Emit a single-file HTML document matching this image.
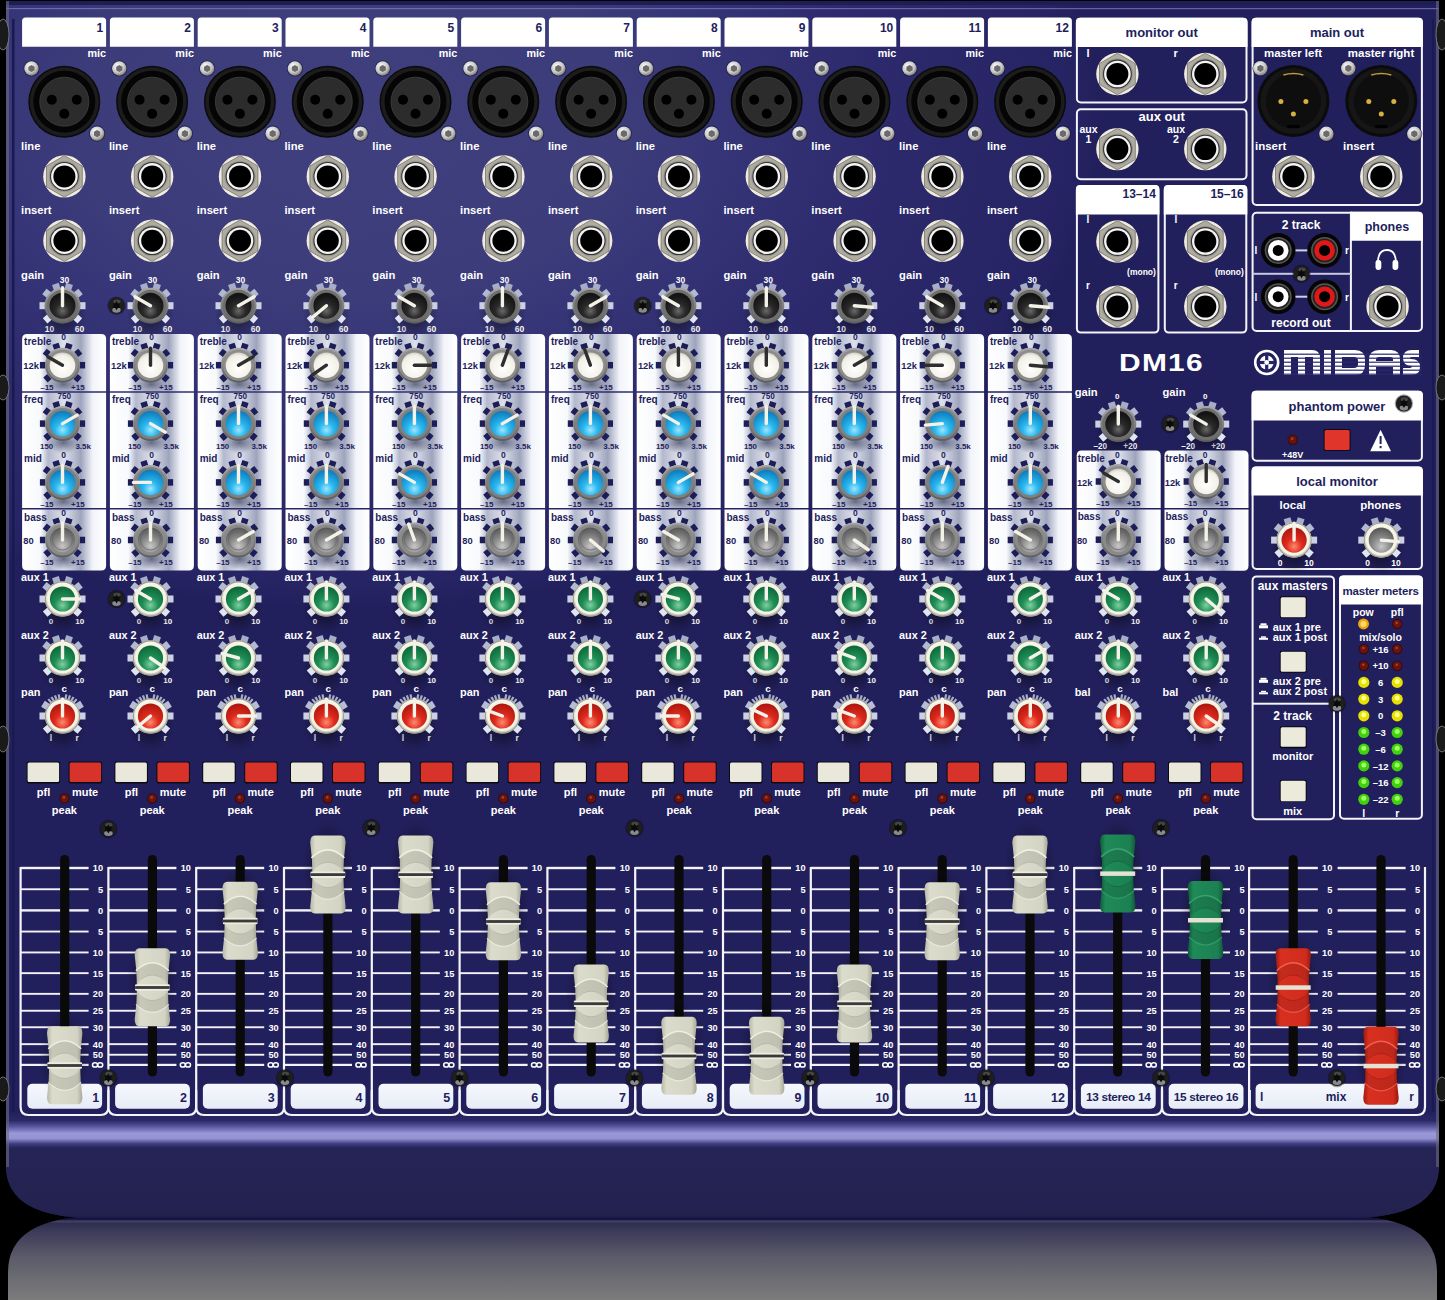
<!DOCTYPE html>
<html><head><meta charset="utf-8"><title>Midas DM16</title>
<style>html,body{margin:0;padding:0;background:#000;width:1445px;height:1300px;overflow:hidden} svg{display:block} text{font-family:"Liberation Sans",sans-serif;font-weight:bold}</style>
</head><body>
<svg width="1445" height="1300" viewBox="0 0 1445 1300" style="font-family:'Liberation Sans',sans-serif;font-weight:bold"><defs>
<radialGradient id="gPanel" gradientUnits="userSpaceOnUse" cx="350" cy="120" r="750" gradientTransform="translate(350,120) scale(1,0.65) translate(-350,-120)">
  <stop offset="0" stop-color="#40407e"/><stop offset="0.37" stop-color="#3c3c7a"/><stop offset="0.47" stop-color="#373678"/><stop offset="0.71" stop-color="#2c2a6c"/><stop offset="0.95" stop-color="#262464"/><stop offset="1" stop-color="#22205c"/>
</radialGradient>
<linearGradient id="gLip" x1="0" y1="0" x2="0" y2="1">
  <stop offset="0" stop-color="#22205c"/><stop offset="0.08" stop-color="#2a2966"/><stop offset="0.14" stop-color="#5a58a0"/><stop offset="0.2" stop-color="#9a98d8"/><stop offset="0.25" stop-color="#9492d0"/><stop offset="0.3" stop-color="#3e3d82"/><stop offset="0.34" stop-color="#252456"/><stop offset="0.97" stop-color="#23224f"/><stop offset="1" stop-color="#1c1b48"/>
</linearGradient>
<linearGradient id="gRefl" x1="0" y1="0" x2="0" y2="1">
  <stop offset="0" stop-color="#14123e"/><stop offset="0.04" stop-color="#14123e"/><stop offset="0.06" stop-color="#444266"/><stop offset="0.09" stop-color="#302e50"/><stop offset="0.16" stop-color="#3a3858"/><stop offset="0.5" stop-color="#5c5c6a"/><stop offset="1" stop-color="#7c7c7c"/>
</linearGradient>
<radialGradient id="gBlackKnob" cx="0.5" cy="0.7" r="0.6">
  <stop offset="0" stop-color="#6a6a6a"/><stop offset="0.45" stop-color="#2a2a2a"/><stop offset="1" stop-color="#141414"/>
</radialGradient>
<linearGradient id="gGreyRing" x1="0" y1="0" x2="0" y2="1">
  <stop offset="0" stop-color="#a8a8a8"/><stop offset="1" stop-color="#5c5c5c"/>
</linearGradient>
<radialGradient id="gWhiteKnob" cx="0.5" cy="0.6" r="0.6">
  <stop offset="0" stop-color="#ffffff"/><stop offset="0.8" stop-color="#f2f0e6"/><stop offset="1" stop-color="#cfcfc5"/>
</radialGradient>
<radialGradient id="gBlueKnob" cx="0.5" cy="0.75" r="0.7">
  <stop offset="0" stop-color="#9fe6ff"/><stop offset="0.4" stop-color="#2ab8ef"/><stop offset="1" stop-color="#0f7fc0"/>
</radialGradient>
<radialGradient id="gGreyKnob" cx="0.5" cy="0.75" r="0.7">
  <stop offset="0" stop-color="#c8c8c8"/><stop offset="0.5" stop-color="#8a8a8a"/><stop offset="1" stop-color="#5a5a5a"/>
</radialGradient>
<radialGradient id="gGreenKnob" cx="0.5" cy="0.75" r="0.7">
  <stop offset="0" stop-color="#7fd0a0"/><stop offset="0.45" stop-color="#1f8d56"/><stop offset="1" stop-color="#0f6a3a"/>
</radialGradient>
<radialGradient id="gRedKnob" cx="0.5" cy="0.75" r="0.7">
  <stop offset="0" stop-color="#ff8a70"/><stop offset="0.45" stop-color="#dd2a1c"/><stop offset="1" stop-color="#b01810"/>
</radialGradient>
<linearGradient id="gCreamRing" x1="0" y1="0" x2="0" y2="1">
  <stop offset="0" stop-color="#fbfaf0"/><stop offset="1" stop-color="#c9c8b8"/>
</linearGradient>
<radialGradient id="gShadow" cx="0.5" cy="0.5" r="0.5">
  <stop offset="0" stop-color="#000" stop-opacity="0.55"/><stop offset="1" stop-color="#000" stop-opacity="0"/>
</radialGradient>
<radialGradient id="gShadowW" cx="0.5" cy="0.5" r="0.5">
  <stop offset="0" stop-color="#30365a" stop-opacity="0.7"/><stop offset="0.5" stop-color="#30365a" stop-opacity="0.35"/><stop offset="1" stop-color="#30365a" stop-opacity="0"/>
</radialGradient>
<linearGradient id="gEqBand" x1="0" y1="0" x2="1" y2="0">
  <stop offset="0" stop-color="#ffffff"/><stop offset="0.22" stop-color="#f8f9fc"/><stop offset="0.31" stop-color="#b4b8cc"/><stop offset="0.5" stop-color="#dde1ec"/><stop offset="0.7" stop-color="#9ea4bc"/><stop offset="0.84" stop-color="#f2f4fa"/><stop offset="1" stop-color="#ffffff"/>
</linearGradient>
<linearGradient id="gJackNut" x1="0" y1="0" x2="1" y2="1">
  <stop offset="0" stop-color="#f4efe0"/><stop offset="0.5" stop-color="#a8a49a"/><stop offset="1" stop-color="#e0d6bc"/>
</linearGradient>
<radialGradient id="gScrewS" cx="0.4" cy="0.35" r="0.7">
  <stop offset="0" stop-color="#ffffff"/><stop offset="0.6" stop-color="#c8c8c8"/><stop offset="1" stop-color="#7a7468"/>
</radialGradient>
<radialGradient id="gScrewB" cx="0.5" cy="0.3" r="0.7">
  <stop offset="0" stop-color="#4a4a4a"/><stop offset="1" stop-color="#0c0c0c"/>
</radialGradient>
<linearGradient id="gCapCream" x1="0" y1="0" x2="1" y2="0">
  <stop offset="0" stop-color="#b8b8a8"/><stop offset="0.15" stop-color="#dcdccc"/><stop offset="0.85" stop-color="#d4d4c4"/><stop offset="1" stop-color="#a8a898"/>
</linearGradient>
<linearGradient id="gCapGreen" x1="0" y1="0" x2="1" y2="0">
  <stop offset="0" stop-color="#0f5c38"/><stop offset="0.15" stop-color="#1f8a58"/><stop offset="0.85" stop-color="#1c8052"/><stop offset="1" stop-color="#0f5a36"/>
</linearGradient>
<linearGradient id="gCapRed" x1="0" y1="0" x2="1" y2="0">
  <stop offset="0" stop-color="#9a1a10"/><stop offset="0.15" stop-color="#d83020"/><stop offset="0.85" stop-color="#d02c1e"/><stop offset="1" stop-color="#981810"/>
</linearGradient>
<linearGradient id="gLabel" x1="0" y1="0" x2="0" y2="1">
  <stop offset="0" stop-color="#f6f8fd"/><stop offset="1" stop-color="#e6ecf6"/>
</linearGradient>
<linearGradient id="gTick" gradientUnits="userSpaceOnUse" x1="0" y1="-24" x2="0" y2="24">
  <stop offset="0" stop-color="#a2aac4"/><stop offset="0.5" stop-color="#ccd3e8"/><stop offset="1" stop-color="#dfe4f4"/>
</linearGradient>
<filter id="blur2" x="-50%" y="-50%" width="200%" height="200%"><feGaussianBlur stdDeviation="2"/></filter>
<g id="tkLight"><rect x="-3.5" y="-23" width="7" height="6.199999999999999" fill="#e0e5f4" transform="rotate(-131)" opacity="1"/><rect x="-3.5" y="-23" width="7" height="6.199999999999999" fill="#cbd1e3" transform="rotate(-90)" opacity="1"/><rect x="-3.5" y="-23" width="7" height="6.199999999999999" fill="#b2bad1" transform="rotate(-52)" opacity="1"/><rect x="-3.5" y="-23" width="7" height="6.199999999999999" fill="#a5adc7" transform="rotate(-18)" opacity="1"/><rect x="-3.5" y="-23" width="7" height="6.199999999999999" fill="#a5adc7" transform="rotate(18)" opacity="1"/><rect x="-3.5" y="-23" width="7" height="6.199999999999999" fill="#b2bad1" transform="rotate(52)" opacity="1"/><rect x="-3.5" y="-23" width="7" height="6.199999999999999" fill="#cbd1e3" transform="rotate(90)" opacity="1"/><rect x="-3.5" y="-23" width="7" height="6.199999999999999" fill="#e0e5f4" transform="rotate(131)" opacity="1"/></g><g id="tkDark"><rect x="-3.25" y="-22.6" width="6.5" height="5.300000000000001" fill="#1d1d58" transform="rotate(-131)" opacity="1"/><rect x="-3.25" y="-22.6" width="6.5" height="5.300000000000001" fill="#1d1d58" transform="rotate(-90)" opacity="1"/><rect x="-3.25" y="-22.6" width="6.5" height="5.300000000000001" fill="#1d1d58" transform="rotate(-52)" opacity="1"/><rect x="-3.25" y="-22.6" width="6.5" height="5.300000000000001" fill="#1d1d58" transform="rotate(-18)" opacity="1"/><rect x="-3.25" y="-22.6" width="6.5" height="5.300000000000001" fill="#1d1d58" transform="rotate(18)" opacity="1"/><rect x="-3.25" y="-22.6" width="6.5" height="5.300000000000001" fill="#1d1d58" transform="rotate(52)" opacity="1"/><rect x="-3.25" y="-22.6" width="6.5" height="5.300000000000001" fill="#1d1d58" transform="rotate(90)" opacity="1"/><rect x="-3.25" y="-22.6" width="6.5" height="5.300000000000001" fill="#1d1d58" transform="rotate(131)" opacity="1"/></g><g id="tkPan"><rect x="-3.5" y="-23" width="7" height="6.199999999999999" fill="#e0e5f4" transform="rotate(-131)" opacity="1"/><rect x="-3.5" y="-23" width="7" height="6.199999999999999" fill="#cbd1e3" transform="rotate(-90)" opacity="1"/><rect x="-3.5" y="-23" width="7" height="6.199999999999999" fill="#b6bdd4" transform="rotate(-58)" opacity="1"/><rect x="-3.5" y="-23" width="7" height="6.199999999999999" fill="#b6bdd4" transform="rotate(58)" opacity="1"/><rect x="-3.5" y="-23" width="7" height="6.199999999999999" fill="#cbd1e3" transform="rotate(90)" opacity="1"/><rect x="-3.5" y="-23" width="7" height="6.199999999999999" fill="#e0e5f4" transform="rotate(131)" opacity="1"/><rect x="-1.1" y="-22" width="2.2" height="5" fill="#adb4cc" transform="rotate(-40)" opacity="1"/><rect x="-1.1" y="-22" width="2.2" height="5" fill="#a9b0ca" transform="rotate(-30)" opacity="1"/><rect x="-1.1" y="-22" width="2.2" height="5" fill="#a6aec7" transform="rotate(-20)" opacity="1"/><rect x="-1.1" y="-22" width="2.2" height="5" fill="#a4acc6" transform="rotate(-10)" opacity="1"/><rect x="-1.1" y="-22" width="2.2" height="5" fill="#a4acc6" transform="rotate(10)" opacity="1"/><rect x="-1.1" y="-22" width="2.2" height="5" fill="#a6aec7" transform="rotate(20)" opacity="1"/><rect x="-1.1" y="-22" width="2.2" height="5" fill="#a9b0ca" transform="rotate(30)" opacity="1"/><rect x="-1.1" y="-22" width="2.2" height="5" fill="#adb4cc" transform="rotate(40)" opacity="1"/></g><g id="kGain"><use href="#tkLight"/><circle r="18" fill="url(#gGreyRing)"/><circle r="16" fill="#6e6e6e"/><circle r="13" fill="url(#gBlackKnob)"/></g><g id="kTreble"><use href="#tkDark"/><circle r="17.5" fill="url(#gGreyRing)"/><circle r="15.5" fill="#8c8c8c"/><circle r="12.8" fill="url(#gWhiteKnob)"/></g><g id="kBlue"><use href="#tkDark"/><circle r="17.5" fill="url(#gGreyRing)"/><circle r="15.5" fill="#808080"/><circle r="12.8" fill="url(#gBlueKnob)"/></g><g id="kBass"><use href="#tkDark"/><circle r="17.5" fill="url(#gGreyRing)"/><circle r="15.5" fill="#8a8a8a"/><circle r="12.5" fill="url(#gGreyKnob)"/><circle r="10" fill="none" stroke="#6a6a6a" stroke-width="0.8"/></g><g id="kGreen"><use href="#tkLight"/><circle r="17.6" fill="url(#gCreamRing)"/><circle r="17.1" fill="none" stroke="#9e9c8c" stroke-width="1.1"/><circle r="15.3" fill="#f5f4e8"/><circle r="12.6" fill="url(#gGreenKnob)"/></g><g id="kRed"><use href="#tkPan"/><circle r="17.6" fill="url(#gCreamRing)"/><circle r="17.1" fill="none" stroke="#9e9c8c" stroke-width="1.1"/><circle r="15.3" fill="#f5f4e8"/><circle r="12.6" fill="url(#gRedKnob)"/></g><g id="kRedL"><use href="#tkLight"/><circle r="17.6" fill="url(#gCreamRing)"/><circle r="17.1" fill="none" stroke="#9e9c8c" stroke-width="1.1"/><circle r="15.3" fill="#f5f4e8"/><circle r="12.6" fill="url(#gRedKnob)"/></g><g id="kGreyL"><use href="#tkLight"/><circle r="17.6" fill="url(#gCreamRing)"/><circle r="17.1" fill="none" stroke="#9e9c8c" stroke-width="1.1"/><circle r="15.3" fill="#f5f4e8"/><circle r="12.6" fill="url(#gGreyKnob)"/></g><g id="jack"><circle r="21.2" fill="#efebdf"/><polygon points="0,-20.8 17.9,-10.4 17.9,10.4 0,20.8 -17.9,10.4 -17.9,-10.4" fill="#aeaba1" stroke="#77746a" stroke-width="0.8"/><circle r="15.6" fill="#97958c"/><circle r="14.4" fill="#333"/><circle r="13.3" fill="#f4f4f4"/><circle r="11" fill="#000"/></g><g id="xlrF"><circle r="36" fill="#0b0b0b"/><circle r="34.5" fill="#1c1c1c"/><circle r="31" fill="#050505"/><circle r="24.5" fill="#2c2c2c"/><circle r="24.5" fill="none" stroke="#3a3a3a" stroke-width="1"/><circle cx="-12.5" cy="-2" r="5" fill="#000"/><circle cx="12.5" cy="-2" r="5" fill="#000"/><circle cx="0" cy="12" r="5" fill="#000"/></g><g id="xlrM"><circle r="36" fill="#0b0b0b"/><circle r="33" fill="#161616"/><circle r="27.5" fill="#0e0e0e"/><path d="M-10,-26 Q0,-29 10,-26" stroke="#c09a38" stroke-width="1.6" fill="none"/><circle cx="-12.5" cy="0.5" r="2.5" fill="#d8b040"/><circle cx="12.5" cy="0.5" r="2.5" fill="#d8b040"/><circle cx="0" cy="13" r="2.5" fill="#d8b040"/><rect x="-6" y="24" width="12" height="3" fill="#000"/></g><g id="screwS"><circle r="8" fill="#101030" opacity="0.6"/><circle r="7.2" fill="url(#gScrewS)"/><polygon points="0,-3.6 3.1,-1.8 3.1,1.8 0,3.6 -3.1,1.8 -3.1,-1.8" fill="#6a6a6a"/></g><g id="screwB"><circle r="9.2" fill="#000" opacity="0.35"/><circle r="8.1" fill="#1e1e1c"/><ellipse cx="0" cy="4.3" rx="4.2" ry="2.7" fill="#9c9ca4" opacity="0.85"/><ellipse cx="0.5" cy="-4.3" rx="3.6" ry="2" fill="#606060" opacity="0.6"/><path d="M0,-4.6 L1.3,-2.3 3.9,-2.3 2.6,0 3.9,2.3 1.3,2.3 0,4.6 -1.3,2.3 -3.9,2.3 -2.6,0 -3.9,-2.3 -1.3,-2.3 Z" fill="#0a0a0a"/></g><g id="led"><circle r="5.2" fill="#3a0808"/><circle r="4.2" fill="#6a1410"/><circle cx="-0.5" cy="-1" r="1.3" fill="#a04030"/></g></defs><path d="M95,1216 L1350,1216 Q1437,1218 1437,1272 L1437,1300 L8,1300 L8,1272 Q8,1218 95,1216 Z" fill="url(#gRefl)"/>
<path d="M6,1 L1439,1 L1439,1166 Q1439,1218 1348,1218 L95,1218 Q6,1218 6,1166 Z" fill="url(#gPanel)"/>
<path d="M6,1112 L1439,1112 L1439,1166 Q1439,1218 1348,1218 L95,1218 Q6,1218 6,1166 Z" fill="url(#gLip)"/>
<rect x="6" y="1" width="1433" height="4" fill="#1e1d55"/>
<rect x="6" y="8" width="1433" height="1.2" fill="#8080c0" opacity="0.7"/>
<rect x="12" y="19" width="2.5" height="1093" fill="#1a1a52"/>
<rect x="1432" y="19" width="2" height="1093" fill="#1a1a52"/>
<rect x="6" y="1" width="3" height="1166" fill="#6a6a80" opacity="0.6"/>
<rect x="1436" y="1" width="3" height="1166" fill="#6a6a80" opacity="0.6"/>
<ellipse cx="3" cy="34.5" rx="6" ry="15.5" fill="#1a1a1a" stroke="#888" stroke-width="0.8"/>
<ellipse cx="1442" cy="34.5" rx="6" ry="15.5" fill="#1a1a1a" stroke="#888" stroke-width="0.8"/>
<ellipse cx="3" cy="387.5" rx="6" ry="12.5" fill="#1a1a1a" stroke="#888" stroke-width="0.8"/>
<ellipse cx="1442" cy="387.5" rx="6" ry="12.5" fill="#1a1a1a" stroke="#888" stroke-width="0.8"/>
<ellipse cx="3" cy="739.0" rx="6" ry="13.0" fill="#1a1a1a" stroke="#888" stroke-width="0.8"/>
<ellipse cx="1442" cy="739.0" rx="6" ry="13.0" fill="#1a1a1a" stroke="#888" stroke-width="0.8"/>
<ellipse cx="3" cy="1089.0" rx="6" ry="12.0" fill="#1a1a1a" stroke="#888" stroke-width="0.8"/>
<ellipse cx="1442" cy="1089.0" rx="6" ry="12.0" fill="#1a1a1a" stroke="#888" stroke-width="0.8"/>
<path d="M22.1,46.8 L22.1,21 Q22.1,17.5 25.6,17.5 L102.6,17.5 Q106.1,17.5 106.1,21 L106.1,46.8 Z" fill="#fff"/>
<text x="103.1" y="31.5" font-size="12" fill="#1e1e5c" text-anchor="end" >1</text>
<text x="106.1" y="57.0" font-size="10.8" fill="#fff" text-anchor="end" >mic</text>
<use href="#xlrF" x="64.3" y="101.7"/>
<use href="#screwS" x="31.5" y="68.5"/>
<use href="#screwS" x="97.1" y="133.6"/>
<text x="21.1" y="150.2" font-size="11.2" fill="#fff" text-anchor="start" >line</text>
<use href="#jack" x="64.4" y="176.4"/>
<text x="21.1" y="214.4" font-size="11.2" fill="#fff" text-anchor="start" >insert</text>
<use href="#jack" x="64.4" y="240.7"/>
<text x="21.1" y="278.5" font-size="11.2" fill="#fff" text-anchor="start" >gain</text>
<text x="64.5" y="283.0" font-size="8.5" fill="#fff" text-anchor="middle" >30</text>
<text x="49.5" y="332.0" font-size="8.5" fill="#fff" text-anchor="middle" >10</text>
<text x="79.5" y="332.0" font-size="8.5" fill="#fff" text-anchor="middle" >60</text>
<ellipse cx="62.5" cy="314.7" rx="24" ry="26" fill="url(#gShadow)"/>
<g transform="translate(62.5,305.7)"><use href="#kGain"/><line x1="0" y1="0" x2="0" y2="-18" stroke="#f4f2e8" stroke-width="3.4" stroke-linecap="round" transform="rotate(0)"/></g>
<path d="M22.1,339 Q22.1,334 27.1,334 L101.1,334 Q106.1,334 106.1,339 L106.1,391.2 Q106.1,391.2 106.1,391.2 L22.1,391.2 Q22.1,391.2 22.1,391.2 Z" fill="url(#gEqBand)"/>
<path d="M22.1,392.8 Q22.1,392.8 22.1,392.8 L106.1,392.8 Q106.1,392.8 106.1,392.8 L106.1,508 Q106.1,508 106.1,508 L22.1,508 Q22.1,508 22.1,508 Z" fill="url(#gEqBand)"/>
<path d="M22.1,509.6 Q22.1,509.6 22.1,509.6 L106.1,509.6 Q106.1,509.6 106.1,509.6 L106.1,565.6 Q106.1,570.6 101.1,570.6 L27.1,570.6 Q22.1,570.6 22.1,565.6 Z" fill="url(#gEqBand)"/>
<text x="24.1" y="345.0" font-size="10" fill="#1e1e5c" text-anchor="start" >treble</text>
<text x="63.5" y="340.0" font-size="8.5" fill="#1e1e5c" text-anchor="middle" >0</text>
<text x="23.3" y="368.6" font-size="9.4" fill="#1e1e5c" text-anchor="start" >12k</text>
<text x="40.2" y="390.0" font-size="8" fill="#1e1e5c" text-anchor="start" >–15</text>
<text x="84.7" y="390.0" font-size="8" fill="#1e1e5c" text-anchor="end" >+15</text>
<ellipse cx="63.5" cy="384.2" rx="16" ry="11" fill="url(#gShadowW)"/>
<g transform="translate(62.5,365.2)"><use href="#kTreble"/><line x1="0" y1="0" x2="0" y2="-17" stroke="#2e2e2e" stroke-width="3.4" stroke-linecap="round" transform="rotate(-60)"/></g>
<text x="24.1" y="402.5" font-size="10" fill="#1e1e5c" text-anchor="start" >freq</text>
<text x="64.3" y="399.3" font-size="8.2" fill="#1e1e5c" text-anchor="middle" >750</text>
<text x="46.6" y="448.8" font-size="7.8" fill="#1e1e5c" text-anchor="middle" >150</text>
<text x="83.2" y="448.8" font-size="8" fill="#1e1e5c" text-anchor="middle" >3.5k</text>
<ellipse cx="63.5" cy="442.6" rx="16" ry="11" fill="url(#gShadowW)"/>
<g transform="translate(62.5,423.6)"><use href="#kBlue"/><line x1="0" y1="0" x2="0" y2="-17" stroke="#f4f2e8" stroke-width="3.4" stroke-linecap="round" transform="rotate(60)"/></g>
<text x="24.1" y="461.5" font-size="10" fill="#1e1e5c" text-anchor="start" >mid</text>
<text x="63.5" y="457.5" font-size="8.5" fill="#1e1e5c" text-anchor="middle" >0</text>
<text x="40.2" y="506.8" font-size="8" fill="#1e1e5c" text-anchor="start" >–15</text>
<text x="84.7" y="506.8" font-size="8" fill="#1e1e5c" text-anchor="end" >+15</text>
<ellipse cx="63.5" cy="501.4" rx="16" ry="11" fill="url(#gShadowW)"/>
<g transform="translate(62.5,482.4)"><use href="#kBlue"/><line x1="0" y1="0" x2="0" y2="-17" stroke="#f4f2e8" stroke-width="3.4" stroke-linecap="round" transform="rotate(0)"/></g>
<text x="24.1" y="520.5" font-size="10" fill="#1e1e5c" text-anchor="start" >bass</text>
<text x="63.5" y="516.0" font-size="8.5" fill="#1e1e5c" text-anchor="middle" >0</text>
<text x="23.3" y="544.2" font-size="9.4" fill="#1e1e5c" text-anchor="start" >80</text>
<text x="40.2" y="565.4" font-size="8" fill="#1e1e5c" text-anchor="start" >–15</text>
<text x="84.7" y="565.4" font-size="8" fill="#1e1e5c" text-anchor="end" >+15</text>
<ellipse cx="63.5" cy="559.0" rx="16" ry="11" fill="url(#gShadowW)"/>
<g transform="translate(62.5,540.0)"><use href="#kBass"/><line x1="0" y1="0" x2="0" y2="-17" stroke="#f4f2e8" stroke-width="3.4" stroke-linecap="round" transform="rotate(0)"/></g>
<text x="21.1" y="581.0" font-size="10.8" fill="#fff" text-anchor="start" >aux 1</text>
<text x="51.1" y="624.3" font-size="8" fill="#fff" text-anchor="middle" >0</text>
<text x="79.7" y="624.3" font-size="8" fill="#fff" text-anchor="middle" >10</text>
<ellipse cx="62.5" cy="608.0" rx="24" ry="26" fill="url(#gShadow)"/>
<g transform="translate(62.5,599.0)"><use href="#kGreen"/><line x1="0" y1="0" x2="0" y2="-17" stroke="#f4f2e8" stroke-width="3.4" stroke-linecap="round" transform="rotate(90)"/></g>
<text x="21.1" y="639.0" font-size="10.8" fill="#fff" text-anchor="start" >aux 2</text>
<text x="51.1" y="683.0" font-size="8" fill="#fff" text-anchor="middle" >0</text>
<text x="79.7" y="683.0" font-size="8" fill="#fff" text-anchor="middle" >10</text>
<ellipse cx="62.5" cy="667.0" rx="24" ry="26" fill="url(#gShadow)"/>
<g transform="translate(62.5,658.0)"><use href="#kGreen"/><line x1="0" y1="0" x2="0" y2="-17" stroke="#f4f2e8" stroke-width="3.4" stroke-linecap="round" transform="rotate(0)"/></g>
<text x="21.1" y="696.0" font-size="10.9" fill="#fff" text-anchor="start" >pan</text>
<text x="64.3" y="691.5" font-size="9.8" fill="#fff" text-anchor="middle" >c</text>
<text x="51.0" y="740.6" font-size="8.5" fill="#fff" text-anchor="middle" >l</text>
<text x="77.2" y="740.6" font-size="8.5" fill="#fff" text-anchor="middle" >r</text>
<ellipse cx="62.5" cy="725.0" rx="24" ry="26" fill="url(#gShadow)"/>
<g transform="translate(62.5,716.0)"><use href="#kRed"/><line x1="0" y1="0" x2="0" y2="-17" stroke="#f4f2e8" stroke-width="3.4" stroke-linecap="round" transform="rotate(0)"/></g>
<rect x="26.6" y="761.5" width="33.5" height="22" rx="2" fill="#0a0a14"/>
<rect x="27.6" y="762.5" width="31.5" height="19.5" rx="1.5" fill="#e9e8da"/>
<rect x="68.6" y="761.5" width="33.5" height="22" rx="2" fill="#0a0a14"/>
<rect x="69.6" y="762.5" width="31.5" height="19.5" rx="1.5" fill="#d8332a"/>
<text x="43.6" y="795.5" font-size="11" fill="#fff" text-anchor="middle" >pfl</text>
<text x="85.1" y="796.0" font-size="11" fill="#fff" text-anchor="middle" >mute</text>
<use href="#led" x="64.4" y="798.4"/>
<text x="64.4" y="813.5" font-size="11" fill="#fff" text-anchor="middle" >peak</text>
<path d="M109.9,46.8 L109.9,21 Q109.9,17.5 113.4,17.5 L190.4,17.5 Q193.9,17.5 193.9,21 L193.9,46.8 Z" fill="#fff"/>
<text x="190.9" y="31.5" font-size="12" fill="#1e1e5c" text-anchor="end" >2</text>
<text x="193.9" y="57.0" font-size="10.8" fill="#fff" text-anchor="end" >mic</text>
<use href="#xlrF" x="152.1" y="101.7"/>
<use href="#screwS" x="119.3" y="68.5"/>
<use href="#screwS" x="184.9" y="133.6"/>
<text x="108.9" y="150.2" font-size="11.2" fill="#fff" text-anchor="start" >line</text>
<use href="#jack" x="152.2" y="176.4"/>
<text x="108.9" y="214.4" font-size="11.2" fill="#fff" text-anchor="start" >insert</text>
<use href="#jack" x="152.2" y="240.7"/>
<text x="108.9" y="278.5" font-size="11.2" fill="#fff" text-anchor="start" >gain</text>
<text x="152.5" y="283.0" font-size="8.5" fill="#fff" text-anchor="middle" >30</text>
<text x="137.5" y="332.0" font-size="8.5" fill="#fff" text-anchor="middle" >10</text>
<text x="167.5" y="332.0" font-size="8.5" fill="#fff" text-anchor="middle" >60</text>
<ellipse cx="150.5" cy="314.7" rx="24" ry="26" fill="url(#gShadow)"/>
<g transform="translate(150.5,305.7)"><use href="#kGain"/><line x1="0" y1="0" x2="0" y2="-18" stroke="#f4f2e8" stroke-width="3.4" stroke-linecap="round" transform="rotate(-60)"/></g>
<path d="M109.9,339 Q109.9,334 114.9,334 L188.9,334 Q193.9,334 193.9,339 L193.9,391.2 Q193.9,391.2 193.9,391.2 L109.9,391.2 Q109.9,391.2 109.9,391.2 Z" fill="url(#gEqBand)"/>
<path d="M109.9,392.8 Q109.9,392.8 109.9,392.8 L193.9,392.8 Q193.9,392.8 193.9,392.8 L193.9,508 Q193.9,508 193.9,508 L109.9,508 Q109.9,508 109.9,508 Z" fill="url(#gEqBand)"/>
<path d="M109.9,509.6 Q109.9,509.6 109.9,509.6 L193.9,509.6 Q193.9,509.6 193.9,509.6 L193.9,565.6 Q193.9,570.6 188.9,570.6 L114.9,570.6 Q109.9,570.6 109.9,565.6 Z" fill="url(#gEqBand)"/>
<text x="111.9" y="345.0" font-size="10" fill="#1e1e5c" text-anchor="start" >treble</text>
<text x="151.5" y="340.0" font-size="8.5" fill="#1e1e5c" text-anchor="middle" >0</text>
<text x="111.1" y="368.6" font-size="9.4" fill="#1e1e5c" text-anchor="start" >12k</text>
<text x="128.2" y="390.0" font-size="8" fill="#1e1e5c" text-anchor="start" >–15</text>
<text x="172.7" y="390.0" font-size="8" fill="#1e1e5c" text-anchor="end" >+15</text>
<ellipse cx="151.5" cy="384.2" rx="16" ry="11" fill="url(#gShadowW)"/>
<g transform="translate(150.5,365.2)"><use href="#kTreble"/><line x1="0" y1="0" x2="0" y2="-17" stroke="#2e2e2e" stroke-width="3.4" stroke-linecap="round" transform="rotate(0)"/></g>
<text x="111.9" y="402.5" font-size="10" fill="#1e1e5c" text-anchor="start" >freq</text>
<text x="152.3" y="399.3" font-size="8.2" fill="#1e1e5c" text-anchor="middle" >750</text>
<text x="134.6" y="448.8" font-size="7.8" fill="#1e1e5c" text-anchor="middle" >150</text>
<text x="171.2" y="448.8" font-size="8" fill="#1e1e5c" text-anchor="middle" >3.5k</text>
<ellipse cx="151.5" cy="442.6" rx="16" ry="11" fill="url(#gShadowW)"/>
<g transform="translate(150.5,423.6)"><use href="#kBlue"/><line x1="0" y1="0" x2="0" y2="-17" stroke="#f4f2e8" stroke-width="3.4" stroke-linecap="round" transform="rotate(120)"/></g>
<text x="111.9" y="461.5" font-size="10" fill="#1e1e5c" text-anchor="start" >mid</text>
<text x="151.5" y="457.5" font-size="8.5" fill="#1e1e5c" text-anchor="middle" >0</text>
<text x="128.2" y="506.8" font-size="8" fill="#1e1e5c" text-anchor="start" >–15</text>
<text x="172.7" y="506.8" font-size="8" fill="#1e1e5c" text-anchor="end" >+15</text>
<ellipse cx="151.5" cy="501.4" rx="16" ry="11" fill="url(#gShadowW)"/>
<g transform="translate(150.5,482.4)"><use href="#kBlue"/><line x1="0" y1="0" x2="0" y2="-17" stroke="#f4f2e8" stroke-width="3.4" stroke-linecap="round" transform="rotate(-90)"/></g>
<text x="111.9" y="520.5" font-size="10" fill="#1e1e5c" text-anchor="start" >bass</text>
<text x="151.5" y="516.0" font-size="8.5" fill="#1e1e5c" text-anchor="middle" >0</text>
<text x="111.1" y="544.2" font-size="9.4" fill="#1e1e5c" text-anchor="start" >80</text>
<text x="128.2" y="565.4" font-size="8" fill="#1e1e5c" text-anchor="start" >–15</text>
<text x="172.7" y="565.4" font-size="8" fill="#1e1e5c" text-anchor="end" >+15</text>
<ellipse cx="151.5" cy="559.0" rx="16" ry="11" fill="url(#gShadowW)"/>
<g transform="translate(150.5,540.0)"><use href="#kBass"/><line x1="0" y1="0" x2="0" y2="-17" stroke="#f4f2e8" stroke-width="3.4" stroke-linecap="round" transform="rotate(0)"/></g>
<text x="108.9" y="581.0" font-size="10.8" fill="#fff" text-anchor="start" >aux 1</text>
<text x="139.1" y="624.3" font-size="8" fill="#fff" text-anchor="middle" >0</text>
<text x="167.7" y="624.3" font-size="8" fill="#fff" text-anchor="middle" >10</text>
<ellipse cx="150.5" cy="608.0" rx="24" ry="26" fill="url(#gShadow)"/>
<g transform="translate(150.5,599.0)"><use href="#kGreen"/><line x1="0" y1="0" x2="0" y2="-17" stroke="#f4f2e8" stroke-width="3.4" stroke-linecap="round" transform="rotate(-60)"/></g>
<text x="108.9" y="639.0" font-size="10.8" fill="#fff" text-anchor="start" >aux 2</text>
<text x="139.1" y="683.0" font-size="8" fill="#fff" text-anchor="middle" >0</text>
<text x="167.7" y="683.0" font-size="8" fill="#fff" text-anchor="middle" >10</text>
<ellipse cx="150.5" cy="667.0" rx="24" ry="26" fill="url(#gShadow)"/>
<g transform="translate(150.5,658.0)"><use href="#kGreen"/><line x1="0" y1="0" x2="0" y2="-17" stroke="#f4f2e8" stroke-width="3.4" stroke-linecap="round" transform="rotate(125)"/></g>
<text x="108.9" y="696.0" font-size="10.9" fill="#fff" text-anchor="start" >pan</text>
<text x="152.3" y="691.5" font-size="9.8" fill="#fff" text-anchor="middle" >c</text>
<text x="139.0" y="740.6" font-size="8.5" fill="#fff" text-anchor="middle" >l</text>
<text x="165.2" y="740.6" font-size="8.5" fill="#fff" text-anchor="middle" >r</text>
<ellipse cx="150.5" cy="725.0" rx="24" ry="26" fill="url(#gShadow)"/>
<g transform="translate(150.5,716.0)"><use href="#kRed"/><line x1="0" y1="0" x2="0" y2="-17" stroke="#f4f2e8" stroke-width="3.4" stroke-linecap="round" transform="rotate(-130)"/></g>
<rect x="114.4" y="761.5" width="33.5" height="22" rx="2" fill="#0a0a14"/>
<rect x="115.4" y="762.5" width="31.5" height="19.5" rx="1.5" fill="#e9e8da"/>
<rect x="156.4" y="761.5" width="33.5" height="22" rx="2" fill="#0a0a14"/>
<rect x="157.4" y="762.5" width="31.5" height="19.5" rx="1.5" fill="#d8332a"/>
<text x="131.4" y="795.5" font-size="11" fill="#fff" text-anchor="middle" >pfl</text>
<text x="172.9" y="796.0" font-size="11" fill="#fff" text-anchor="middle" >mute</text>
<use href="#led" x="152.2" y="798.4"/>
<text x="152.2" y="813.5" font-size="11" fill="#fff" text-anchor="middle" >peak</text>
<path d="M197.7,46.8 L197.7,21 Q197.7,17.5 201.2,17.5 L278.2,17.5 Q281.7,17.5 281.7,21 L281.7,46.8 Z" fill="#fff"/>
<text x="278.7" y="31.5" font-size="12" fill="#1e1e5c" text-anchor="end" >3</text>
<text x="281.7" y="57.0" font-size="10.8" fill="#fff" text-anchor="end" >mic</text>
<use href="#xlrF" x="239.9" y="101.7"/>
<use href="#screwS" x="207.1" y="68.5"/>
<use href="#screwS" x="272.7" y="133.6"/>
<text x="196.7" y="150.2" font-size="11.2" fill="#fff" text-anchor="start" >line</text>
<use href="#jack" x="240.0" y="176.4"/>
<text x="196.7" y="214.4" font-size="11.2" fill="#fff" text-anchor="start" >insert</text>
<use href="#jack" x="240.0" y="240.7"/>
<text x="196.7" y="278.5" font-size="11.2" fill="#fff" text-anchor="start" >gain</text>
<text x="240.5" y="283.0" font-size="8.5" fill="#fff" text-anchor="middle" >30</text>
<text x="225.5" y="332.0" font-size="8.5" fill="#fff" text-anchor="middle" >10</text>
<text x="255.5" y="332.0" font-size="8.5" fill="#fff" text-anchor="middle" >60</text>
<ellipse cx="238.5" cy="314.7" rx="24" ry="26" fill="url(#gShadow)"/>
<g transform="translate(238.5,305.7)"><use href="#kGain"/><line x1="0" y1="0" x2="0" y2="-18" stroke="#f4f2e8" stroke-width="3.4" stroke-linecap="round" transform="rotate(60)"/></g>
<path d="M197.7,339 Q197.7,334 202.7,334 L276.7,334 Q281.7,334 281.7,339 L281.7,391.2 Q281.7,391.2 281.7,391.2 L197.7,391.2 Q197.7,391.2 197.7,391.2 Z" fill="url(#gEqBand)"/>
<path d="M197.7,392.8 Q197.7,392.8 197.7,392.8 L281.7,392.8 Q281.7,392.8 281.7,392.8 L281.7,508 Q281.7,508 281.7,508 L197.7,508 Q197.7,508 197.7,508 Z" fill="url(#gEqBand)"/>
<path d="M197.7,509.6 Q197.7,509.6 197.7,509.6 L281.7,509.6 Q281.7,509.6 281.7,509.6 L281.7,565.6 Q281.7,570.6 276.7,570.6 L202.7,570.6 Q197.7,570.6 197.7,565.6 Z" fill="url(#gEqBand)"/>
<text x="199.7" y="345.0" font-size="10" fill="#1e1e5c" text-anchor="start" >treble</text>
<text x="239.5" y="340.0" font-size="8.5" fill="#1e1e5c" text-anchor="middle" >0</text>
<text x="198.9" y="368.6" font-size="9.4" fill="#1e1e5c" text-anchor="start" >12k</text>
<text x="216.2" y="390.0" font-size="8" fill="#1e1e5c" text-anchor="start" >–15</text>
<text x="260.7" y="390.0" font-size="8" fill="#1e1e5c" text-anchor="end" >+15</text>
<ellipse cx="239.5" cy="384.2" rx="16" ry="11" fill="url(#gShadowW)"/>
<g transform="translate(238.5,365.2)"><use href="#kTreble"/><line x1="0" y1="0" x2="0" y2="-17" stroke="#2e2e2e" stroke-width="3.4" stroke-linecap="round" transform="rotate(60)"/></g>
<text x="199.7" y="402.5" font-size="10" fill="#1e1e5c" text-anchor="start" >freq</text>
<text x="240.3" y="399.3" font-size="8.2" fill="#1e1e5c" text-anchor="middle" >750</text>
<text x="222.6" y="448.8" font-size="7.8" fill="#1e1e5c" text-anchor="middle" >150</text>
<text x="259.2" y="448.8" font-size="8" fill="#1e1e5c" text-anchor="middle" >3.5k</text>
<ellipse cx="239.5" cy="442.6" rx="16" ry="11" fill="url(#gShadowW)"/>
<g transform="translate(238.5,423.6)"><use href="#kBlue"/><line x1="0" y1="0" x2="0" y2="-17" stroke="#f4f2e8" stroke-width="3.4" stroke-linecap="round" transform="rotate(0)"/></g>
<text x="199.7" y="461.5" font-size="10" fill="#1e1e5c" text-anchor="start" >mid</text>
<text x="239.5" y="457.5" font-size="8.5" fill="#1e1e5c" text-anchor="middle" >0</text>
<text x="216.2" y="506.8" font-size="8" fill="#1e1e5c" text-anchor="start" >–15</text>
<text x="260.7" y="506.8" font-size="8" fill="#1e1e5c" text-anchor="end" >+15</text>
<ellipse cx="239.5" cy="501.4" rx="16" ry="11" fill="url(#gShadowW)"/>
<g transform="translate(238.5,482.4)"><use href="#kBlue"/><line x1="0" y1="0" x2="0" y2="-17" stroke="#f4f2e8" stroke-width="3.4" stroke-linecap="round" transform="rotate(0)"/></g>
<text x="199.7" y="520.5" font-size="10" fill="#1e1e5c" text-anchor="start" >bass</text>
<text x="239.5" y="516.0" font-size="8.5" fill="#1e1e5c" text-anchor="middle" >0</text>
<text x="198.9" y="544.2" font-size="9.4" fill="#1e1e5c" text-anchor="start" >80</text>
<text x="216.2" y="565.4" font-size="8" fill="#1e1e5c" text-anchor="start" >–15</text>
<text x="260.7" y="565.4" font-size="8" fill="#1e1e5c" text-anchor="end" >+15</text>
<ellipse cx="239.5" cy="559.0" rx="16" ry="11" fill="url(#gShadowW)"/>
<g transform="translate(238.5,540.0)"><use href="#kBass"/><line x1="0" y1="0" x2="0" y2="-17" stroke="#f4f2e8" stroke-width="3.4" stroke-linecap="round" transform="rotate(60)"/></g>
<text x="196.7" y="581.0" font-size="10.8" fill="#fff" text-anchor="start" >aux 1</text>
<text x="227.1" y="624.3" font-size="8" fill="#fff" text-anchor="middle" >0</text>
<text x="255.7" y="624.3" font-size="8" fill="#fff" text-anchor="middle" >10</text>
<ellipse cx="238.5" cy="608.0" rx="24" ry="26" fill="url(#gShadow)"/>
<g transform="translate(238.5,599.0)"><use href="#kGreen"/><line x1="0" y1="0" x2="0" y2="-17" stroke="#f4f2e8" stroke-width="3.4" stroke-linecap="round" transform="rotate(60)"/></g>
<text x="196.7" y="639.0" font-size="10.8" fill="#fff" text-anchor="start" >aux 2</text>
<text x="227.1" y="683.0" font-size="8" fill="#fff" text-anchor="middle" >0</text>
<text x="255.7" y="683.0" font-size="8" fill="#fff" text-anchor="middle" >10</text>
<ellipse cx="238.5" cy="667.0" rx="24" ry="26" fill="url(#gShadow)"/>
<g transform="translate(238.5,658.0)"><use href="#kGreen"/><line x1="0" y1="0" x2="0" y2="-17" stroke="#f4f2e8" stroke-width="3.4" stroke-linecap="round" transform="rotate(-75)"/></g>
<text x="196.7" y="696.0" font-size="10.9" fill="#fff" text-anchor="start" >pan</text>
<text x="240.3" y="691.5" font-size="9.8" fill="#fff" text-anchor="middle" >c</text>
<text x="227.0" y="740.6" font-size="8.5" fill="#fff" text-anchor="middle" >l</text>
<text x="253.2" y="740.6" font-size="8.5" fill="#fff" text-anchor="middle" >r</text>
<ellipse cx="238.5" cy="725.0" rx="24" ry="26" fill="url(#gShadow)"/>
<g transform="translate(238.5,716.0)"><use href="#kRed"/><line x1="0" y1="0" x2="0" y2="-17" stroke="#f4f2e8" stroke-width="3.4" stroke-linecap="round" transform="rotate(90)"/></g>
<rect x="202.2" y="761.5" width="33.5" height="22" rx="2" fill="#0a0a14"/>
<rect x="203.2" y="762.5" width="31.5" height="19.5" rx="1.5" fill="#e9e8da"/>
<rect x="244.2" y="761.5" width="33.5" height="22" rx="2" fill="#0a0a14"/>
<rect x="245.2" y="762.5" width="31.5" height="19.5" rx="1.5" fill="#d8332a"/>
<text x="219.2" y="795.5" font-size="11" fill="#fff" text-anchor="middle" >pfl</text>
<text x="260.7" y="796.0" font-size="11" fill="#fff" text-anchor="middle" >mute</text>
<use href="#led" x="240.0" y="798.4"/>
<text x="240.0" y="813.5" font-size="11" fill="#fff" text-anchor="middle" >peak</text>
<path d="M285.5,46.8 L285.5,21 Q285.5,17.5 289.0,17.5 L366.0,17.5 Q369.5,17.5 369.5,21 L369.5,46.8 Z" fill="#fff"/>
<text x="366.5" y="31.5" font-size="12" fill="#1e1e5c" text-anchor="end" >4</text>
<text x="369.5" y="57.0" font-size="10.8" fill="#fff" text-anchor="end" >mic</text>
<use href="#xlrF" x="327.7" y="101.7"/>
<use href="#screwS" x="294.9" y="68.5"/>
<use href="#screwS" x="360.5" y="133.6"/>
<text x="284.5" y="150.2" font-size="11.2" fill="#fff" text-anchor="start" >line</text>
<use href="#jack" x="327.8" y="176.4"/>
<text x="284.5" y="214.4" font-size="11.2" fill="#fff" text-anchor="start" >insert</text>
<use href="#jack" x="327.8" y="240.7"/>
<text x="284.5" y="278.5" font-size="11.2" fill="#fff" text-anchor="start" >gain</text>
<text x="328.4" y="283.0" font-size="8.5" fill="#fff" text-anchor="middle" >30</text>
<text x="313.4" y="332.0" font-size="8.5" fill="#fff" text-anchor="middle" >10</text>
<text x="343.4" y="332.0" font-size="8.5" fill="#fff" text-anchor="middle" >60</text>
<ellipse cx="326.4" cy="314.7" rx="24" ry="26" fill="url(#gShadow)"/>
<g transform="translate(326.4,305.7)"><use href="#kGain"/><line x1="0" y1="0" x2="0" y2="-18" stroke="#f4f2e8" stroke-width="3.4" stroke-linecap="round" transform="rotate(-130)"/></g>
<path d="M285.5,339 Q285.5,334 290.5,334 L364.5,334 Q369.5,334 369.5,339 L369.5,391.2 Q369.5,391.2 369.5,391.2 L285.5,391.2 Q285.5,391.2 285.5,391.2 Z" fill="url(#gEqBand)"/>
<path d="M285.5,392.8 Q285.5,392.8 285.5,392.8 L369.5,392.8 Q369.5,392.8 369.5,392.8 L369.5,508 Q369.5,508 369.5,508 L285.5,508 Q285.5,508 285.5,508 Z" fill="url(#gEqBand)"/>
<path d="M285.5,509.6 Q285.5,509.6 285.5,509.6 L369.5,509.6 Q369.5,509.6 369.5,509.6 L369.5,565.6 Q369.5,570.6 364.5,570.6 L290.5,570.6 Q285.5,570.6 285.5,565.6 Z" fill="url(#gEqBand)"/>
<text x="287.5" y="345.0" font-size="10" fill="#1e1e5c" text-anchor="start" >treble</text>
<text x="327.4" y="340.0" font-size="8.5" fill="#1e1e5c" text-anchor="middle" >0</text>
<text x="286.7" y="368.6" font-size="9.4" fill="#1e1e5c" text-anchor="start" >12k</text>
<text x="304.1" y="390.0" font-size="8" fill="#1e1e5c" text-anchor="start" >–15</text>
<text x="348.6" y="390.0" font-size="8" fill="#1e1e5c" text-anchor="end" >+15</text>
<ellipse cx="327.4" cy="384.2" rx="16" ry="11" fill="url(#gShadowW)"/>
<g transform="translate(326.4,365.2)"><use href="#kTreble"/><line x1="0" y1="0" x2="0" y2="-17" stroke="#2e2e2e" stroke-width="3.4" stroke-linecap="round" transform="rotate(-125)"/></g>
<text x="287.5" y="402.5" font-size="10" fill="#1e1e5c" text-anchor="start" >freq</text>
<text x="328.2" y="399.3" font-size="8.2" fill="#1e1e5c" text-anchor="middle" >750</text>
<text x="310.5" y="448.8" font-size="7.8" fill="#1e1e5c" text-anchor="middle" >150</text>
<text x="347.1" y="448.8" font-size="8" fill="#1e1e5c" text-anchor="middle" >3.5k</text>
<ellipse cx="327.4" cy="442.6" rx="16" ry="11" fill="url(#gShadowW)"/>
<g transform="translate(326.4,423.6)"><use href="#kBlue"/><line x1="0" y1="0" x2="0" y2="-17" stroke="#f4f2e8" stroke-width="3.4" stroke-linecap="round" transform="rotate(0)"/></g>
<text x="287.5" y="461.5" font-size="10" fill="#1e1e5c" text-anchor="start" >mid</text>
<text x="327.4" y="457.5" font-size="8.5" fill="#1e1e5c" text-anchor="middle" >0</text>
<text x="304.1" y="506.8" font-size="8" fill="#1e1e5c" text-anchor="start" >–15</text>
<text x="348.6" y="506.8" font-size="8" fill="#1e1e5c" text-anchor="end" >+15</text>
<ellipse cx="327.4" cy="501.4" rx="16" ry="11" fill="url(#gShadowW)"/>
<g transform="translate(326.4,482.4)"><use href="#kBlue"/><line x1="0" y1="0" x2="0" y2="-17" stroke="#f4f2e8" stroke-width="3.4" stroke-linecap="round" transform="rotate(0)"/></g>
<text x="287.5" y="520.5" font-size="10" fill="#1e1e5c" text-anchor="start" >bass</text>
<text x="327.4" y="516.0" font-size="8.5" fill="#1e1e5c" text-anchor="middle" >0</text>
<text x="286.7" y="544.2" font-size="9.4" fill="#1e1e5c" text-anchor="start" >80</text>
<text x="304.1" y="565.4" font-size="8" fill="#1e1e5c" text-anchor="start" >–15</text>
<text x="348.6" y="565.4" font-size="8" fill="#1e1e5c" text-anchor="end" >+15</text>
<ellipse cx="327.4" cy="559.0" rx="16" ry="11" fill="url(#gShadowW)"/>
<g transform="translate(326.4,540.0)"><use href="#kBass"/><line x1="0" y1="0" x2="0" y2="-17" stroke="#f4f2e8" stroke-width="3.4" stroke-linecap="round" transform="rotate(60)"/></g>
<text x="284.5" y="581.0" font-size="10.8" fill="#fff" text-anchor="start" >aux 1</text>
<text x="315.0" y="624.3" font-size="8" fill="#fff" text-anchor="middle" >0</text>
<text x="343.6" y="624.3" font-size="8" fill="#fff" text-anchor="middle" >10</text>
<ellipse cx="326.4" cy="608.0" rx="24" ry="26" fill="url(#gShadow)"/>
<g transform="translate(326.4,599.0)"><use href="#kGreen"/><line x1="0" y1="0" x2="0" y2="-17" stroke="#f4f2e8" stroke-width="3.4" stroke-linecap="round" transform="rotate(0)"/></g>
<text x="284.5" y="639.0" font-size="10.8" fill="#fff" text-anchor="start" >aux 2</text>
<text x="315.0" y="683.0" font-size="8" fill="#fff" text-anchor="middle" >0</text>
<text x="343.6" y="683.0" font-size="8" fill="#fff" text-anchor="middle" >10</text>
<ellipse cx="326.4" cy="667.0" rx="24" ry="26" fill="url(#gShadow)"/>
<g transform="translate(326.4,658.0)"><use href="#kGreen"/><line x1="0" y1="0" x2="0" y2="-17" stroke="#f4f2e8" stroke-width="3.4" stroke-linecap="round" transform="rotate(0)"/></g>
<text x="284.5" y="696.0" font-size="10.9" fill="#fff" text-anchor="start" >pan</text>
<text x="328.2" y="691.5" font-size="9.8" fill="#fff" text-anchor="middle" >c</text>
<text x="314.9" y="740.6" font-size="8.5" fill="#fff" text-anchor="middle" >l</text>
<text x="341.1" y="740.6" font-size="8.5" fill="#fff" text-anchor="middle" >r</text>
<ellipse cx="326.4" cy="725.0" rx="24" ry="26" fill="url(#gShadow)"/>
<g transform="translate(326.4,716.0)"><use href="#kRed"/><line x1="0" y1="0" x2="0" y2="-17" stroke="#f4f2e8" stroke-width="3.4" stroke-linecap="round" transform="rotate(0)"/></g>
<rect x="290.0" y="761.5" width="33.5" height="22" rx="2" fill="#0a0a14"/>
<rect x="291.0" y="762.5" width="31.5" height="19.5" rx="1.5" fill="#e9e8da"/>
<rect x="332.0" y="761.5" width="33.5" height="22" rx="2" fill="#0a0a14"/>
<rect x="333.0" y="762.5" width="31.5" height="19.5" rx="1.5" fill="#d8332a"/>
<text x="307.0" y="795.5" font-size="11" fill="#fff" text-anchor="middle" >pfl</text>
<text x="348.5" y="796.0" font-size="11" fill="#fff" text-anchor="middle" >mute</text>
<use href="#led" x="327.8" y="798.4"/>
<text x="327.8" y="813.5" font-size="11" fill="#fff" text-anchor="middle" >peak</text>
<path d="M373.3,46.8 L373.3,21 Q373.3,17.5 376.8,17.5 L453.8,17.5 Q457.3,17.5 457.3,21 L457.3,46.8 Z" fill="#fff"/>
<text x="454.3" y="31.5" font-size="12" fill="#1e1e5c" text-anchor="end" >5</text>
<text x="457.3" y="57.0" font-size="10.8" fill="#fff" text-anchor="end" >mic</text>
<use href="#xlrF" x="415.5" y="101.7"/>
<use href="#screwS" x="382.7" y="68.5"/>
<use href="#screwS" x="448.3" y="133.6"/>
<text x="372.3" y="150.2" font-size="11.2" fill="#fff" text-anchor="start" >line</text>
<use href="#jack" x="415.6" y="176.4"/>
<text x="372.3" y="214.4" font-size="11.2" fill="#fff" text-anchor="start" >insert</text>
<use href="#jack" x="415.6" y="240.7"/>
<text x="372.3" y="278.5" font-size="11.2" fill="#fff" text-anchor="start" >gain</text>
<text x="416.4" y="283.0" font-size="8.5" fill="#fff" text-anchor="middle" >30</text>
<text x="401.4" y="332.0" font-size="8.5" fill="#fff" text-anchor="middle" >10</text>
<text x="431.4" y="332.0" font-size="8.5" fill="#fff" text-anchor="middle" >60</text>
<ellipse cx="414.4" cy="314.7" rx="24" ry="26" fill="url(#gShadow)"/>
<g transform="translate(414.4,305.7)"><use href="#kGain"/><line x1="0" y1="0" x2="0" y2="-18" stroke="#f4f2e8" stroke-width="3.4" stroke-linecap="round" transform="rotate(-60)"/></g>
<path d="M373.3,339 Q373.3,334 378.3,334 L452.3,334 Q457.3,334 457.3,339 L457.3,391.2 Q457.3,391.2 457.3,391.2 L373.3,391.2 Q373.3,391.2 373.3,391.2 Z" fill="url(#gEqBand)"/>
<path d="M373.3,392.8 Q373.3,392.8 373.3,392.8 L457.3,392.8 Q457.3,392.8 457.3,392.8 L457.3,508 Q457.3,508 457.3,508 L373.3,508 Q373.3,508 373.3,508 Z" fill="url(#gEqBand)"/>
<path d="M373.3,509.6 Q373.3,509.6 373.3,509.6 L457.3,509.6 Q457.3,509.6 457.3,509.6 L457.3,565.6 Q457.3,570.6 452.3,570.6 L378.3,570.6 Q373.3,570.6 373.3,565.6 Z" fill="url(#gEqBand)"/>
<text x="375.3" y="345.0" font-size="10" fill="#1e1e5c" text-anchor="start" >treble</text>
<text x="415.4" y="340.0" font-size="8.5" fill="#1e1e5c" text-anchor="middle" >0</text>
<text x="374.5" y="368.6" font-size="9.4" fill="#1e1e5c" text-anchor="start" >12k</text>
<text x="392.1" y="390.0" font-size="8" fill="#1e1e5c" text-anchor="start" >–15</text>
<text x="436.6" y="390.0" font-size="8" fill="#1e1e5c" text-anchor="end" >+15</text>
<ellipse cx="415.4" cy="384.2" rx="16" ry="11" fill="url(#gShadowW)"/>
<g transform="translate(414.4,365.2)"><use href="#kTreble"/><line x1="0" y1="0" x2="0" y2="-17" stroke="#2e2e2e" stroke-width="3.4" stroke-linecap="round" transform="rotate(90)"/></g>
<text x="375.3" y="402.5" font-size="10" fill="#1e1e5c" text-anchor="start" >freq</text>
<text x="416.2" y="399.3" font-size="8.2" fill="#1e1e5c" text-anchor="middle" >750</text>
<text x="398.5" y="448.8" font-size="7.8" fill="#1e1e5c" text-anchor="middle" >150</text>
<text x="435.1" y="448.8" font-size="8" fill="#1e1e5c" text-anchor="middle" >3.5k</text>
<ellipse cx="415.4" cy="442.6" rx="16" ry="11" fill="url(#gShadowW)"/>
<g transform="translate(414.4,423.6)"><use href="#kBlue"/><line x1="0" y1="0" x2="0" y2="-17" stroke="#f4f2e8" stroke-width="3.4" stroke-linecap="round" transform="rotate(0)"/></g>
<text x="375.3" y="461.5" font-size="10" fill="#1e1e5c" text-anchor="start" >mid</text>
<text x="415.4" y="457.5" font-size="8.5" fill="#1e1e5c" text-anchor="middle" >0</text>
<text x="392.1" y="506.8" font-size="8" fill="#1e1e5c" text-anchor="start" >–15</text>
<text x="436.6" y="506.8" font-size="8" fill="#1e1e5c" text-anchor="end" >+15</text>
<ellipse cx="415.4" cy="501.4" rx="16" ry="11" fill="url(#gShadowW)"/>
<g transform="translate(414.4,482.4)"><use href="#kBlue"/><line x1="0" y1="0" x2="0" y2="-17" stroke="#f4f2e8" stroke-width="3.4" stroke-linecap="round" transform="rotate(-60)"/></g>
<text x="375.3" y="520.5" font-size="10" fill="#1e1e5c" text-anchor="start" >bass</text>
<text x="415.4" y="516.0" font-size="8.5" fill="#1e1e5c" text-anchor="middle" >0</text>
<text x="374.5" y="544.2" font-size="9.4" fill="#1e1e5c" text-anchor="start" >80</text>
<text x="392.1" y="565.4" font-size="8" fill="#1e1e5c" text-anchor="start" >–15</text>
<text x="436.6" y="565.4" font-size="8" fill="#1e1e5c" text-anchor="end" >+15</text>
<ellipse cx="415.4" cy="559.0" rx="16" ry="11" fill="url(#gShadowW)"/>
<g transform="translate(414.4,540.0)"><use href="#kBass"/><line x1="0" y1="0" x2="0" y2="-17" stroke="#f4f2e8" stroke-width="3.4" stroke-linecap="round" transform="rotate(-20)"/></g>
<text x="372.3" y="581.0" font-size="10.8" fill="#fff" text-anchor="start" >aux 1</text>
<text x="403.0" y="624.3" font-size="8" fill="#fff" text-anchor="middle" >0</text>
<text x="431.6" y="624.3" font-size="8" fill="#fff" text-anchor="middle" >10</text>
<ellipse cx="414.4" cy="608.0" rx="24" ry="26" fill="url(#gShadow)"/>
<g transform="translate(414.4,599.0)"><use href="#kGreen"/><line x1="0" y1="0" x2="0" y2="-17" stroke="#f4f2e8" stroke-width="3.4" stroke-linecap="round" transform="rotate(0)"/></g>
<text x="372.3" y="639.0" font-size="10.8" fill="#fff" text-anchor="start" >aux 2</text>
<text x="403.0" y="683.0" font-size="8" fill="#fff" text-anchor="middle" >0</text>
<text x="431.6" y="683.0" font-size="8" fill="#fff" text-anchor="middle" >10</text>
<ellipse cx="414.4" cy="667.0" rx="24" ry="26" fill="url(#gShadow)"/>
<g transform="translate(414.4,658.0)"><use href="#kGreen"/><line x1="0" y1="0" x2="0" y2="-17" stroke="#f4f2e8" stroke-width="3.4" stroke-linecap="round" transform="rotate(0)"/></g>
<text x="372.3" y="696.0" font-size="10.9" fill="#fff" text-anchor="start" >pan</text>
<text x="416.2" y="691.5" font-size="9.8" fill="#fff" text-anchor="middle" >c</text>
<text x="402.9" y="740.6" font-size="8.5" fill="#fff" text-anchor="middle" >l</text>
<text x="429.1" y="740.6" font-size="8.5" fill="#fff" text-anchor="middle" >r</text>
<ellipse cx="414.4" cy="725.0" rx="24" ry="26" fill="url(#gShadow)"/>
<g transform="translate(414.4,716.0)"><use href="#kRed"/><line x1="0" y1="0" x2="0" y2="-17" stroke="#f4f2e8" stroke-width="3.4" stroke-linecap="round" transform="rotate(0)"/></g>
<rect x="377.8" y="761.5" width="33.5" height="22" rx="2" fill="#0a0a14"/>
<rect x="378.8" y="762.5" width="31.5" height="19.5" rx="1.5" fill="#e9e8da"/>
<rect x="419.8" y="761.5" width="33.5" height="22" rx="2" fill="#0a0a14"/>
<rect x="420.8" y="762.5" width="31.5" height="19.5" rx="1.5" fill="#d8332a"/>
<text x="394.8" y="795.5" font-size="11" fill="#fff" text-anchor="middle" >pfl</text>
<text x="436.3" y="796.0" font-size="11" fill="#fff" text-anchor="middle" >mute</text>
<use href="#led" x="415.6" y="798.4"/>
<text x="415.6" y="813.5" font-size="11" fill="#fff" text-anchor="middle" >peak</text>
<path d="M461.1,46.8 L461.1,21 Q461.1,17.5 464.6,17.5 L541.6,17.5 Q545.1,17.5 545.1,21 L545.1,46.8 Z" fill="#fff"/>
<text x="542.1" y="31.5" font-size="12" fill="#1e1e5c" text-anchor="end" >6</text>
<text x="545.1" y="57.0" font-size="10.8" fill="#fff" text-anchor="end" >mic</text>
<use href="#xlrF" x="503.3" y="101.7"/>
<use href="#screwS" x="470.5" y="68.5"/>
<use href="#screwS" x="536.1" y="133.6"/>
<text x="460.1" y="150.2" font-size="11.2" fill="#fff" text-anchor="start" >line</text>
<use href="#jack" x="503.4" y="176.4"/>
<text x="460.1" y="214.4" font-size="11.2" fill="#fff" text-anchor="start" >insert</text>
<use href="#jack" x="503.4" y="240.7"/>
<text x="460.1" y="278.5" font-size="11.2" fill="#fff" text-anchor="start" >gain</text>
<text x="504.4" y="283.0" font-size="8.5" fill="#fff" text-anchor="middle" >30</text>
<text x="489.4" y="332.0" font-size="8.5" fill="#fff" text-anchor="middle" >10</text>
<text x="519.4" y="332.0" font-size="8.5" fill="#fff" text-anchor="middle" >60</text>
<ellipse cx="502.4" cy="314.7" rx="24" ry="26" fill="url(#gShadow)"/>
<g transform="translate(502.4,305.7)"><use href="#kGain"/><line x1="0" y1="0" x2="0" y2="-18" stroke="#f4f2e8" stroke-width="3.4" stroke-linecap="round" transform="rotate(0)"/></g>
<path d="M461.1,339 Q461.1,334 466.1,334 L540.1,334 Q545.1,334 545.1,339 L545.1,391.2 Q545.1,391.2 545.1,391.2 L461.1,391.2 Q461.1,391.2 461.1,391.2 Z" fill="url(#gEqBand)"/>
<path d="M461.1,392.8 Q461.1,392.8 461.1,392.8 L545.1,392.8 Q545.1,392.8 545.1,392.8 L545.1,508 Q545.1,508 545.1,508 L461.1,508 Q461.1,508 461.1,508 Z" fill="url(#gEqBand)"/>
<path d="M461.1,509.6 Q461.1,509.6 461.1,509.6 L545.1,509.6 Q545.1,509.6 545.1,509.6 L545.1,565.6 Q545.1,570.6 540.1,570.6 L466.1,570.6 Q461.1,570.6 461.1,565.6 Z" fill="url(#gEqBand)"/>
<text x="463.1" y="345.0" font-size="10" fill="#1e1e5c" text-anchor="start" >treble</text>
<text x="503.4" y="340.0" font-size="8.5" fill="#1e1e5c" text-anchor="middle" >0</text>
<text x="462.3" y="368.6" font-size="9.4" fill="#1e1e5c" text-anchor="start" >12k</text>
<text x="480.1" y="390.0" font-size="8" fill="#1e1e5c" text-anchor="start" >–15</text>
<text x="524.6" y="390.0" font-size="8" fill="#1e1e5c" text-anchor="end" >+15</text>
<ellipse cx="503.4" cy="384.2" rx="16" ry="11" fill="url(#gShadowW)"/>
<g transform="translate(502.4,365.2)"><use href="#kTreble"/><line x1="0" y1="0" x2="0" y2="-17" stroke="#2e2e2e" stroke-width="3.4" stroke-linecap="round" transform="rotate(20)"/></g>
<text x="463.1" y="402.5" font-size="10" fill="#1e1e5c" text-anchor="start" >freq</text>
<text x="504.2" y="399.3" font-size="8.2" fill="#1e1e5c" text-anchor="middle" >750</text>
<text x="486.5" y="448.8" font-size="7.8" fill="#1e1e5c" text-anchor="middle" >150</text>
<text x="523.1" y="448.8" font-size="8" fill="#1e1e5c" text-anchor="middle" >3.5k</text>
<ellipse cx="503.4" cy="442.6" rx="16" ry="11" fill="url(#gShadowW)"/>
<g transform="translate(502.4,423.6)"><use href="#kBlue"/><line x1="0" y1="0" x2="0" y2="-17" stroke="#f4f2e8" stroke-width="3.4" stroke-linecap="round" transform="rotate(60)"/></g>
<text x="463.1" y="461.5" font-size="10" fill="#1e1e5c" text-anchor="start" >mid</text>
<text x="503.4" y="457.5" font-size="8.5" fill="#1e1e5c" text-anchor="middle" >0</text>
<text x="480.1" y="506.8" font-size="8" fill="#1e1e5c" text-anchor="start" >–15</text>
<text x="524.6" y="506.8" font-size="8" fill="#1e1e5c" text-anchor="end" >+15</text>
<ellipse cx="503.4" cy="501.4" rx="16" ry="11" fill="url(#gShadowW)"/>
<g transform="translate(502.4,482.4)"><use href="#kBlue"/><line x1="0" y1="0" x2="0" y2="-17" stroke="#f4f2e8" stroke-width="3.4" stroke-linecap="round" transform="rotate(0)"/></g>
<text x="463.1" y="520.5" font-size="10" fill="#1e1e5c" text-anchor="start" >bass</text>
<text x="503.4" y="516.0" font-size="8.5" fill="#1e1e5c" text-anchor="middle" >0</text>
<text x="462.3" y="544.2" font-size="9.4" fill="#1e1e5c" text-anchor="start" >80</text>
<text x="480.1" y="565.4" font-size="8" fill="#1e1e5c" text-anchor="start" >–15</text>
<text x="524.6" y="565.4" font-size="8" fill="#1e1e5c" text-anchor="end" >+15</text>
<ellipse cx="503.4" cy="559.0" rx="16" ry="11" fill="url(#gShadowW)"/>
<g transform="translate(502.4,540.0)"><use href="#kBass"/><line x1="0" y1="0" x2="0" y2="-17" stroke="#f4f2e8" stroke-width="3.4" stroke-linecap="round" transform="rotate(0)"/></g>
<text x="460.1" y="581.0" font-size="10.8" fill="#fff" text-anchor="start" >aux 1</text>
<text x="491.0" y="624.3" font-size="8" fill="#fff" text-anchor="middle" >0</text>
<text x="519.6" y="624.3" font-size="8" fill="#fff" text-anchor="middle" >10</text>
<ellipse cx="502.4" cy="608.0" rx="24" ry="26" fill="url(#gShadow)"/>
<g transform="translate(502.4,599.0)"><use href="#kGreen"/><line x1="0" y1="0" x2="0" y2="-17" stroke="#f4f2e8" stroke-width="3.4" stroke-linecap="round" transform="rotate(0)"/></g>
<text x="460.1" y="639.0" font-size="10.8" fill="#fff" text-anchor="start" >aux 2</text>
<text x="491.0" y="683.0" font-size="8" fill="#fff" text-anchor="middle" >0</text>
<text x="519.6" y="683.0" font-size="8" fill="#fff" text-anchor="middle" >10</text>
<ellipse cx="502.4" cy="667.0" rx="24" ry="26" fill="url(#gShadow)"/>
<g transform="translate(502.4,658.0)"><use href="#kGreen"/><line x1="0" y1="0" x2="0" y2="-17" stroke="#f4f2e8" stroke-width="3.4" stroke-linecap="round" transform="rotate(0)"/></g>
<text x="460.1" y="696.0" font-size="10.9" fill="#fff" text-anchor="start" >pan</text>
<text x="504.2" y="691.5" font-size="9.8" fill="#fff" text-anchor="middle" >c</text>
<text x="490.9" y="740.6" font-size="8.5" fill="#fff" text-anchor="middle" >l</text>
<text x="517.1" y="740.6" font-size="8.5" fill="#fff" text-anchor="middle" >r</text>
<ellipse cx="502.4" cy="725.0" rx="24" ry="26" fill="url(#gShadow)"/>
<g transform="translate(502.4,716.0)"><use href="#kRed"/><line x1="0" y1="0" x2="0" y2="-17" stroke="#f4f2e8" stroke-width="3.4" stroke-linecap="round" transform="rotate(-70)"/></g>
<rect x="465.6" y="761.5" width="33.5" height="22" rx="2" fill="#0a0a14"/>
<rect x="466.6" y="762.5" width="31.5" height="19.5" rx="1.5" fill="#e9e8da"/>
<rect x="507.6" y="761.5" width="33.5" height="22" rx="2" fill="#0a0a14"/>
<rect x="508.6" y="762.5" width="31.5" height="19.5" rx="1.5" fill="#d8332a"/>
<text x="482.6" y="795.5" font-size="11" fill="#fff" text-anchor="middle" >pfl</text>
<text x="524.1" y="796.0" font-size="11" fill="#fff" text-anchor="middle" >mute</text>
<use href="#led" x="503.4" y="798.4"/>
<text x="503.4" y="813.5" font-size="11" fill="#fff" text-anchor="middle" >peak</text>
<path d="M548.9,46.8 L548.9,21 Q548.9,17.5 552.4,17.5 L629.4,17.5 Q632.9,17.5 632.9,21 L632.9,46.8 Z" fill="#fff"/>
<text x="629.9" y="31.5" font-size="12" fill="#1e1e5c" text-anchor="end" >7</text>
<text x="632.9" y="57.0" font-size="10.8" fill="#fff" text-anchor="end" >mic</text>
<use href="#xlrF" x="591.1" y="101.7"/>
<use href="#screwS" x="558.3" y="68.5"/>
<use href="#screwS" x="623.9" y="133.6"/>
<text x="547.9" y="150.2" font-size="11.2" fill="#fff" text-anchor="start" >line</text>
<use href="#jack" x="591.2" y="176.4"/>
<text x="547.9" y="214.4" font-size="11.2" fill="#fff" text-anchor="start" >insert</text>
<use href="#jack" x="591.2" y="240.7"/>
<text x="547.9" y="278.5" font-size="11.2" fill="#fff" text-anchor="start" >gain</text>
<text x="592.4" y="283.0" font-size="8.5" fill="#fff" text-anchor="middle" >30</text>
<text x="577.4" y="332.0" font-size="8.5" fill="#fff" text-anchor="middle" >10</text>
<text x="607.4" y="332.0" font-size="8.5" fill="#fff" text-anchor="middle" >60</text>
<ellipse cx="590.4" cy="314.7" rx="24" ry="26" fill="url(#gShadow)"/>
<g transform="translate(590.4,305.7)"><use href="#kGain"/><line x1="0" y1="0" x2="0" y2="-18" stroke="#f4f2e8" stroke-width="3.4" stroke-linecap="round" transform="rotate(60)"/></g>
<path d="M548.9,339 Q548.9,334 553.9,334 L627.9,334 Q632.9,334 632.9,339 L632.9,391.2 Q632.9,391.2 632.9,391.2 L548.9,391.2 Q548.9,391.2 548.9,391.2 Z" fill="url(#gEqBand)"/>
<path d="M548.9,392.8 Q548.9,392.8 548.9,392.8 L632.9,392.8 Q632.9,392.8 632.9,392.8 L632.9,508 Q632.9,508 632.9,508 L548.9,508 Q548.9,508 548.9,508 Z" fill="url(#gEqBand)"/>
<path d="M548.9,509.6 Q548.9,509.6 548.9,509.6 L632.9,509.6 Q632.9,509.6 632.9,509.6 L632.9,565.6 Q632.9,570.6 627.9,570.6 L553.9,570.6 Q548.9,570.6 548.9,565.6 Z" fill="url(#gEqBand)"/>
<text x="550.9" y="345.0" font-size="10" fill="#1e1e5c" text-anchor="start" >treble</text>
<text x="591.4" y="340.0" font-size="8.5" fill="#1e1e5c" text-anchor="middle" >0</text>
<text x="550.1" y="368.6" font-size="9.4" fill="#1e1e5c" text-anchor="start" >12k</text>
<text x="568.1" y="390.0" font-size="8" fill="#1e1e5c" text-anchor="start" >–15</text>
<text x="612.6" y="390.0" font-size="8" fill="#1e1e5c" text-anchor="end" >+15</text>
<ellipse cx="591.4" cy="384.2" rx="16" ry="11" fill="url(#gShadowW)"/>
<g transform="translate(590.4,365.2)"><use href="#kTreble"/><line x1="0" y1="0" x2="0" y2="-17" stroke="#2e2e2e" stroke-width="3.4" stroke-linecap="round" transform="rotate(-20)"/></g>
<text x="550.9" y="402.5" font-size="10" fill="#1e1e5c" text-anchor="start" >freq</text>
<text x="592.2" y="399.3" font-size="8.2" fill="#1e1e5c" text-anchor="middle" >750</text>
<text x="574.5" y="448.8" font-size="7.8" fill="#1e1e5c" text-anchor="middle" >150</text>
<text x="611.1" y="448.8" font-size="8" fill="#1e1e5c" text-anchor="middle" >3.5k</text>
<ellipse cx="591.4" cy="442.6" rx="16" ry="11" fill="url(#gShadowW)"/>
<g transform="translate(590.4,423.6)"><use href="#kBlue"/><line x1="0" y1="0" x2="0" y2="-17" stroke="#f4f2e8" stroke-width="3.4" stroke-linecap="round" transform="rotate(0)"/></g>
<text x="550.9" y="461.5" font-size="10" fill="#1e1e5c" text-anchor="start" >mid</text>
<text x="591.4" y="457.5" font-size="8.5" fill="#1e1e5c" text-anchor="middle" >0</text>
<text x="568.1" y="506.8" font-size="8" fill="#1e1e5c" text-anchor="start" >–15</text>
<text x="612.6" y="506.8" font-size="8" fill="#1e1e5c" text-anchor="end" >+15</text>
<ellipse cx="591.4" cy="501.4" rx="16" ry="11" fill="url(#gShadowW)"/>
<g transform="translate(590.4,482.4)"><use href="#kBlue"/><line x1="0" y1="0" x2="0" y2="-17" stroke="#f4f2e8" stroke-width="3.4" stroke-linecap="round" transform="rotate(0)"/></g>
<text x="550.9" y="520.5" font-size="10" fill="#1e1e5c" text-anchor="start" >bass</text>
<text x="591.4" y="516.0" font-size="8.5" fill="#1e1e5c" text-anchor="middle" >0</text>
<text x="550.1" y="544.2" font-size="9.4" fill="#1e1e5c" text-anchor="start" >80</text>
<text x="568.1" y="565.4" font-size="8" fill="#1e1e5c" text-anchor="start" >–15</text>
<text x="612.6" y="565.4" font-size="8" fill="#1e1e5c" text-anchor="end" >+15</text>
<ellipse cx="591.4" cy="559.0" rx="16" ry="11" fill="url(#gShadowW)"/>
<g transform="translate(590.4,540.0)"><use href="#kBass"/><line x1="0" y1="0" x2="0" y2="-17" stroke="#f4f2e8" stroke-width="3.4" stroke-linecap="round" transform="rotate(130)"/></g>
<text x="547.9" y="581.0" font-size="10.8" fill="#fff" text-anchor="start" >aux 1</text>
<text x="579.0" y="624.3" font-size="8" fill="#fff" text-anchor="middle" >0</text>
<text x="607.6" y="624.3" font-size="8" fill="#fff" text-anchor="middle" >10</text>
<ellipse cx="590.4" cy="608.0" rx="24" ry="26" fill="url(#gShadow)"/>
<g transform="translate(590.4,599.0)"><use href="#kGreen"/><line x1="0" y1="0" x2="0" y2="-17" stroke="#f4f2e8" stroke-width="3.4" stroke-linecap="round" transform="rotate(0)"/></g>
<text x="547.9" y="639.0" font-size="10.8" fill="#fff" text-anchor="start" >aux 2</text>
<text x="579.0" y="683.0" font-size="8" fill="#fff" text-anchor="middle" >0</text>
<text x="607.6" y="683.0" font-size="8" fill="#fff" text-anchor="middle" >10</text>
<ellipse cx="590.4" cy="667.0" rx="24" ry="26" fill="url(#gShadow)"/>
<g transform="translate(590.4,658.0)"><use href="#kGreen"/><line x1="0" y1="0" x2="0" y2="-17" stroke="#f4f2e8" stroke-width="3.4" stroke-linecap="round" transform="rotate(0)"/></g>
<text x="547.9" y="696.0" font-size="10.9" fill="#fff" text-anchor="start" >pan</text>
<text x="592.2" y="691.5" font-size="9.8" fill="#fff" text-anchor="middle" >c</text>
<text x="578.9" y="740.6" font-size="8.5" fill="#fff" text-anchor="middle" >l</text>
<text x="605.1" y="740.6" font-size="8.5" fill="#fff" text-anchor="middle" >r</text>
<ellipse cx="590.4" cy="725.0" rx="24" ry="26" fill="url(#gShadow)"/>
<g transform="translate(590.4,716.0)"><use href="#kRed"/><line x1="0" y1="0" x2="0" y2="-17" stroke="#f4f2e8" stroke-width="3.4" stroke-linecap="round" transform="rotate(0)"/></g>
<rect x="553.4" y="761.5" width="33.5" height="22" rx="2" fill="#0a0a14"/>
<rect x="554.4" y="762.5" width="31.5" height="19.5" rx="1.5" fill="#e9e8da"/>
<rect x="595.4" y="761.5" width="33.5" height="22" rx="2" fill="#0a0a14"/>
<rect x="596.4" y="762.5" width="31.5" height="19.5" rx="1.5" fill="#d8332a"/>
<text x="570.4" y="795.5" font-size="11" fill="#fff" text-anchor="middle" >pfl</text>
<text x="611.9" y="796.0" font-size="11" fill="#fff" text-anchor="middle" >mute</text>
<use href="#led" x="591.2" y="798.4"/>
<text x="591.2" y="813.5" font-size="11" fill="#fff" text-anchor="middle" >peak</text>
<path d="M636.7,46.8 L636.7,21 Q636.7,17.5 640.2,17.5 L717.2,17.5 Q720.7,17.5 720.7,21 L720.7,46.8 Z" fill="#fff"/>
<text x="717.7" y="31.5" font-size="12" fill="#1e1e5c" text-anchor="end" >8</text>
<text x="720.7" y="57.0" font-size="10.8" fill="#fff" text-anchor="end" >mic</text>
<use href="#xlrF" x="678.9" y="101.7"/>
<use href="#screwS" x="646.1" y="68.5"/>
<use href="#screwS" x="711.7" y="133.6"/>
<text x="635.7" y="150.2" font-size="11.2" fill="#fff" text-anchor="start" >line</text>
<use href="#jack" x="679.0" y="176.4"/>
<text x="635.7" y="214.4" font-size="11.2" fill="#fff" text-anchor="start" >insert</text>
<use href="#jack" x="679.0" y="240.7"/>
<text x="635.7" y="278.5" font-size="11.2" fill="#fff" text-anchor="start" >gain</text>
<text x="680.4" y="283.0" font-size="8.5" fill="#fff" text-anchor="middle" >30</text>
<text x="665.4" y="332.0" font-size="8.5" fill="#fff" text-anchor="middle" >10</text>
<text x="695.4" y="332.0" font-size="8.5" fill="#fff" text-anchor="middle" >60</text>
<ellipse cx="678.4" cy="314.7" rx="24" ry="26" fill="url(#gShadow)"/>
<g transform="translate(678.4,305.7)"><use href="#kGain"/><line x1="0" y1="0" x2="0" y2="-18" stroke="#f4f2e8" stroke-width="3.4" stroke-linecap="round" transform="rotate(-60)"/></g>
<path d="M636.7,339 Q636.7,334 641.7,334 L715.7,334 Q720.7,334 720.7,339 L720.7,391.2 Q720.7,391.2 720.7,391.2 L636.7,391.2 Q636.7,391.2 636.7,391.2 Z" fill="url(#gEqBand)"/>
<path d="M636.7,392.8 Q636.7,392.8 636.7,392.8 L720.7,392.8 Q720.7,392.8 720.7,392.8 L720.7,508 Q720.7,508 720.7,508 L636.7,508 Q636.7,508 636.7,508 Z" fill="url(#gEqBand)"/>
<path d="M636.7,509.6 Q636.7,509.6 636.7,509.6 L720.7,509.6 Q720.7,509.6 720.7,509.6 L720.7,565.6 Q720.7,570.6 715.7,570.6 L641.7,570.6 Q636.7,570.6 636.7,565.6 Z" fill="url(#gEqBand)"/>
<text x="638.7" y="345.0" font-size="10" fill="#1e1e5c" text-anchor="start" >treble</text>
<text x="679.4" y="340.0" font-size="8.5" fill="#1e1e5c" text-anchor="middle" >0</text>
<text x="637.9" y="368.6" font-size="9.4" fill="#1e1e5c" text-anchor="start" >12k</text>
<text x="656.1" y="390.0" font-size="8" fill="#1e1e5c" text-anchor="start" >–15</text>
<text x="700.6" y="390.0" font-size="8" fill="#1e1e5c" text-anchor="end" >+15</text>
<ellipse cx="679.4" cy="384.2" rx="16" ry="11" fill="url(#gShadowW)"/>
<g transform="translate(678.4,365.2)"><use href="#kTreble"/><line x1="0" y1="0" x2="0" y2="-17" stroke="#2e2e2e" stroke-width="3.4" stroke-linecap="round" transform="rotate(0)"/></g>
<text x="638.7" y="402.5" font-size="10" fill="#1e1e5c" text-anchor="start" >freq</text>
<text x="680.2" y="399.3" font-size="8.2" fill="#1e1e5c" text-anchor="middle" >750</text>
<text x="662.5" y="448.8" font-size="7.8" fill="#1e1e5c" text-anchor="middle" >150</text>
<text x="699.1" y="448.8" font-size="8" fill="#1e1e5c" text-anchor="middle" >3.5k</text>
<ellipse cx="679.4" cy="442.6" rx="16" ry="11" fill="url(#gShadowW)"/>
<g transform="translate(678.4,423.6)"><use href="#kBlue"/><line x1="0" y1="0" x2="0" y2="-17" stroke="#f4f2e8" stroke-width="3.4" stroke-linecap="round" transform="rotate(-60)"/></g>
<text x="638.7" y="461.5" font-size="10" fill="#1e1e5c" text-anchor="start" >mid</text>
<text x="679.4" y="457.5" font-size="8.5" fill="#1e1e5c" text-anchor="middle" >0</text>
<text x="656.1" y="506.8" font-size="8" fill="#1e1e5c" text-anchor="start" >–15</text>
<text x="700.6" y="506.8" font-size="8" fill="#1e1e5c" text-anchor="end" >+15</text>
<ellipse cx="679.4" cy="501.4" rx="16" ry="11" fill="url(#gShadowW)"/>
<g transform="translate(678.4,482.4)"><use href="#kBlue"/><line x1="0" y1="0" x2="0" y2="-17" stroke="#f4f2e8" stroke-width="3.4" stroke-linecap="round" transform="rotate(60)"/></g>
<text x="638.7" y="520.5" font-size="10" fill="#1e1e5c" text-anchor="start" >bass</text>
<text x="679.4" y="516.0" font-size="8.5" fill="#1e1e5c" text-anchor="middle" >0</text>
<text x="637.9" y="544.2" font-size="9.4" fill="#1e1e5c" text-anchor="start" >80</text>
<text x="656.1" y="565.4" font-size="8" fill="#1e1e5c" text-anchor="start" >–15</text>
<text x="700.6" y="565.4" font-size="8" fill="#1e1e5c" text-anchor="end" >+15</text>
<ellipse cx="679.4" cy="559.0" rx="16" ry="11" fill="url(#gShadowW)"/>
<g transform="translate(678.4,540.0)"><use href="#kBass"/><line x1="0" y1="0" x2="0" y2="-17" stroke="#f4f2e8" stroke-width="3.4" stroke-linecap="round" transform="rotate(-60)"/></g>
<text x="635.7" y="581.0" font-size="10.8" fill="#fff" text-anchor="start" >aux 1</text>
<text x="667.0" y="624.3" font-size="8" fill="#fff" text-anchor="middle" >0</text>
<text x="695.6" y="624.3" font-size="8" fill="#fff" text-anchor="middle" >10</text>
<ellipse cx="678.4" cy="608.0" rx="24" ry="26" fill="url(#gShadow)"/>
<g transform="translate(678.4,599.0)"><use href="#kGreen"/><line x1="0" y1="0" x2="0" y2="-17" stroke="#f4f2e8" stroke-width="3.4" stroke-linecap="round" transform="rotate(-75)"/></g>
<text x="635.7" y="639.0" font-size="10.8" fill="#fff" text-anchor="start" >aux 2</text>
<text x="667.0" y="683.0" font-size="8" fill="#fff" text-anchor="middle" >0</text>
<text x="695.6" y="683.0" font-size="8" fill="#fff" text-anchor="middle" >10</text>
<ellipse cx="678.4" cy="667.0" rx="24" ry="26" fill="url(#gShadow)"/>
<g transform="translate(678.4,658.0)"><use href="#kGreen"/><line x1="0" y1="0" x2="0" y2="-17" stroke="#f4f2e8" stroke-width="3.4" stroke-linecap="round" transform="rotate(0)"/></g>
<text x="635.7" y="696.0" font-size="10.9" fill="#fff" text-anchor="start" >pan</text>
<text x="680.2" y="691.5" font-size="9.8" fill="#fff" text-anchor="middle" >c</text>
<text x="666.9" y="740.6" font-size="8.5" fill="#fff" text-anchor="middle" >l</text>
<text x="693.1" y="740.6" font-size="8.5" fill="#fff" text-anchor="middle" >r</text>
<ellipse cx="678.4" cy="725.0" rx="24" ry="26" fill="url(#gShadow)"/>
<g transform="translate(678.4,716.0)"><use href="#kRed"/><line x1="0" y1="0" x2="0" y2="-17" stroke="#f4f2e8" stroke-width="3.4" stroke-linecap="round" transform="rotate(-90)"/></g>
<rect x="641.2" y="761.5" width="33.5" height="22" rx="2" fill="#0a0a14"/>
<rect x="642.2" y="762.5" width="31.5" height="19.5" rx="1.5" fill="#e9e8da"/>
<rect x="683.2" y="761.5" width="33.5" height="22" rx="2" fill="#0a0a14"/>
<rect x="684.2" y="762.5" width="31.5" height="19.5" rx="1.5" fill="#d8332a"/>
<text x="658.2" y="795.5" font-size="11" fill="#fff" text-anchor="middle" >pfl</text>
<text x="699.7" y="796.0" font-size="11" fill="#fff" text-anchor="middle" >mute</text>
<use href="#led" x="679.0" y="798.4"/>
<text x="679.0" y="813.5" font-size="11" fill="#fff" text-anchor="middle" >peak</text>
<path d="M724.5,46.8 L724.5,21 Q724.5,17.5 728.0,17.5 L805.0,17.5 Q808.5,17.5 808.5,21 L808.5,46.8 Z" fill="#fff"/>
<text x="805.5" y="31.5" font-size="12" fill="#1e1e5c" text-anchor="end" >9</text>
<text x="808.5" y="57.0" font-size="10.8" fill="#fff" text-anchor="end" >mic</text>
<use href="#xlrF" x="766.7" y="101.7"/>
<use href="#screwS" x="733.9" y="68.5"/>
<use href="#screwS" x="799.5" y="133.6"/>
<text x="723.5" y="150.2" font-size="11.2" fill="#fff" text-anchor="start" >line</text>
<use href="#jack" x="766.8" y="176.4"/>
<text x="723.5" y="214.4" font-size="11.2" fill="#fff" text-anchor="start" >insert</text>
<use href="#jack" x="766.8" y="240.7"/>
<text x="723.5" y="278.5" font-size="11.2" fill="#fff" text-anchor="start" >gain</text>
<text x="768.3" y="283.0" font-size="8.5" fill="#fff" text-anchor="middle" >30</text>
<text x="753.3" y="332.0" font-size="8.5" fill="#fff" text-anchor="middle" >10</text>
<text x="783.3" y="332.0" font-size="8.5" fill="#fff" text-anchor="middle" >60</text>
<ellipse cx="766.3" cy="314.7" rx="24" ry="26" fill="url(#gShadow)"/>
<g transform="translate(766.3,305.7)"><use href="#kGain"/><line x1="0" y1="0" x2="0" y2="-18" stroke="#f4f2e8" stroke-width="3.4" stroke-linecap="round" transform="rotate(0)"/></g>
<path d="M724.5,339 Q724.5,334 729.5,334 L803.5,334 Q808.5,334 808.5,339 L808.5,391.2 Q808.5,391.2 808.5,391.2 L724.5,391.2 Q724.5,391.2 724.5,391.2 Z" fill="url(#gEqBand)"/>
<path d="M724.5,392.8 Q724.5,392.8 724.5,392.8 L808.5,392.8 Q808.5,392.8 808.5,392.8 L808.5,508 Q808.5,508 808.5,508 L724.5,508 Q724.5,508 724.5,508 Z" fill="url(#gEqBand)"/>
<path d="M724.5,509.6 Q724.5,509.6 724.5,509.6 L808.5,509.6 Q808.5,509.6 808.5,509.6 L808.5,565.6 Q808.5,570.6 803.5,570.6 L729.5,570.6 Q724.5,570.6 724.5,565.6 Z" fill="url(#gEqBand)"/>
<text x="726.5" y="345.0" font-size="10" fill="#1e1e5c" text-anchor="start" >treble</text>
<text x="767.3" y="340.0" font-size="8.5" fill="#1e1e5c" text-anchor="middle" >0</text>
<text x="725.7" y="368.6" font-size="9.4" fill="#1e1e5c" text-anchor="start" >12k</text>
<text x="744.0" y="390.0" font-size="8" fill="#1e1e5c" text-anchor="start" >–15</text>
<text x="788.5" y="390.0" font-size="8" fill="#1e1e5c" text-anchor="end" >+15</text>
<ellipse cx="767.3" cy="384.2" rx="16" ry="11" fill="url(#gShadowW)"/>
<g transform="translate(766.3,365.2)"><use href="#kTreble"/><line x1="0" y1="0" x2="0" y2="-17" stroke="#2e2e2e" stroke-width="3.4" stroke-linecap="round" transform="rotate(0)"/></g>
<text x="726.5" y="402.5" font-size="10" fill="#1e1e5c" text-anchor="start" >freq</text>
<text x="768.1" y="399.3" font-size="8.2" fill="#1e1e5c" text-anchor="middle" >750</text>
<text x="750.4" y="448.8" font-size="7.8" fill="#1e1e5c" text-anchor="middle" >150</text>
<text x="787.0" y="448.8" font-size="8" fill="#1e1e5c" text-anchor="middle" >3.5k</text>
<ellipse cx="767.3" cy="442.6" rx="16" ry="11" fill="url(#gShadowW)"/>
<g transform="translate(766.3,423.6)"><use href="#kBlue"/><line x1="0" y1="0" x2="0" y2="-17" stroke="#f4f2e8" stroke-width="3.4" stroke-linecap="round" transform="rotate(0)"/></g>
<text x="726.5" y="461.5" font-size="10" fill="#1e1e5c" text-anchor="start" >mid</text>
<text x="767.3" y="457.5" font-size="8.5" fill="#1e1e5c" text-anchor="middle" >0</text>
<text x="744.0" y="506.8" font-size="8" fill="#1e1e5c" text-anchor="start" >–15</text>
<text x="788.5" y="506.8" font-size="8" fill="#1e1e5c" text-anchor="end" >+15</text>
<ellipse cx="767.3" cy="501.4" rx="16" ry="11" fill="url(#gShadowW)"/>
<g transform="translate(766.3,482.4)"><use href="#kBlue"/><line x1="0" y1="0" x2="0" y2="-17" stroke="#f4f2e8" stroke-width="3.4" stroke-linecap="round" transform="rotate(-60)"/></g>
<text x="726.5" y="520.5" font-size="10" fill="#1e1e5c" text-anchor="start" >bass</text>
<text x="767.3" y="516.0" font-size="8.5" fill="#1e1e5c" text-anchor="middle" >0</text>
<text x="725.7" y="544.2" font-size="9.4" fill="#1e1e5c" text-anchor="start" >80</text>
<text x="744.0" y="565.4" font-size="8" fill="#1e1e5c" text-anchor="start" >–15</text>
<text x="788.5" y="565.4" font-size="8" fill="#1e1e5c" text-anchor="end" >+15</text>
<ellipse cx="767.3" cy="559.0" rx="16" ry="11" fill="url(#gShadowW)"/>
<g transform="translate(766.3,540.0)"><use href="#kBass"/><line x1="0" y1="0" x2="0" y2="-17" stroke="#f4f2e8" stroke-width="3.4" stroke-linecap="round" transform="rotate(0)"/></g>
<text x="723.5" y="581.0" font-size="10.8" fill="#fff" text-anchor="start" >aux 1</text>
<text x="754.9" y="624.3" font-size="8" fill="#fff" text-anchor="middle" >0</text>
<text x="783.5" y="624.3" font-size="8" fill="#fff" text-anchor="middle" >10</text>
<ellipse cx="766.3" cy="608.0" rx="24" ry="26" fill="url(#gShadow)"/>
<g transform="translate(766.3,599.0)"><use href="#kGreen"/><line x1="0" y1="0" x2="0" y2="-17" stroke="#f4f2e8" stroke-width="3.4" stroke-linecap="round" transform="rotate(0)"/></g>
<text x="723.5" y="639.0" font-size="10.8" fill="#fff" text-anchor="start" >aux 2</text>
<text x="754.9" y="683.0" font-size="8" fill="#fff" text-anchor="middle" >0</text>
<text x="783.5" y="683.0" font-size="8" fill="#fff" text-anchor="middle" >10</text>
<ellipse cx="766.3" cy="667.0" rx="24" ry="26" fill="url(#gShadow)"/>
<g transform="translate(766.3,658.0)"><use href="#kGreen"/><line x1="0" y1="0" x2="0" y2="-17" stroke="#f4f2e8" stroke-width="3.4" stroke-linecap="round" transform="rotate(0)"/></g>
<text x="723.5" y="696.0" font-size="10.9" fill="#fff" text-anchor="start" >pan</text>
<text x="768.1" y="691.5" font-size="9.8" fill="#fff" text-anchor="middle" >c</text>
<text x="754.8" y="740.6" font-size="8.5" fill="#fff" text-anchor="middle" >l</text>
<text x="781.0" y="740.6" font-size="8.5" fill="#fff" text-anchor="middle" >r</text>
<ellipse cx="766.3" cy="725.0" rx="24" ry="26" fill="url(#gShadow)"/>
<g transform="translate(766.3,716.0)"><use href="#kRed"/><line x1="0" y1="0" x2="0" y2="-17" stroke="#f4f2e8" stroke-width="3.4" stroke-linecap="round" transform="rotate(-65)"/></g>
<rect x="729.0" y="761.5" width="33.5" height="22" rx="2" fill="#0a0a14"/>
<rect x="730.0" y="762.5" width="31.5" height="19.5" rx="1.5" fill="#e9e8da"/>
<rect x="771.0" y="761.5" width="33.5" height="22" rx="2" fill="#0a0a14"/>
<rect x="772.0" y="762.5" width="31.5" height="19.5" rx="1.5" fill="#d8332a"/>
<text x="746.0" y="795.5" font-size="11" fill="#fff" text-anchor="middle" >pfl</text>
<text x="787.5" y="796.0" font-size="11" fill="#fff" text-anchor="middle" >mute</text>
<use href="#led" x="766.8" y="798.4"/>
<text x="766.8" y="813.5" font-size="11" fill="#fff" text-anchor="middle" >peak</text>
<path d="M812.3,46.8 L812.3,21 Q812.3,17.5 815.8,17.5 L892.8,17.5 Q896.3,17.5 896.3,21 L896.3,46.8 Z" fill="#fff"/>
<text x="893.3" y="31.5" font-size="12" fill="#1e1e5c" text-anchor="end" >10</text>
<text x="896.3" y="57.0" font-size="10.8" fill="#fff" text-anchor="end" >mic</text>
<use href="#xlrF" x="854.5" y="101.7"/>
<use href="#screwS" x="821.7" y="68.5"/>
<use href="#screwS" x="887.3" y="133.6"/>
<text x="811.3" y="150.2" font-size="11.2" fill="#fff" text-anchor="start" >line</text>
<use href="#jack" x="854.6" y="176.4"/>
<text x="811.3" y="214.4" font-size="11.2" fill="#fff" text-anchor="start" >insert</text>
<use href="#jack" x="854.6" y="240.7"/>
<text x="811.3" y="278.5" font-size="11.2" fill="#fff" text-anchor="start" >gain</text>
<text x="856.3" y="283.0" font-size="8.5" fill="#fff" text-anchor="middle" >30</text>
<text x="841.3" y="332.0" font-size="8.5" fill="#fff" text-anchor="middle" >10</text>
<text x="871.3" y="332.0" font-size="8.5" fill="#fff" text-anchor="middle" >60</text>
<ellipse cx="854.3" cy="314.7" rx="24" ry="26" fill="url(#gShadow)"/>
<g transform="translate(854.3,305.7)"><use href="#kGain"/><line x1="0" y1="0" x2="0" y2="-18" stroke="#f4f2e8" stroke-width="3.4" stroke-linecap="round" transform="rotate(95)"/></g>
<path d="M812.3,339 Q812.3,334 817.3,334 L891.3,334 Q896.3,334 896.3,339 L896.3,391.2 Q896.3,391.2 896.3,391.2 L812.3,391.2 Q812.3,391.2 812.3,391.2 Z" fill="url(#gEqBand)"/>
<path d="M812.3,392.8 Q812.3,392.8 812.3,392.8 L896.3,392.8 Q896.3,392.8 896.3,392.8 L896.3,508 Q896.3,508 896.3,508 L812.3,508 Q812.3,508 812.3,508 Z" fill="url(#gEqBand)"/>
<path d="M812.3,509.6 Q812.3,509.6 812.3,509.6 L896.3,509.6 Q896.3,509.6 896.3,509.6 L896.3,565.6 Q896.3,570.6 891.3,570.6 L817.3,570.6 Q812.3,570.6 812.3,565.6 Z" fill="url(#gEqBand)"/>
<text x="814.3" y="345.0" font-size="10" fill="#1e1e5c" text-anchor="start" >treble</text>
<text x="855.3" y="340.0" font-size="8.5" fill="#1e1e5c" text-anchor="middle" >0</text>
<text x="813.5" y="368.6" font-size="9.4" fill="#1e1e5c" text-anchor="start" >12k</text>
<text x="832.0" y="390.0" font-size="8" fill="#1e1e5c" text-anchor="start" >–15</text>
<text x="876.5" y="390.0" font-size="8" fill="#1e1e5c" text-anchor="end" >+15</text>
<ellipse cx="855.3" cy="384.2" rx="16" ry="11" fill="url(#gShadowW)"/>
<g transform="translate(854.3,365.2)"><use href="#kTreble"/><line x1="0" y1="0" x2="0" y2="-17" stroke="#2e2e2e" stroke-width="3.4" stroke-linecap="round" transform="rotate(60)"/></g>
<text x="814.3" y="402.5" font-size="10" fill="#1e1e5c" text-anchor="start" >freq</text>
<text x="856.1" y="399.3" font-size="8.2" fill="#1e1e5c" text-anchor="middle" >750</text>
<text x="838.4" y="448.8" font-size="7.8" fill="#1e1e5c" text-anchor="middle" >150</text>
<text x="875.0" y="448.8" font-size="8" fill="#1e1e5c" text-anchor="middle" >3.5k</text>
<ellipse cx="855.3" cy="442.6" rx="16" ry="11" fill="url(#gShadowW)"/>
<g transform="translate(854.3,423.6)"><use href="#kBlue"/><line x1="0" y1="0" x2="0" y2="-17" stroke="#f4f2e8" stroke-width="3.4" stroke-linecap="round" transform="rotate(0)"/></g>
<text x="814.3" y="461.5" font-size="10" fill="#1e1e5c" text-anchor="start" >mid</text>
<text x="855.3" y="457.5" font-size="8.5" fill="#1e1e5c" text-anchor="middle" >0</text>
<text x="832.0" y="506.8" font-size="8" fill="#1e1e5c" text-anchor="start" >–15</text>
<text x="876.5" y="506.8" font-size="8" fill="#1e1e5c" text-anchor="end" >+15</text>
<ellipse cx="855.3" cy="501.4" rx="16" ry="11" fill="url(#gShadowW)"/>
<g transform="translate(854.3,482.4)"><use href="#kBlue"/><line x1="0" y1="0" x2="0" y2="-17" stroke="#f4f2e8" stroke-width="3.4" stroke-linecap="round" transform="rotate(0)"/></g>
<text x="814.3" y="520.5" font-size="10" fill="#1e1e5c" text-anchor="start" >bass</text>
<text x="855.3" y="516.0" font-size="8.5" fill="#1e1e5c" text-anchor="middle" >0</text>
<text x="813.5" y="544.2" font-size="9.4" fill="#1e1e5c" text-anchor="start" >80</text>
<text x="832.0" y="565.4" font-size="8" fill="#1e1e5c" text-anchor="start" >–15</text>
<text x="876.5" y="565.4" font-size="8" fill="#1e1e5c" text-anchor="end" >+15</text>
<ellipse cx="855.3" cy="559.0" rx="16" ry="11" fill="url(#gShadowW)"/>
<g transform="translate(854.3,540.0)"><use href="#kBass"/><line x1="0" y1="0" x2="0" y2="-17" stroke="#f4f2e8" stroke-width="3.4" stroke-linecap="round" transform="rotate(125)"/></g>
<text x="811.3" y="581.0" font-size="10.8" fill="#fff" text-anchor="start" >aux 1</text>
<text x="842.9" y="624.3" font-size="8" fill="#fff" text-anchor="middle" >0</text>
<text x="871.5" y="624.3" font-size="8" fill="#fff" text-anchor="middle" >10</text>
<ellipse cx="854.3" cy="608.0" rx="24" ry="26" fill="url(#gShadow)"/>
<g transform="translate(854.3,599.0)"><use href="#kGreen"/><line x1="0" y1="0" x2="0" y2="-17" stroke="#f4f2e8" stroke-width="3.4" stroke-linecap="round" transform="rotate(0)"/></g>
<text x="811.3" y="639.0" font-size="10.8" fill="#fff" text-anchor="start" >aux 2</text>
<text x="842.9" y="683.0" font-size="8" fill="#fff" text-anchor="middle" >0</text>
<text x="871.5" y="683.0" font-size="8" fill="#fff" text-anchor="middle" >10</text>
<ellipse cx="854.3" cy="667.0" rx="24" ry="26" fill="url(#gShadow)"/>
<g transform="translate(854.3,658.0)"><use href="#kGreen"/><line x1="0" y1="0" x2="0" y2="-17" stroke="#f4f2e8" stroke-width="3.4" stroke-linecap="round" transform="rotate(-70)"/></g>
<text x="811.3" y="696.0" font-size="10.9" fill="#fff" text-anchor="start" >pan</text>
<text x="856.1" y="691.5" font-size="9.8" fill="#fff" text-anchor="middle" >c</text>
<text x="842.8" y="740.6" font-size="8.5" fill="#fff" text-anchor="middle" >l</text>
<text x="869.0" y="740.6" font-size="8.5" fill="#fff" text-anchor="middle" >r</text>
<ellipse cx="854.3" cy="725.0" rx="24" ry="26" fill="url(#gShadow)"/>
<g transform="translate(854.3,716.0)"><use href="#kRed"/><line x1="0" y1="0" x2="0" y2="-17" stroke="#f4f2e8" stroke-width="3.4" stroke-linecap="round" transform="rotate(-70)"/></g>
<rect x="816.8" y="761.5" width="33.5" height="22" rx="2" fill="#0a0a14"/>
<rect x="817.8" y="762.5" width="31.5" height="19.5" rx="1.5" fill="#e9e8da"/>
<rect x="858.8" y="761.5" width="33.5" height="22" rx="2" fill="#0a0a14"/>
<rect x="859.8" y="762.5" width="31.5" height="19.5" rx="1.5" fill="#d8332a"/>
<text x="833.8" y="795.5" font-size="11" fill="#fff" text-anchor="middle" >pfl</text>
<text x="875.3" y="796.0" font-size="11" fill="#fff" text-anchor="middle" >mute</text>
<use href="#led" x="854.6" y="798.4"/>
<text x="854.6" y="813.5" font-size="11" fill="#fff" text-anchor="middle" >peak</text>
<path d="M900.1,46.8 L900.1,21 Q900.1,17.5 903.6,17.5 L980.6,17.5 Q984.1,17.5 984.1,21 L984.1,46.8 Z" fill="#fff"/>
<text x="981.1" y="31.5" font-size="12" fill="#1e1e5c" text-anchor="end" >11</text>
<text x="984.1" y="57.0" font-size="10.8" fill="#fff" text-anchor="end" >mic</text>
<use href="#xlrF" x="942.3" y="101.7"/>
<use href="#screwS" x="909.5" y="68.5"/>
<use href="#screwS" x="975.1" y="133.6"/>
<text x="899.1" y="150.2" font-size="11.2" fill="#fff" text-anchor="start" >line</text>
<use href="#jack" x="942.4" y="176.4"/>
<text x="899.1" y="214.4" font-size="11.2" fill="#fff" text-anchor="start" >insert</text>
<use href="#jack" x="942.4" y="240.7"/>
<text x="899.1" y="278.5" font-size="11.2" fill="#fff" text-anchor="start" >gain</text>
<text x="944.3" y="283.0" font-size="8.5" fill="#fff" text-anchor="middle" >30</text>
<text x="929.3" y="332.0" font-size="8.5" fill="#fff" text-anchor="middle" >10</text>
<text x="959.3" y="332.0" font-size="8.5" fill="#fff" text-anchor="middle" >60</text>
<ellipse cx="942.3" cy="314.7" rx="24" ry="26" fill="url(#gShadow)"/>
<g transform="translate(942.3,305.7)"><use href="#kGain"/><line x1="0" y1="0" x2="0" y2="-18" stroke="#f4f2e8" stroke-width="3.4" stroke-linecap="round" transform="rotate(-60)"/></g>
<path d="M900.1,339 Q900.1,334 905.1,334 L979.1,334 Q984.1,334 984.1,339 L984.1,391.2 Q984.1,391.2 984.1,391.2 L900.1,391.2 Q900.1,391.2 900.1,391.2 Z" fill="url(#gEqBand)"/>
<path d="M900.1,392.8 Q900.1,392.8 900.1,392.8 L984.1,392.8 Q984.1,392.8 984.1,392.8 L984.1,508 Q984.1,508 984.1,508 L900.1,508 Q900.1,508 900.1,508 Z" fill="url(#gEqBand)"/>
<path d="M900.1,509.6 Q900.1,509.6 900.1,509.6 L984.1,509.6 Q984.1,509.6 984.1,509.6 L984.1,565.6 Q984.1,570.6 979.1,570.6 L905.1,570.6 Q900.1,570.6 900.1,565.6 Z" fill="url(#gEqBand)"/>
<text x="902.1" y="345.0" font-size="10" fill="#1e1e5c" text-anchor="start" >treble</text>
<text x="943.3" y="340.0" font-size="8.5" fill="#1e1e5c" text-anchor="middle" >0</text>
<text x="901.3" y="368.6" font-size="9.4" fill="#1e1e5c" text-anchor="start" >12k</text>
<text x="920.0" y="390.0" font-size="8" fill="#1e1e5c" text-anchor="start" >–15</text>
<text x="964.5" y="390.0" font-size="8" fill="#1e1e5c" text-anchor="end" >+15</text>
<ellipse cx="943.3" cy="384.2" rx="16" ry="11" fill="url(#gShadowW)"/>
<g transform="translate(942.3,365.2)"><use href="#kTreble"/><line x1="0" y1="0" x2="0" y2="-17" stroke="#2e2e2e" stroke-width="3.4" stroke-linecap="round" transform="rotate(-90)"/></g>
<text x="902.1" y="402.5" font-size="10" fill="#1e1e5c" text-anchor="start" >freq</text>
<text x="944.1" y="399.3" font-size="8.2" fill="#1e1e5c" text-anchor="middle" >750</text>
<text x="926.4" y="448.8" font-size="7.8" fill="#1e1e5c" text-anchor="middle" >150</text>
<text x="963.0" y="448.8" font-size="8" fill="#1e1e5c" text-anchor="middle" >3.5k</text>
<ellipse cx="943.3" cy="442.6" rx="16" ry="11" fill="url(#gShadowW)"/>
<g transform="translate(942.3,423.6)"><use href="#kBlue"/><line x1="0" y1="0" x2="0" y2="-17" stroke="#f4f2e8" stroke-width="3.4" stroke-linecap="round" transform="rotate(-95)"/></g>
<text x="902.1" y="461.5" font-size="10" fill="#1e1e5c" text-anchor="start" >mid</text>
<text x="943.3" y="457.5" font-size="8.5" fill="#1e1e5c" text-anchor="middle" >0</text>
<text x="920.0" y="506.8" font-size="8" fill="#1e1e5c" text-anchor="start" >–15</text>
<text x="964.5" y="506.8" font-size="8" fill="#1e1e5c" text-anchor="end" >+15</text>
<ellipse cx="943.3" cy="501.4" rx="16" ry="11" fill="url(#gShadowW)"/>
<g transform="translate(942.3,482.4)"><use href="#kBlue"/><line x1="0" y1="0" x2="0" y2="-17" stroke="#f4f2e8" stroke-width="3.4" stroke-linecap="round" transform="rotate(20)"/></g>
<text x="902.1" y="520.5" font-size="10" fill="#1e1e5c" text-anchor="start" >bass</text>
<text x="943.3" y="516.0" font-size="8.5" fill="#1e1e5c" text-anchor="middle" >0</text>
<text x="901.3" y="544.2" font-size="9.4" fill="#1e1e5c" text-anchor="start" >80</text>
<text x="920.0" y="565.4" font-size="8" fill="#1e1e5c" text-anchor="start" >–15</text>
<text x="964.5" y="565.4" font-size="8" fill="#1e1e5c" text-anchor="end" >+15</text>
<ellipse cx="943.3" cy="559.0" rx="16" ry="11" fill="url(#gShadowW)"/>
<g transform="translate(942.3,540.0)"><use href="#kBass"/><line x1="0" y1="0" x2="0" y2="-17" stroke="#f4f2e8" stroke-width="3.4" stroke-linecap="round" transform="rotate(0)"/></g>
<text x="899.1" y="581.0" font-size="10.8" fill="#fff" text-anchor="start" >aux 1</text>
<text x="930.9" y="624.3" font-size="8" fill="#fff" text-anchor="middle" >0</text>
<text x="959.5" y="624.3" font-size="8" fill="#fff" text-anchor="middle" >10</text>
<ellipse cx="942.3" cy="608.0" rx="24" ry="26" fill="url(#gShadow)"/>
<g transform="translate(942.3,599.0)"><use href="#kGreen"/><line x1="0" y1="0" x2="0" y2="-17" stroke="#f4f2e8" stroke-width="3.4" stroke-linecap="round" transform="rotate(-60)"/></g>
<text x="899.1" y="639.0" font-size="10.8" fill="#fff" text-anchor="start" >aux 2</text>
<text x="930.9" y="683.0" font-size="8" fill="#fff" text-anchor="middle" >0</text>
<text x="959.5" y="683.0" font-size="8" fill="#fff" text-anchor="middle" >10</text>
<ellipse cx="942.3" cy="667.0" rx="24" ry="26" fill="url(#gShadow)"/>
<g transform="translate(942.3,658.0)"><use href="#kGreen"/><line x1="0" y1="0" x2="0" y2="-17" stroke="#f4f2e8" stroke-width="3.4" stroke-linecap="round" transform="rotate(0)"/></g>
<text x="899.1" y="696.0" font-size="10.9" fill="#fff" text-anchor="start" >pan</text>
<text x="944.1" y="691.5" font-size="9.8" fill="#fff" text-anchor="middle" >c</text>
<text x="930.8" y="740.6" font-size="8.5" fill="#fff" text-anchor="middle" >l</text>
<text x="957.0" y="740.6" font-size="8.5" fill="#fff" text-anchor="middle" >r</text>
<ellipse cx="942.3" cy="725.0" rx="24" ry="26" fill="url(#gShadow)"/>
<g transform="translate(942.3,716.0)"><use href="#kRed"/><line x1="0" y1="0" x2="0" y2="-17" stroke="#f4f2e8" stroke-width="3.4" stroke-linecap="round" transform="rotate(0)"/></g>
<rect x="904.6" y="761.5" width="33.5" height="22" rx="2" fill="#0a0a14"/>
<rect x="905.6" y="762.5" width="31.5" height="19.5" rx="1.5" fill="#e9e8da"/>
<rect x="946.6" y="761.5" width="33.5" height="22" rx="2" fill="#0a0a14"/>
<rect x="947.6" y="762.5" width="31.5" height="19.5" rx="1.5" fill="#d8332a"/>
<text x="921.6" y="795.5" font-size="11" fill="#fff" text-anchor="middle" >pfl</text>
<text x="963.1" y="796.0" font-size="11" fill="#fff" text-anchor="middle" >mute</text>
<use href="#led" x="942.4" y="798.4"/>
<text x="942.4" y="813.5" font-size="11" fill="#fff" text-anchor="middle" >peak</text>
<path d="M987.9,46.8 L987.9,21 Q987.9,17.5 991.4,17.5 L1068.4,17.5 Q1071.9,17.5 1071.9,21 L1071.9,46.8 Z" fill="#fff"/>
<text x="1068.9" y="31.5" font-size="12" fill="#1e1e5c" text-anchor="end" >12</text>
<text x="1071.9" y="57.0" font-size="10.8" fill="#fff" text-anchor="end" >mic</text>
<use href="#xlrF" x="1030.1" y="101.7"/>
<use href="#screwS" x="997.3" y="68.5"/>
<use href="#screwS" x="1062.9" y="133.6"/>
<text x="986.9" y="150.2" font-size="11.2" fill="#fff" text-anchor="start" >line</text>
<use href="#jack" x="1030.2" y="176.4"/>
<text x="986.9" y="214.4" font-size="11.2" fill="#fff" text-anchor="start" >insert</text>
<use href="#jack" x="1030.2" y="240.7"/>
<text x="986.9" y="278.5" font-size="11.2" fill="#fff" text-anchor="start" >gain</text>
<text x="1032.3" y="283.0" font-size="8.5" fill="#fff" text-anchor="middle" >30</text>
<text x="1017.3" y="332.0" font-size="8.5" fill="#fff" text-anchor="middle" >10</text>
<text x="1047.3" y="332.0" font-size="8.5" fill="#fff" text-anchor="middle" >60</text>
<ellipse cx="1030.3" cy="314.7" rx="24" ry="26" fill="url(#gShadow)"/>
<g transform="translate(1030.3,305.7)"><use href="#kGain"/><line x1="0" y1="0" x2="0" y2="-18" stroke="#f4f2e8" stroke-width="3.4" stroke-linecap="round" transform="rotate(95)"/></g>
<path d="M987.9,339 Q987.9,334 992.9,334 L1066.9,334 Q1071.9,334 1071.9,339 L1071.9,391.2 Q1071.9,391.2 1071.9,391.2 L987.9,391.2 Q987.9,391.2 987.9,391.2 Z" fill="url(#gEqBand)"/>
<path d="M987.9,392.8 Q987.9,392.8 987.9,392.8 L1071.9,392.8 Q1071.9,392.8 1071.9,392.8 L1071.9,508 Q1071.9,508 1071.9,508 L987.9,508 Q987.9,508 987.9,508 Z" fill="url(#gEqBand)"/>
<path d="M987.9,509.6 Q987.9,509.6 987.9,509.6 L1071.9,509.6 Q1071.9,509.6 1071.9,509.6 L1071.9,565.6 Q1071.9,570.6 1066.9,570.6 L992.9,570.6 Q987.9,570.6 987.9,565.6 Z" fill="url(#gEqBand)"/>
<text x="989.9" y="345.0" font-size="10" fill="#1e1e5c" text-anchor="start" >treble</text>
<text x="1031.3" y="340.0" font-size="8.5" fill="#1e1e5c" text-anchor="middle" >0</text>
<text x="989.1" y="368.6" font-size="9.4" fill="#1e1e5c" text-anchor="start" >12k</text>
<text x="1008.0" y="390.0" font-size="8" fill="#1e1e5c" text-anchor="start" >–15</text>
<text x="1052.5" y="390.0" font-size="8" fill="#1e1e5c" text-anchor="end" >+15</text>
<ellipse cx="1031.3" cy="384.2" rx="16" ry="11" fill="url(#gShadowW)"/>
<g transform="translate(1030.3,365.2)"><use href="#kTreble"/><line x1="0" y1="0" x2="0" y2="-17" stroke="#2e2e2e" stroke-width="3.4" stroke-linecap="round" transform="rotate(95)"/></g>
<text x="989.9" y="402.5" font-size="10" fill="#1e1e5c" text-anchor="start" >freq</text>
<text x="1032.1" y="399.3" font-size="8.2" fill="#1e1e5c" text-anchor="middle" >750</text>
<text x="1014.4" y="448.8" font-size="7.8" fill="#1e1e5c" text-anchor="middle" >150</text>
<text x="1051.0" y="448.8" font-size="8" fill="#1e1e5c" text-anchor="middle" >3.5k</text>
<ellipse cx="1031.3" cy="442.6" rx="16" ry="11" fill="url(#gShadowW)"/>
<g transform="translate(1030.3,423.6)"><use href="#kBlue"/><line x1="0" y1="0" x2="0" y2="-17" stroke="#f4f2e8" stroke-width="3.4" stroke-linecap="round" transform="rotate(0)"/></g>
<text x="989.9" y="461.5" font-size="10" fill="#1e1e5c" text-anchor="start" >mid</text>
<text x="1031.3" y="457.5" font-size="8.5" fill="#1e1e5c" text-anchor="middle" >0</text>
<text x="1008.0" y="506.8" font-size="8" fill="#1e1e5c" text-anchor="start" >–15</text>
<text x="1052.5" y="506.8" font-size="8" fill="#1e1e5c" text-anchor="end" >+15</text>
<ellipse cx="1031.3" cy="501.4" rx="16" ry="11" fill="url(#gShadowW)"/>
<g transform="translate(1030.3,482.4)"><use href="#kBlue"/><line x1="0" y1="0" x2="0" y2="-17" stroke="#f4f2e8" stroke-width="3.4" stroke-linecap="round" transform="rotate(0)"/></g>
<text x="989.9" y="520.5" font-size="10" fill="#1e1e5c" text-anchor="start" >bass</text>
<text x="1031.3" y="516.0" font-size="8.5" fill="#1e1e5c" text-anchor="middle" >0</text>
<text x="989.1" y="544.2" font-size="9.4" fill="#1e1e5c" text-anchor="start" >80</text>
<text x="1008.0" y="565.4" font-size="8" fill="#1e1e5c" text-anchor="start" >–15</text>
<text x="1052.5" y="565.4" font-size="8" fill="#1e1e5c" text-anchor="end" >+15</text>
<ellipse cx="1031.3" cy="559.0" rx="16" ry="11" fill="url(#gShadowW)"/>
<g transform="translate(1030.3,540.0)"><use href="#kBass"/><line x1="0" y1="0" x2="0" y2="-17" stroke="#f4f2e8" stroke-width="3.4" stroke-linecap="round" transform="rotate(-60)"/></g>
<text x="986.9" y="581.0" font-size="10.8" fill="#fff" text-anchor="start" >aux 1</text>
<text x="1018.9" y="624.3" font-size="8" fill="#fff" text-anchor="middle" >0</text>
<text x="1047.5" y="624.3" font-size="8" fill="#fff" text-anchor="middle" >10</text>
<ellipse cx="1030.3" cy="608.0" rx="24" ry="26" fill="url(#gShadow)"/>
<g transform="translate(1030.3,599.0)"><use href="#kGreen"/><line x1="0" y1="0" x2="0" y2="-17" stroke="#f4f2e8" stroke-width="3.4" stroke-linecap="round" transform="rotate(60)"/></g>
<text x="986.9" y="639.0" font-size="10.8" fill="#fff" text-anchor="start" >aux 2</text>
<text x="1018.9" y="683.0" font-size="8" fill="#fff" text-anchor="middle" >0</text>
<text x="1047.5" y="683.0" font-size="8" fill="#fff" text-anchor="middle" >10</text>
<ellipse cx="1030.3" cy="667.0" rx="24" ry="26" fill="url(#gShadow)"/>
<g transform="translate(1030.3,658.0)"><use href="#kGreen"/><line x1="0" y1="0" x2="0" y2="-17" stroke="#f4f2e8" stroke-width="3.4" stroke-linecap="round" transform="rotate(60)"/></g>
<text x="986.9" y="696.0" font-size="10.9" fill="#fff" text-anchor="start" >pan</text>
<text x="1032.1" y="691.5" font-size="9.8" fill="#fff" text-anchor="middle" >c</text>
<text x="1018.8" y="740.6" font-size="8.5" fill="#fff" text-anchor="middle" >l</text>
<text x="1045.0" y="740.6" font-size="8.5" fill="#fff" text-anchor="middle" >r</text>
<ellipse cx="1030.3" cy="725.0" rx="24" ry="26" fill="url(#gShadow)"/>
<g transform="translate(1030.3,716.0)"><use href="#kRed"/><line x1="0" y1="0" x2="0" y2="-17" stroke="#f4f2e8" stroke-width="3.4" stroke-linecap="round" transform="rotate(0)"/></g>
<rect x="992.4" y="761.5" width="33.5" height="22" rx="2" fill="#0a0a14"/>
<rect x="993.4" y="762.5" width="31.5" height="19.5" rx="1.5" fill="#e9e8da"/>
<rect x="1034.4" y="761.5" width="33.5" height="22" rx="2" fill="#0a0a14"/>
<rect x="1035.4" y="762.5" width="31.5" height="19.5" rx="1.5" fill="#d8332a"/>
<text x="1009.4" y="795.5" font-size="11" fill="#fff" text-anchor="middle" >pfl</text>
<text x="1050.9" y="796.0" font-size="11" fill="#fff" text-anchor="middle" >mute</text>
<use href="#led" x="1030.2" y="798.4"/>
<text x="1030.2" y="813.5" font-size="11" fill="#fff" text-anchor="middle" >peak</text>
<text x="1074.7" y="396.0" font-size="11.2" fill="#fff" text-anchor="start" >gain</text>
<text x="1117.3" y="399.2" font-size="8" fill="#fff" text-anchor="middle" >0</text>
<text x="1100.3" y="448.8" font-size="8.2" fill="#fff" text-anchor="middle" >–20</text>
<text x="1130.3" y="448.8" font-size="8.2" fill="#fff" text-anchor="middle" >+20</text>
<ellipse cx="1118.3" cy="433.1" rx="24" ry="26" fill="url(#gShadow)"/>
<g transform="translate(1118.3,424.1)"><use href="#kGain"/><line x1="0" y1="0" x2="0" y2="-18" stroke="#f4f2e8" stroke-width="3.4" stroke-linecap="round" transform="rotate(0)"/></g>
<path d="M1076.6999999999998,455.4 Q1076.6999999999998,450.4 1081.6999999999998,450.4 L1155.6999999999998,450.4 Q1160.6999999999998,450.4 1160.6999999999998,455.4 L1160.6999999999998,508 Q1160.6999999999998,508 1160.6999999999998,508 L1076.6999999999998,508 Q1076.6999999999998,508 1076.6999999999998,508 Z" fill="url(#gEqBand)"/>
<path d="M1076.6999999999998,509.6 Q1076.6999999999998,509.6 1076.6999999999998,509.6 L1160.6999999999998,509.6 Q1160.6999999999998,509.6 1160.6999999999998,509.6 L1160.6999999999998,565.8 Q1160.6999999999998,570.8 1155.6999999999998,570.8 L1081.6999999999998,570.8 Q1076.6999999999998,570.8 1076.6999999999998,565.8 Z" fill="url(#gEqBand)"/>
<text x="1077.7" y="461.5" font-size="10" fill="#1e1e5c" text-anchor="start" >treble</text>
<text x="1117.3" y="458.0" font-size="8.5" fill="#1e1e5c" text-anchor="middle" >0</text>
<text x="1076.9" y="485.7" font-size="9.4" fill="#1e1e5c" text-anchor="start" >12k</text>
<text x="1096.0" y="506.4" font-size="8" fill="#1e1e5c" text-anchor="start" >–15</text>
<text x="1140.5" y="506.4" font-size="8" fill="#1e1e5c" text-anchor="end" >+15</text>
<ellipse cx="1119.3" cy="500.5" rx="16" ry="11" fill="url(#gShadowW)"/>
<g transform="translate(1118.3,481.5)"><use href="#kTreble"/><line x1="0" y1="0" x2="0" y2="-17" stroke="#2e2e2e" stroke-width="3.4" stroke-linecap="round" transform="rotate(-60)"/></g>
<text x="1077.7" y="519.6" font-size="10" fill="#1e1e5c" text-anchor="start" >bass</text>
<text x="1117.3" y="516.0" font-size="8.5" fill="#1e1e5c" text-anchor="middle" >0</text>
<text x="1076.9" y="543.8" font-size="9.4" fill="#1e1e5c" text-anchor="start" >80</text>
<text x="1096.0" y="565.3" font-size="8" fill="#1e1e5c" text-anchor="start" >–15</text>
<text x="1140.5" y="565.3" font-size="8" fill="#1e1e5c" text-anchor="end" >+15</text>
<ellipse cx="1119.3" cy="558.7" rx="16" ry="11" fill="url(#gShadowW)"/>
<g transform="translate(1118.3,539.7)"><use href="#kBass"/><line x1="0" y1="0" x2="0" y2="-17" stroke="#f4f2e8" stroke-width="3.4" stroke-linecap="round" transform="rotate(0)"/></g>
<text x="1074.7" y="581.0" font-size="10.8" fill="#fff" text-anchor="start" >aux 1</text>
<text x="1106.9" y="624.3" font-size="8" fill="#fff" text-anchor="middle" >0</text>
<text x="1135.5" y="624.3" font-size="8" fill="#fff" text-anchor="middle" >10</text>
<ellipse cx="1118.3" cy="608.0" rx="24" ry="26" fill="url(#gShadow)"/>
<g transform="translate(1118.3,599.0)"><use href="#kGreen"/><line x1="0" y1="0" x2="0" y2="-17" stroke="#f4f2e8" stroke-width="3.4" stroke-linecap="round" transform="rotate(-60)"/></g>
<text x="1074.7" y="639.0" font-size="10.8" fill="#fff" text-anchor="start" >aux 2</text>
<text x="1106.9" y="683.0" font-size="8" fill="#fff" text-anchor="middle" >0</text>
<text x="1135.5" y="683.0" font-size="8" fill="#fff" text-anchor="middle" >10</text>
<ellipse cx="1118.3" cy="667.0" rx="24" ry="26" fill="url(#gShadow)"/>
<g transform="translate(1118.3,658.0)"><use href="#kGreen"/><line x1="0" y1="0" x2="0" y2="-17" stroke="#f4f2e8" stroke-width="3.4" stroke-linecap="round" transform="rotate(0)"/></g>
<text x="1074.7" y="696.0" font-size="10.9" fill="#fff" text-anchor="start" >bal</text>
<text x="1120.1" y="691.5" font-size="9.8" fill="#fff" text-anchor="middle" >c</text>
<text x="1106.8" y="740.6" font-size="8.5" fill="#fff" text-anchor="middle" >l</text>
<text x="1133.0" y="740.6" font-size="8.5" fill="#fff" text-anchor="middle" >r</text>
<ellipse cx="1118.3" cy="725.0" rx="24" ry="26" fill="url(#gShadow)"/>
<g transform="translate(1118.3,716.0)"><use href="#kRed"/><line x1="0" y1="0" x2="0" y2="-17" stroke="#f4f2e8" stroke-width="3.4" stroke-linecap="round" transform="rotate(0)"/></g>
<rect x="1080.2" y="761.5" width="33.5" height="22" rx="2" fill="#0a0a14"/>
<rect x="1081.2" y="762.5" width="31.5" height="19.5" rx="1.5" fill="#e9e8da"/>
<rect x="1122.2" y="761.5" width="33.5" height="22" rx="2" fill="#0a0a14"/>
<rect x="1123.2" y="762.5" width="31.5" height="19.5" rx="1.5" fill="#d8332a"/>
<text x="1097.2" y="795.5" font-size="11" fill="#fff" text-anchor="middle" >pfl</text>
<text x="1138.7" y="796.0" font-size="11" fill="#fff" text-anchor="middle" >mute</text>
<use href="#led" x="1118.0" y="798.4"/>
<text x="1118.0" y="813.5" font-size="11" fill="#fff" text-anchor="middle" >peak</text>
<text x="1162.5" y="396.0" font-size="11.2" fill="#fff" text-anchor="start" >gain</text>
<text x="1205.2" y="399.2" font-size="8" fill="#fff" text-anchor="middle" >0</text>
<text x="1188.2" y="448.8" font-size="8.2" fill="#fff" text-anchor="middle" >–20</text>
<text x="1218.2" y="448.8" font-size="8.2" fill="#fff" text-anchor="middle" >+20</text>
<ellipse cx="1206.2" cy="433.1" rx="24" ry="26" fill="url(#gShadow)"/>
<g transform="translate(1206.2,424.1)"><use href="#kGain"/><line x1="0" y1="0" x2="0" y2="-18" stroke="#f4f2e8" stroke-width="3.4" stroke-linecap="round" transform="rotate(-60)"/></g>
<path d="M1164.4999999999998,455.4 Q1164.4999999999998,450.4 1169.4999999999998,450.4 L1243.4999999999998,450.4 Q1248.4999999999998,450.4 1248.4999999999998,455.4 L1248.4999999999998,508 Q1248.4999999999998,508 1248.4999999999998,508 L1164.4999999999998,508 Q1164.4999999999998,508 1164.4999999999998,508 Z" fill="url(#gEqBand)"/>
<path d="M1164.4999999999998,509.6 Q1164.4999999999998,509.6 1164.4999999999998,509.6 L1248.4999999999998,509.6 Q1248.4999999999998,509.6 1248.4999999999998,509.6 L1248.4999999999998,565.8 Q1248.4999999999998,570.8 1243.4999999999998,570.8 L1169.4999999999998,570.8 Q1164.4999999999998,570.8 1164.4999999999998,565.8 Z" fill="url(#gEqBand)"/>
<text x="1165.5" y="461.5" font-size="10" fill="#1e1e5c" text-anchor="start" >treble</text>
<text x="1205.2" y="458.0" font-size="8.5" fill="#1e1e5c" text-anchor="middle" >0</text>
<text x="1164.7" y="485.7" font-size="9.4" fill="#1e1e5c" text-anchor="start" >12k</text>
<text x="1183.9" y="506.4" font-size="8" fill="#1e1e5c" text-anchor="start" >–15</text>
<text x="1228.4" y="506.4" font-size="8" fill="#1e1e5c" text-anchor="end" >+15</text>
<ellipse cx="1207.2" cy="500.5" rx="16" ry="11" fill="url(#gShadowW)"/>
<g transform="translate(1206.2,481.5)"><use href="#kTreble"/><line x1="0" y1="0" x2="0" y2="-17" stroke="#2e2e2e" stroke-width="3.4" stroke-linecap="round" transform="rotate(0)"/></g>
<text x="1165.5" y="519.6" font-size="10" fill="#1e1e5c" text-anchor="start" >bass</text>
<text x="1205.2" y="516.0" font-size="8.5" fill="#1e1e5c" text-anchor="middle" >0</text>
<text x="1164.7" y="543.8" font-size="9.4" fill="#1e1e5c" text-anchor="start" >80</text>
<text x="1183.9" y="565.3" font-size="8" fill="#1e1e5c" text-anchor="start" >–15</text>
<text x="1228.4" y="565.3" font-size="8" fill="#1e1e5c" text-anchor="end" >+15</text>
<ellipse cx="1207.2" cy="558.7" rx="16" ry="11" fill="url(#gShadowW)"/>
<g transform="translate(1206.2,539.7)"><use href="#kBass"/><line x1="0" y1="0" x2="0" y2="-17" stroke="#f4f2e8" stroke-width="3.4" stroke-linecap="round" transform="rotate(0)"/></g>
<text x="1162.5" y="581.0" font-size="10.8" fill="#fff" text-anchor="start" >aux 1</text>
<text x="1194.8" y="624.3" font-size="8" fill="#fff" text-anchor="middle" >0</text>
<text x="1223.4" y="624.3" font-size="8" fill="#fff" text-anchor="middle" >10</text>
<ellipse cx="1206.2" cy="608.0" rx="24" ry="26" fill="url(#gShadow)"/>
<g transform="translate(1206.2,599.0)"><use href="#kGreen"/><line x1="0" y1="0" x2="0" y2="-17" stroke="#f4f2e8" stroke-width="3.4" stroke-linecap="round" transform="rotate(130)"/></g>
<text x="1162.5" y="639.0" font-size="10.8" fill="#fff" text-anchor="start" >aux 2</text>
<text x="1194.8" y="683.0" font-size="8" fill="#fff" text-anchor="middle" >0</text>
<text x="1223.4" y="683.0" font-size="8" fill="#fff" text-anchor="middle" >10</text>
<ellipse cx="1206.2" cy="667.0" rx="24" ry="26" fill="url(#gShadow)"/>
<g transform="translate(1206.2,658.0)"><use href="#kGreen"/><line x1="0" y1="0" x2="0" y2="-17" stroke="#f4f2e8" stroke-width="3.4" stroke-linecap="round" transform="rotate(0)"/></g>
<text x="1162.5" y="696.0" font-size="10.9" fill="#fff" text-anchor="start" >bal</text>
<text x="1208.0" y="691.5" font-size="9.8" fill="#fff" text-anchor="middle" >c</text>
<text x="1194.7" y="740.6" font-size="8.5" fill="#fff" text-anchor="middle" >l</text>
<text x="1220.9" y="740.6" font-size="8.5" fill="#fff" text-anchor="middle" >r</text>
<ellipse cx="1206.2" cy="725.0" rx="24" ry="26" fill="url(#gShadow)"/>
<g transform="translate(1206.2,716.0)"><use href="#kRed"/><line x1="0" y1="0" x2="0" y2="-17" stroke="#f4f2e8" stroke-width="3.4" stroke-linecap="round" transform="rotate(125)"/></g>
<rect x="1168.0" y="761.5" width="33.5" height="22" rx="2" fill="#0a0a14"/>
<rect x="1169.0" y="762.5" width="31.5" height="19.5" rx="1.5" fill="#e9e8da"/>
<rect x="1210.0" y="761.5" width="33.5" height="22" rx="2" fill="#0a0a14"/>
<rect x="1211.0" y="762.5" width="31.5" height="19.5" rx="1.5" fill="#d8332a"/>
<text x="1185.0" y="795.5" font-size="11" fill="#fff" text-anchor="middle" >pfl</text>
<text x="1226.5" y="796.0" font-size="11" fill="#fff" text-anchor="middle" >mute</text>
<use href="#led" x="1205.8" y="798.4"/>
<text x="1205.8" y="813.5" font-size="11" fill="#fff" text-anchor="middle" >peak</text>
<rect x="20.6" y="866.8" width="68" height="2.4" fill="#f2f2f8"/>
<text x="103.1" y="871.3" font-size="9.2" fill="#fff" text-anchor="end" >10</text>
<rect x="20.6" y="888.3" width="68" height="1.9" fill="#f2f2f8"/>
<text x="103.1" y="892.6" font-size="9.2" fill="#fff" text-anchor="end" >5</text>
<rect x="20.6" y="909.2" width="68" height="2.4" fill="#f2f2f8"/>
<text x="103.1" y="913.7" font-size="9.2" fill="#fff" text-anchor="end" >0</text>
<rect x="20.6" y="930.6" width="68" height="1.9" fill="#f2f2f8"/>
<text x="103.1" y="934.9" font-size="9.2" fill="#fff" text-anchor="end" >5</text>
<rect x="20.6" y="951.5" width="68" height="1.9" fill="#f2f2f8"/>
<text x="103.1" y="955.8" font-size="9.2" fill="#fff" text-anchor="end" >10</text>
<rect x="20.6" y="972.2" width="68" height="1.9" fill="#f2f2f8"/>
<text x="103.1" y="976.5" font-size="9.2" fill="#fff" text-anchor="end" >15</text>
<rect x="20.6" y="992.9" width="68" height="1.9" fill="#f2f2f8"/>
<text x="103.1" y="997.2" font-size="9.2" fill="#fff" text-anchor="end" >20</text>
<rect x="20.6" y="1009.8" width="68" height="1.9" fill="#f2f2f8"/>
<text x="103.1" y="1014.1" font-size="9.2" fill="#fff" text-anchor="end" >25</text>
<rect x="20.6" y="1026.3" width="68" height="1.9" fill="#f2f2f8"/>
<text x="103.1" y="1030.6" font-size="9.2" fill="#fff" text-anchor="end" >30</text>
<rect x="20.6" y="1043.2" width="68" height="1.9" fill="#f2f2f8"/>
<text x="103.1" y="1047.5" font-size="9.2" fill="#fff" text-anchor="end" >40</text>
<rect x="20.6" y="1053.8" width="68" height="1.9" fill="#f2f2f8"/>
<text x="103.1" y="1058.0" font-size="9.2" fill="#fff" text-anchor="end" >50</text>
<rect x="20.6" y="1063.8" width="68" height="2.2" fill="#f2f2f8"/>
<g transform="translate(97.6,1064.9)" fill="none" stroke="#fff" stroke-width="1.5"><ellipse cx="-2.6" cy="0" rx="2.5" ry="2.1"/><ellipse cx="2.6" cy="0" rx="2.5" ry="2.1"/></g>
<rect x="108.4" y="866.8" width="68" height="2.4" fill="#f2f2f8"/>
<text x="190.9" y="871.3" font-size="9.2" fill="#fff" text-anchor="end" >10</text>
<rect x="108.4" y="888.3" width="68" height="1.9" fill="#f2f2f8"/>
<text x="190.9" y="892.6" font-size="9.2" fill="#fff" text-anchor="end" >5</text>
<rect x="108.4" y="909.2" width="68" height="2.4" fill="#f2f2f8"/>
<text x="190.9" y="913.7" font-size="9.2" fill="#fff" text-anchor="end" >0</text>
<rect x="108.4" y="930.6" width="68" height="1.9" fill="#f2f2f8"/>
<text x="190.9" y="934.9" font-size="9.2" fill="#fff" text-anchor="end" >5</text>
<rect x="108.4" y="951.5" width="68" height="1.9" fill="#f2f2f8"/>
<text x="190.9" y="955.8" font-size="9.2" fill="#fff" text-anchor="end" >10</text>
<rect x="108.4" y="972.2" width="68" height="1.9" fill="#f2f2f8"/>
<text x="190.9" y="976.5" font-size="9.2" fill="#fff" text-anchor="end" >15</text>
<rect x="108.4" y="992.9" width="68" height="1.9" fill="#f2f2f8"/>
<text x="190.9" y="997.2" font-size="9.2" fill="#fff" text-anchor="end" >20</text>
<rect x="108.4" y="1009.8" width="68" height="1.9" fill="#f2f2f8"/>
<text x="190.9" y="1014.1" font-size="9.2" fill="#fff" text-anchor="end" >25</text>
<rect x="108.4" y="1026.3" width="68" height="1.9" fill="#f2f2f8"/>
<text x="190.9" y="1030.6" font-size="9.2" fill="#fff" text-anchor="end" >30</text>
<rect x="108.4" y="1043.2" width="68" height="1.9" fill="#f2f2f8"/>
<text x="190.9" y="1047.5" font-size="9.2" fill="#fff" text-anchor="end" >40</text>
<rect x="108.4" y="1053.8" width="68" height="1.9" fill="#f2f2f8"/>
<text x="190.9" y="1058.0" font-size="9.2" fill="#fff" text-anchor="end" >50</text>
<rect x="108.4" y="1063.8" width="68" height="2.2" fill="#f2f2f8"/>
<g transform="translate(185.4,1064.9)" fill="none" stroke="#fff" stroke-width="1.5"><ellipse cx="-2.6" cy="0" rx="2.5" ry="2.1"/><ellipse cx="2.6" cy="0" rx="2.5" ry="2.1"/></g>
<rect x="196.2" y="866.8" width="68" height="2.4" fill="#f2f2f8"/>
<text x="278.7" y="871.3" font-size="9.2" fill="#fff" text-anchor="end" >10</text>
<rect x="196.2" y="888.3" width="68" height="1.9" fill="#f2f2f8"/>
<text x="278.7" y="892.6" font-size="9.2" fill="#fff" text-anchor="end" >5</text>
<rect x="196.2" y="909.2" width="68" height="2.4" fill="#f2f2f8"/>
<text x="278.7" y="913.7" font-size="9.2" fill="#fff" text-anchor="end" >0</text>
<rect x="196.2" y="930.6" width="68" height="1.9" fill="#f2f2f8"/>
<text x="278.7" y="934.9" font-size="9.2" fill="#fff" text-anchor="end" >5</text>
<rect x="196.2" y="951.5" width="68" height="1.9" fill="#f2f2f8"/>
<text x="278.7" y="955.8" font-size="9.2" fill="#fff" text-anchor="end" >10</text>
<rect x="196.2" y="972.2" width="68" height="1.9" fill="#f2f2f8"/>
<text x="278.7" y="976.5" font-size="9.2" fill="#fff" text-anchor="end" >15</text>
<rect x="196.2" y="992.9" width="68" height="1.9" fill="#f2f2f8"/>
<text x="278.7" y="997.2" font-size="9.2" fill="#fff" text-anchor="end" >20</text>
<rect x="196.2" y="1009.8" width="68" height="1.9" fill="#f2f2f8"/>
<text x="278.7" y="1014.1" font-size="9.2" fill="#fff" text-anchor="end" >25</text>
<rect x="196.2" y="1026.3" width="68" height="1.9" fill="#f2f2f8"/>
<text x="278.7" y="1030.6" font-size="9.2" fill="#fff" text-anchor="end" >30</text>
<rect x="196.2" y="1043.2" width="68" height="1.9" fill="#f2f2f8"/>
<text x="278.7" y="1047.5" font-size="9.2" fill="#fff" text-anchor="end" >40</text>
<rect x="196.2" y="1053.8" width="68" height="1.9" fill="#f2f2f8"/>
<text x="278.7" y="1058.0" font-size="9.2" fill="#fff" text-anchor="end" >50</text>
<rect x="196.2" y="1063.8" width="68" height="2.2" fill="#f2f2f8"/>
<g transform="translate(273.2,1064.9)" fill="none" stroke="#fff" stroke-width="1.5"><ellipse cx="-2.6" cy="0" rx="2.5" ry="2.1"/><ellipse cx="2.6" cy="0" rx="2.5" ry="2.1"/></g>
<rect x="284.0" y="866.8" width="68" height="2.4" fill="#f2f2f8"/>
<text x="366.5" y="871.3" font-size="9.2" fill="#fff" text-anchor="end" >10</text>
<rect x="284.0" y="888.3" width="68" height="1.9" fill="#f2f2f8"/>
<text x="366.5" y="892.6" font-size="9.2" fill="#fff" text-anchor="end" >5</text>
<rect x="284.0" y="909.2" width="68" height="2.4" fill="#f2f2f8"/>
<text x="366.5" y="913.7" font-size="9.2" fill="#fff" text-anchor="end" >0</text>
<rect x="284.0" y="930.6" width="68" height="1.9" fill="#f2f2f8"/>
<text x="366.5" y="934.9" font-size="9.2" fill="#fff" text-anchor="end" >5</text>
<rect x="284.0" y="951.5" width="68" height="1.9" fill="#f2f2f8"/>
<text x="366.5" y="955.8" font-size="9.2" fill="#fff" text-anchor="end" >10</text>
<rect x="284.0" y="972.2" width="68" height="1.9" fill="#f2f2f8"/>
<text x="366.5" y="976.5" font-size="9.2" fill="#fff" text-anchor="end" >15</text>
<rect x="284.0" y="992.9" width="68" height="1.9" fill="#f2f2f8"/>
<text x="366.5" y="997.2" font-size="9.2" fill="#fff" text-anchor="end" >20</text>
<rect x="284.0" y="1009.8" width="68" height="1.9" fill="#f2f2f8"/>
<text x="366.5" y="1014.1" font-size="9.2" fill="#fff" text-anchor="end" >25</text>
<rect x="284.0" y="1026.3" width="68" height="1.9" fill="#f2f2f8"/>
<text x="366.5" y="1030.6" font-size="9.2" fill="#fff" text-anchor="end" >30</text>
<rect x="284.0" y="1043.2" width="68" height="1.9" fill="#f2f2f8"/>
<text x="366.5" y="1047.5" font-size="9.2" fill="#fff" text-anchor="end" >40</text>
<rect x="284.0" y="1053.8" width="68" height="1.9" fill="#f2f2f8"/>
<text x="366.5" y="1058.0" font-size="9.2" fill="#fff" text-anchor="end" >50</text>
<rect x="284.0" y="1063.8" width="68" height="2.2" fill="#f2f2f8"/>
<g transform="translate(361.0,1064.9)" fill="none" stroke="#fff" stroke-width="1.5"><ellipse cx="-2.6" cy="0" rx="2.5" ry="2.1"/><ellipse cx="2.6" cy="0" rx="2.5" ry="2.1"/></g>
<rect x="371.8" y="866.8" width="68" height="2.4" fill="#f2f2f8"/>
<text x="454.3" y="871.3" font-size="9.2" fill="#fff" text-anchor="end" >10</text>
<rect x="371.8" y="888.3" width="68" height="1.9" fill="#f2f2f8"/>
<text x="454.3" y="892.6" font-size="9.2" fill="#fff" text-anchor="end" >5</text>
<rect x="371.8" y="909.2" width="68" height="2.4" fill="#f2f2f8"/>
<text x="454.3" y="913.7" font-size="9.2" fill="#fff" text-anchor="end" >0</text>
<rect x="371.8" y="930.6" width="68" height="1.9" fill="#f2f2f8"/>
<text x="454.3" y="934.9" font-size="9.2" fill="#fff" text-anchor="end" >5</text>
<rect x="371.8" y="951.5" width="68" height="1.9" fill="#f2f2f8"/>
<text x="454.3" y="955.8" font-size="9.2" fill="#fff" text-anchor="end" >10</text>
<rect x="371.8" y="972.2" width="68" height="1.9" fill="#f2f2f8"/>
<text x="454.3" y="976.5" font-size="9.2" fill="#fff" text-anchor="end" >15</text>
<rect x="371.8" y="992.9" width="68" height="1.9" fill="#f2f2f8"/>
<text x="454.3" y="997.2" font-size="9.2" fill="#fff" text-anchor="end" >20</text>
<rect x="371.8" y="1009.8" width="68" height="1.9" fill="#f2f2f8"/>
<text x="454.3" y="1014.1" font-size="9.2" fill="#fff" text-anchor="end" >25</text>
<rect x="371.8" y="1026.3" width="68" height="1.9" fill="#f2f2f8"/>
<text x="454.3" y="1030.6" font-size="9.2" fill="#fff" text-anchor="end" >30</text>
<rect x="371.8" y="1043.2" width="68" height="1.9" fill="#f2f2f8"/>
<text x="454.3" y="1047.5" font-size="9.2" fill="#fff" text-anchor="end" >40</text>
<rect x="371.8" y="1053.8" width="68" height="1.9" fill="#f2f2f8"/>
<text x="454.3" y="1058.0" font-size="9.2" fill="#fff" text-anchor="end" >50</text>
<rect x="371.8" y="1063.8" width="68" height="2.2" fill="#f2f2f8"/>
<g transform="translate(448.8,1064.9)" fill="none" stroke="#fff" stroke-width="1.5"><ellipse cx="-2.6" cy="0" rx="2.5" ry="2.1"/><ellipse cx="2.6" cy="0" rx="2.5" ry="2.1"/></g>
<rect x="459.6" y="866.8" width="68" height="2.4" fill="#f2f2f8"/>
<text x="542.1" y="871.3" font-size="9.2" fill="#fff" text-anchor="end" >10</text>
<rect x="459.6" y="888.3" width="68" height="1.9" fill="#f2f2f8"/>
<text x="542.1" y="892.6" font-size="9.2" fill="#fff" text-anchor="end" >5</text>
<rect x="459.6" y="909.2" width="68" height="2.4" fill="#f2f2f8"/>
<text x="542.1" y="913.7" font-size="9.2" fill="#fff" text-anchor="end" >0</text>
<rect x="459.6" y="930.6" width="68" height="1.9" fill="#f2f2f8"/>
<text x="542.1" y="934.9" font-size="9.2" fill="#fff" text-anchor="end" >5</text>
<rect x="459.6" y="951.5" width="68" height="1.9" fill="#f2f2f8"/>
<text x="542.1" y="955.8" font-size="9.2" fill="#fff" text-anchor="end" >10</text>
<rect x="459.6" y="972.2" width="68" height="1.9" fill="#f2f2f8"/>
<text x="542.1" y="976.5" font-size="9.2" fill="#fff" text-anchor="end" >15</text>
<rect x="459.6" y="992.9" width="68" height="1.9" fill="#f2f2f8"/>
<text x="542.1" y="997.2" font-size="9.2" fill="#fff" text-anchor="end" >20</text>
<rect x="459.6" y="1009.8" width="68" height="1.9" fill="#f2f2f8"/>
<text x="542.1" y="1014.1" font-size="9.2" fill="#fff" text-anchor="end" >25</text>
<rect x="459.6" y="1026.3" width="68" height="1.9" fill="#f2f2f8"/>
<text x="542.1" y="1030.6" font-size="9.2" fill="#fff" text-anchor="end" >30</text>
<rect x="459.6" y="1043.2" width="68" height="1.9" fill="#f2f2f8"/>
<text x="542.1" y="1047.5" font-size="9.2" fill="#fff" text-anchor="end" >40</text>
<rect x="459.6" y="1053.8" width="68" height="1.9" fill="#f2f2f8"/>
<text x="542.1" y="1058.0" font-size="9.2" fill="#fff" text-anchor="end" >50</text>
<rect x="459.6" y="1063.8" width="68" height="2.2" fill="#f2f2f8"/>
<g transform="translate(536.6,1064.9)" fill="none" stroke="#fff" stroke-width="1.5"><ellipse cx="-2.6" cy="0" rx="2.5" ry="2.1"/><ellipse cx="2.6" cy="0" rx="2.5" ry="2.1"/></g>
<rect x="547.4" y="866.8" width="68" height="2.4" fill="#f2f2f8"/>
<text x="629.9" y="871.3" font-size="9.2" fill="#fff" text-anchor="end" >10</text>
<rect x="547.4" y="888.3" width="68" height="1.9" fill="#f2f2f8"/>
<text x="629.9" y="892.6" font-size="9.2" fill="#fff" text-anchor="end" >5</text>
<rect x="547.4" y="909.2" width="68" height="2.4" fill="#f2f2f8"/>
<text x="629.9" y="913.7" font-size="9.2" fill="#fff" text-anchor="end" >0</text>
<rect x="547.4" y="930.6" width="68" height="1.9" fill="#f2f2f8"/>
<text x="629.9" y="934.9" font-size="9.2" fill="#fff" text-anchor="end" >5</text>
<rect x="547.4" y="951.5" width="68" height="1.9" fill="#f2f2f8"/>
<text x="629.9" y="955.8" font-size="9.2" fill="#fff" text-anchor="end" >10</text>
<rect x="547.4" y="972.2" width="68" height="1.9" fill="#f2f2f8"/>
<text x="629.9" y="976.5" font-size="9.2" fill="#fff" text-anchor="end" >15</text>
<rect x="547.4" y="992.9" width="68" height="1.9" fill="#f2f2f8"/>
<text x="629.9" y="997.2" font-size="9.2" fill="#fff" text-anchor="end" >20</text>
<rect x="547.4" y="1009.8" width="68" height="1.9" fill="#f2f2f8"/>
<text x="629.9" y="1014.1" font-size="9.2" fill="#fff" text-anchor="end" >25</text>
<rect x="547.4" y="1026.3" width="68" height="1.9" fill="#f2f2f8"/>
<text x="629.9" y="1030.6" font-size="9.2" fill="#fff" text-anchor="end" >30</text>
<rect x="547.4" y="1043.2" width="68" height="1.9" fill="#f2f2f8"/>
<text x="629.9" y="1047.5" font-size="9.2" fill="#fff" text-anchor="end" >40</text>
<rect x="547.4" y="1053.8" width="68" height="1.9" fill="#f2f2f8"/>
<text x="629.9" y="1058.0" font-size="9.2" fill="#fff" text-anchor="end" >50</text>
<rect x="547.4" y="1063.8" width="68" height="2.2" fill="#f2f2f8"/>
<g transform="translate(624.4,1064.9)" fill="none" stroke="#fff" stroke-width="1.5"><ellipse cx="-2.6" cy="0" rx="2.5" ry="2.1"/><ellipse cx="2.6" cy="0" rx="2.5" ry="2.1"/></g>
<rect x="635.2" y="866.8" width="68" height="2.4" fill="#f2f2f8"/>
<text x="717.7" y="871.3" font-size="9.2" fill="#fff" text-anchor="end" >10</text>
<rect x="635.2" y="888.3" width="68" height="1.9" fill="#f2f2f8"/>
<text x="717.7" y="892.6" font-size="9.2" fill="#fff" text-anchor="end" >5</text>
<rect x="635.2" y="909.2" width="68" height="2.4" fill="#f2f2f8"/>
<text x="717.7" y="913.7" font-size="9.2" fill="#fff" text-anchor="end" >0</text>
<rect x="635.2" y="930.6" width="68" height="1.9" fill="#f2f2f8"/>
<text x="717.7" y="934.9" font-size="9.2" fill="#fff" text-anchor="end" >5</text>
<rect x="635.2" y="951.5" width="68" height="1.9" fill="#f2f2f8"/>
<text x="717.7" y="955.8" font-size="9.2" fill="#fff" text-anchor="end" >10</text>
<rect x="635.2" y="972.2" width="68" height="1.9" fill="#f2f2f8"/>
<text x="717.7" y="976.5" font-size="9.2" fill="#fff" text-anchor="end" >15</text>
<rect x="635.2" y="992.9" width="68" height="1.9" fill="#f2f2f8"/>
<text x="717.7" y="997.2" font-size="9.2" fill="#fff" text-anchor="end" >20</text>
<rect x="635.2" y="1009.8" width="68" height="1.9" fill="#f2f2f8"/>
<text x="717.7" y="1014.1" font-size="9.2" fill="#fff" text-anchor="end" >25</text>
<rect x="635.2" y="1026.3" width="68" height="1.9" fill="#f2f2f8"/>
<text x="717.7" y="1030.6" font-size="9.2" fill="#fff" text-anchor="end" >30</text>
<rect x="635.2" y="1043.2" width="68" height="1.9" fill="#f2f2f8"/>
<text x="717.7" y="1047.5" font-size="9.2" fill="#fff" text-anchor="end" >40</text>
<rect x="635.2" y="1053.8" width="68" height="1.9" fill="#f2f2f8"/>
<text x="717.7" y="1058.0" font-size="9.2" fill="#fff" text-anchor="end" >50</text>
<rect x="635.2" y="1063.8" width="68" height="2.2" fill="#f2f2f8"/>
<g transform="translate(712.2,1064.9)" fill="none" stroke="#fff" stroke-width="1.5"><ellipse cx="-2.6" cy="0" rx="2.5" ry="2.1"/><ellipse cx="2.6" cy="0" rx="2.5" ry="2.1"/></g>
<rect x="723.0" y="866.8" width="68" height="2.4" fill="#f2f2f8"/>
<text x="805.5" y="871.3" font-size="9.2" fill="#fff" text-anchor="end" >10</text>
<rect x="723.0" y="888.3" width="68" height="1.9" fill="#f2f2f8"/>
<text x="805.5" y="892.6" font-size="9.2" fill="#fff" text-anchor="end" >5</text>
<rect x="723.0" y="909.2" width="68" height="2.4" fill="#f2f2f8"/>
<text x="805.5" y="913.7" font-size="9.2" fill="#fff" text-anchor="end" >0</text>
<rect x="723.0" y="930.6" width="68" height="1.9" fill="#f2f2f8"/>
<text x="805.5" y="934.9" font-size="9.2" fill="#fff" text-anchor="end" >5</text>
<rect x="723.0" y="951.5" width="68" height="1.9" fill="#f2f2f8"/>
<text x="805.5" y="955.8" font-size="9.2" fill="#fff" text-anchor="end" >10</text>
<rect x="723.0" y="972.2" width="68" height="1.9" fill="#f2f2f8"/>
<text x="805.5" y="976.5" font-size="9.2" fill="#fff" text-anchor="end" >15</text>
<rect x="723.0" y="992.9" width="68" height="1.9" fill="#f2f2f8"/>
<text x="805.5" y="997.2" font-size="9.2" fill="#fff" text-anchor="end" >20</text>
<rect x="723.0" y="1009.8" width="68" height="1.9" fill="#f2f2f8"/>
<text x="805.5" y="1014.1" font-size="9.2" fill="#fff" text-anchor="end" >25</text>
<rect x="723.0" y="1026.3" width="68" height="1.9" fill="#f2f2f8"/>
<text x="805.5" y="1030.6" font-size="9.2" fill="#fff" text-anchor="end" >30</text>
<rect x="723.0" y="1043.2" width="68" height="1.9" fill="#f2f2f8"/>
<text x="805.5" y="1047.5" font-size="9.2" fill="#fff" text-anchor="end" >40</text>
<rect x="723.0" y="1053.8" width="68" height="1.9" fill="#f2f2f8"/>
<text x="805.5" y="1058.0" font-size="9.2" fill="#fff" text-anchor="end" >50</text>
<rect x="723.0" y="1063.8" width="68" height="2.2" fill="#f2f2f8"/>
<g transform="translate(800.0,1064.9)" fill="none" stroke="#fff" stroke-width="1.5"><ellipse cx="-2.6" cy="0" rx="2.5" ry="2.1"/><ellipse cx="2.6" cy="0" rx="2.5" ry="2.1"/></g>
<rect x="810.8" y="866.8" width="68" height="2.4" fill="#f2f2f8"/>
<text x="893.3" y="871.3" font-size="9.2" fill="#fff" text-anchor="end" >10</text>
<rect x="810.8" y="888.3" width="68" height="1.9" fill="#f2f2f8"/>
<text x="893.3" y="892.6" font-size="9.2" fill="#fff" text-anchor="end" >5</text>
<rect x="810.8" y="909.2" width="68" height="2.4" fill="#f2f2f8"/>
<text x="893.3" y="913.7" font-size="9.2" fill="#fff" text-anchor="end" >0</text>
<rect x="810.8" y="930.6" width="68" height="1.9" fill="#f2f2f8"/>
<text x="893.3" y="934.9" font-size="9.2" fill="#fff" text-anchor="end" >5</text>
<rect x="810.8" y="951.5" width="68" height="1.9" fill="#f2f2f8"/>
<text x="893.3" y="955.8" font-size="9.2" fill="#fff" text-anchor="end" >10</text>
<rect x="810.8" y="972.2" width="68" height="1.9" fill="#f2f2f8"/>
<text x="893.3" y="976.5" font-size="9.2" fill="#fff" text-anchor="end" >15</text>
<rect x="810.8" y="992.9" width="68" height="1.9" fill="#f2f2f8"/>
<text x="893.3" y="997.2" font-size="9.2" fill="#fff" text-anchor="end" >20</text>
<rect x="810.8" y="1009.8" width="68" height="1.9" fill="#f2f2f8"/>
<text x="893.3" y="1014.1" font-size="9.2" fill="#fff" text-anchor="end" >25</text>
<rect x="810.8" y="1026.3" width="68" height="1.9" fill="#f2f2f8"/>
<text x="893.3" y="1030.6" font-size="9.2" fill="#fff" text-anchor="end" >30</text>
<rect x="810.8" y="1043.2" width="68" height="1.9" fill="#f2f2f8"/>
<text x="893.3" y="1047.5" font-size="9.2" fill="#fff" text-anchor="end" >40</text>
<rect x="810.8" y="1053.8" width="68" height="1.9" fill="#f2f2f8"/>
<text x="893.3" y="1058.0" font-size="9.2" fill="#fff" text-anchor="end" >50</text>
<rect x="810.8" y="1063.8" width="68" height="2.2" fill="#f2f2f8"/>
<g transform="translate(887.8,1064.9)" fill="none" stroke="#fff" stroke-width="1.5"><ellipse cx="-2.6" cy="0" rx="2.5" ry="2.1"/><ellipse cx="2.6" cy="0" rx="2.5" ry="2.1"/></g>
<rect x="898.6" y="866.8" width="68" height="2.4" fill="#f2f2f8"/>
<text x="981.1" y="871.3" font-size="9.2" fill="#fff" text-anchor="end" >10</text>
<rect x="898.6" y="888.3" width="68" height="1.9" fill="#f2f2f8"/>
<text x="981.1" y="892.6" font-size="9.2" fill="#fff" text-anchor="end" >5</text>
<rect x="898.6" y="909.2" width="68" height="2.4" fill="#f2f2f8"/>
<text x="981.1" y="913.7" font-size="9.2" fill="#fff" text-anchor="end" >0</text>
<rect x="898.6" y="930.6" width="68" height="1.9" fill="#f2f2f8"/>
<text x="981.1" y="934.9" font-size="9.2" fill="#fff" text-anchor="end" >5</text>
<rect x="898.6" y="951.5" width="68" height="1.9" fill="#f2f2f8"/>
<text x="981.1" y="955.8" font-size="9.2" fill="#fff" text-anchor="end" >10</text>
<rect x="898.6" y="972.2" width="68" height="1.9" fill="#f2f2f8"/>
<text x="981.1" y="976.5" font-size="9.2" fill="#fff" text-anchor="end" >15</text>
<rect x="898.6" y="992.9" width="68" height="1.9" fill="#f2f2f8"/>
<text x="981.1" y="997.2" font-size="9.2" fill="#fff" text-anchor="end" >20</text>
<rect x="898.6" y="1009.8" width="68" height="1.9" fill="#f2f2f8"/>
<text x="981.1" y="1014.1" font-size="9.2" fill="#fff" text-anchor="end" >25</text>
<rect x="898.6" y="1026.3" width="68" height="1.9" fill="#f2f2f8"/>
<text x="981.1" y="1030.6" font-size="9.2" fill="#fff" text-anchor="end" >30</text>
<rect x="898.6" y="1043.2" width="68" height="1.9" fill="#f2f2f8"/>
<text x="981.1" y="1047.5" font-size="9.2" fill="#fff" text-anchor="end" >40</text>
<rect x="898.6" y="1053.8" width="68" height="1.9" fill="#f2f2f8"/>
<text x="981.1" y="1058.0" font-size="9.2" fill="#fff" text-anchor="end" >50</text>
<rect x="898.6" y="1063.8" width="68" height="2.2" fill="#f2f2f8"/>
<g transform="translate(975.6,1064.9)" fill="none" stroke="#fff" stroke-width="1.5"><ellipse cx="-2.6" cy="0" rx="2.5" ry="2.1"/><ellipse cx="2.6" cy="0" rx="2.5" ry="2.1"/></g>
<rect x="986.4" y="866.8" width="68" height="2.4" fill="#f2f2f8"/>
<text x="1068.9" y="871.3" font-size="9.2" fill="#fff" text-anchor="end" >10</text>
<rect x="986.4" y="888.3" width="68" height="1.9" fill="#f2f2f8"/>
<text x="1068.9" y="892.6" font-size="9.2" fill="#fff" text-anchor="end" >5</text>
<rect x="986.4" y="909.2" width="68" height="2.4" fill="#f2f2f8"/>
<text x="1068.9" y="913.7" font-size="9.2" fill="#fff" text-anchor="end" >0</text>
<rect x="986.4" y="930.6" width="68" height="1.9" fill="#f2f2f8"/>
<text x="1068.9" y="934.9" font-size="9.2" fill="#fff" text-anchor="end" >5</text>
<rect x="986.4" y="951.5" width="68" height="1.9" fill="#f2f2f8"/>
<text x="1068.9" y="955.8" font-size="9.2" fill="#fff" text-anchor="end" >10</text>
<rect x="986.4" y="972.2" width="68" height="1.9" fill="#f2f2f8"/>
<text x="1068.9" y="976.5" font-size="9.2" fill="#fff" text-anchor="end" >15</text>
<rect x="986.4" y="992.9" width="68" height="1.9" fill="#f2f2f8"/>
<text x="1068.9" y="997.2" font-size="9.2" fill="#fff" text-anchor="end" >20</text>
<rect x="986.4" y="1009.8" width="68" height="1.9" fill="#f2f2f8"/>
<text x="1068.9" y="1014.1" font-size="9.2" fill="#fff" text-anchor="end" >25</text>
<rect x="986.4" y="1026.3" width="68" height="1.9" fill="#f2f2f8"/>
<text x="1068.9" y="1030.6" font-size="9.2" fill="#fff" text-anchor="end" >30</text>
<rect x="986.4" y="1043.2" width="68" height="1.9" fill="#f2f2f8"/>
<text x="1068.9" y="1047.5" font-size="9.2" fill="#fff" text-anchor="end" >40</text>
<rect x="986.4" y="1053.8" width="68" height="1.9" fill="#f2f2f8"/>
<text x="1068.9" y="1058.0" font-size="9.2" fill="#fff" text-anchor="end" >50</text>
<rect x="986.4" y="1063.8" width="68" height="2.2" fill="#f2f2f8"/>
<g transform="translate(1063.4,1064.9)" fill="none" stroke="#fff" stroke-width="1.5"><ellipse cx="-2.6" cy="0" rx="2.5" ry="2.1"/><ellipse cx="2.6" cy="0" rx="2.5" ry="2.1"/></g>
<rect x="1074.2" y="866.8" width="68" height="2.4" fill="#f2f2f8"/>
<text x="1156.7" y="871.3" font-size="9.2" fill="#fff" text-anchor="end" >10</text>
<rect x="1074.2" y="888.3" width="68" height="1.9" fill="#f2f2f8"/>
<text x="1156.7" y="892.6" font-size="9.2" fill="#fff" text-anchor="end" >5</text>
<rect x="1074.2" y="909.2" width="68" height="2.4" fill="#f2f2f8"/>
<text x="1156.7" y="913.7" font-size="9.2" fill="#fff" text-anchor="end" >0</text>
<rect x="1074.2" y="930.6" width="68" height="1.9" fill="#f2f2f8"/>
<text x="1156.7" y="934.9" font-size="9.2" fill="#fff" text-anchor="end" >5</text>
<rect x="1074.2" y="951.5" width="68" height="1.9" fill="#f2f2f8"/>
<text x="1156.7" y="955.8" font-size="9.2" fill="#fff" text-anchor="end" >10</text>
<rect x="1074.2" y="972.2" width="68" height="1.9" fill="#f2f2f8"/>
<text x="1156.7" y="976.5" font-size="9.2" fill="#fff" text-anchor="end" >15</text>
<rect x="1074.2" y="992.9" width="68" height="1.9" fill="#f2f2f8"/>
<text x="1156.7" y="997.2" font-size="9.2" fill="#fff" text-anchor="end" >20</text>
<rect x="1074.2" y="1009.8" width="68" height="1.9" fill="#f2f2f8"/>
<text x="1156.7" y="1014.1" font-size="9.2" fill="#fff" text-anchor="end" >25</text>
<rect x="1074.2" y="1026.3" width="68" height="1.9" fill="#f2f2f8"/>
<text x="1156.7" y="1030.6" font-size="9.2" fill="#fff" text-anchor="end" >30</text>
<rect x="1074.2" y="1043.2" width="68" height="1.9" fill="#f2f2f8"/>
<text x="1156.7" y="1047.5" font-size="9.2" fill="#fff" text-anchor="end" >40</text>
<rect x="1074.2" y="1053.8" width="68" height="1.9" fill="#f2f2f8"/>
<text x="1156.7" y="1058.0" font-size="9.2" fill="#fff" text-anchor="end" >50</text>
<rect x="1074.2" y="1063.8" width="68" height="2.2" fill="#f2f2f8"/>
<g transform="translate(1151.2,1064.9)" fill="none" stroke="#fff" stroke-width="1.5"><ellipse cx="-2.6" cy="0" rx="2.5" ry="2.1"/><ellipse cx="2.6" cy="0" rx="2.5" ry="2.1"/></g>
<rect x="1162.0" y="866.8" width="68" height="2.4" fill="#f2f2f8"/>
<text x="1244.5" y="871.3" font-size="9.2" fill="#fff" text-anchor="end" >10</text>
<rect x="1162.0" y="888.3" width="68" height="1.9" fill="#f2f2f8"/>
<text x="1244.5" y="892.6" font-size="9.2" fill="#fff" text-anchor="end" >5</text>
<rect x="1162.0" y="909.2" width="68" height="2.4" fill="#f2f2f8"/>
<text x="1244.5" y="913.7" font-size="9.2" fill="#fff" text-anchor="end" >0</text>
<rect x="1162.0" y="930.6" width="68" height="1.9" fill="#f2f2f8"/>
<text x="1244.5" y="934.9" font-size="9.2" fill="#fff" text-anchor="end" >5</text>
<rect x="1162.0" y="951.5" width="68" height="1.9" fill="#f2f2f8"/>
<text x="1244.5" y="955.8" font-size="9.2" fill="#fff" text-anchor="end" >10</text>
<rect x="1162.0" y="972.2" width="68" height="1.9" fill="#f2f2f8"/>
<text x="1244.5" y="976.5" font-size="9.2" fill="#fff" text-anchor="end" >15</text>
<rect x="1162.0" y="992.9" width="68" height="1.9" fill="#f2f2f8"/>
<text x="1244.5" y="997.2" font-size="9.2" fill="#fff" text-anchor="end" >20</text>
<rect x="1162.0" y="1009.8" width="68" height="1.9" fill="#f2f2f8"/>
<text x="1244.5" y="1014.1" font-size="9.2" fill="#fff" text-anchor="end" >25</text>
<rect x="1162.0" y="1026.3" width="68" height="1.9" fill="#f2f2f8"/>
<text x="1244.5" y="1030.6" font-size="9.2" fill="#fff" text-anchor="end" >30</text>
<rect x="1162.0" y="1043.2" width="68" height="1.9" fill="#f2f2f8"/>
<text x="1244.5" y="1047.5" font-size="9.2" fill="#fff" text-anchor="end" >40</text>
<rect x="1162.0" y="1053.8" width="68" height="1.9" fill="#f2f2f8"/>
<text x="1244.5" y="1058.0" font-size="9.2" fill="#fff" text-anchor="end" >50</text>
<rect x="1162.0" y="1063.8" width="68" height="2.2" fill="#f2f2f8"/>
<g transform="translate(1239.0,1064.9)" fill="none" stroke="#fff" stroke-width="1.5"><ellipse cx="-2.6" cy="0" rx="2.5" ry="2.1"/><ellipse cx="2.6" cy="0" rx="2.5" ry="2.1"/></g>
<rect x="1249.8" y="866.8" width="68" height="2.4" fill="#f2f2f8"/>
<text x="1332.3" y="871.3" font-size="9.2" fill="#fff" text-anchor="end" >10</text>
<rect x="1249.8" y="888.3" width="68" height="1.9" fill="#f2f2f8"/>
<text x="1332.3" y="892.6" font-size="9.2" fill="#fff" text-anchor="end" >5</text>
<rect x="1249.8" y="909.2" width="68" height="2.4" fill="#f2f2f8"/>
<text x="1332.3" y="913.7" font-size="9.2" fill="#fff" text-anchor="end" >0</text>
<rect x="1249.8" y="930.6" width="68" height="1.9" fill="#f2f2f8"/>
<text x="1332.3" y="934.9" font-size="9.2" fill="#fff" text-anchor="end" >5</text>
<rect x="1249.8" y="951.5" width="68" height="1.9" fill="#f2f2f8"/>
<text x="1332.3" y="955.8" font-size="9.2" fill="#fff" text-anchor="end" >10</text>
<rect x="1249.8" y="972.2" width="68" height="1.9" fill="#f2f2f8"/>
<text x="1332.3" y="976.5" font-size="9.2" fill="#fff" text-anchor="end" >15</text>
<rect x="1249.8" y="992.9" width="68" height="1.9" fill="#f2f2f8"/>
<text x="1332.3" y="997.2" font-size="9.2" fill="#fff" text-anchor="end" >20</text>
<rect x="1249.8" y="1009.8" width="68" height="1.9" fill="#f2f2f8"/>
<text x="1332.3" y="1014.1" font-size="9.2" fill="#fff" text-anchor="end" >25</text>
<rect x="1249.8" y="1026.3" width="68" height="1.9" fill="#f2f2f8"/>
<text x="1332.3" y="1030.6" font-size="9.2" fill="#fff" text-anchor="end" >30</text>
<rect x="1249.8" y="1043.2" width="68" height="1.9" fill="#f2f2f8"/>
<text x="1332.3" y="1047.5" font-size="9.2" fill="#fff" text-anchor="end" >40</text>
<rect x="1249.8" y="1053.8" width="68" height="1.9" fill="#f2f2f8"/>
<text x="1332.3" y="1058.0" font-size="9.2" fill="#fff" text-anchor="end" >50</text>
<rect x="1249.8" y="1063.8" width="68" height="2.2" fill="#f2f2f8"/>
<g transform="translate(1326.8,1064.9)" fill="none" stroke="#fff" stroke-width="1.5"><ellipse cx="-2.6" cy="0" rx="2.5" ry="2.1"/><ellipse cx="2.6" cy="0" rx="2.5" ry="2.1"/></g>
<rect x="1337.6" y="866.8" width="68" height="2.4" fill="#f2f2f8"/>
<text x="1420.1" y="871.3" font-size="9.2" fill="#fff" text-anchor="end" >10</text>
<rect x="1337.6" y="888.3" width="68" height="1.9" fill="#f2f2f8"/>
<text x="1420.1" y="892.6" font-size="9.2" fill="#fff" text-anchor="end" >5</text>
<rect x="1337.6" y="909.2" width="68" height="2.4" fill="#f2f2f8"/>
<text x="1420.1" y="913.7" font-size="9.2" fill="#fff" text-anchor="end" >0</text>
<rect x="1337.6" y="930.6" width="68" height="1.9" fill="#f2f2f8"/>
<text x="1420.1" y="934.9" font-size="9.2" fill="#fff" text-anchor="end" >5</text>
<rect x="1337.6" y="951.5" width="68" height="1.9" fill="#f2f2f8"/>
<text x="1420.1" y="955.8" font-size="9.2" fill="#fff" text-anchor="end" >10</text>
<rect x="1337.6" y="972.2" width="68" height="1.9" fill="#f2f2f8"/>
<text x="1420.1" y="976.5" font-size="9.2" fill="#fff" text-anchor="end" >15</text>
<rect x="1337.6" y="992.9" width="68" height="1.9" fill="#f2f2f8"/>
<text x="1420.1" y="997.2" font-size="9.2" fill="#fff" text-anchor="end" >20</text>
<rect x="1337.6" y="1009.8" width="68" height="1.9" fill="#f2f2f8"/>
<text x="1420.1" y="1014.1" font-size="9.2" fill="#fff" text-anchor="end" >25</text>
<rect x="1337.6" y="1026.3" width="68" height="1.9" fill="#f2f2f8"/>
<text x="1420.1" y="1030.6" font-size="9.2" fill="#fff" text-anchor="end" >30</text>
<rect x="1337.6" y="1043.2" width="68" height="1.9" fill="#f2f2f8"/>
<text x="1420.1" y="1047.5" font-size="9.2" fill="#fff" text-anchor="end" >40</text>
<rect x="1337.6" y="1053.8" width="68" height="1.9" fill="#f2f2f8"/>
<text x="1420.1" y="1058.0" font-size="9.2" fill="#fff" text-anchor="end" >50</text>
<rect x="1337.6" y="1063.8" width="68" height="2.2" fill="#f2f2f8"/>
<g transform="translate(1414.6,1064.9)" fill="none" stroke="#fff" stroke-width="1.5"><ellipse cx="-2.6" cy="0" rx="2.5" ry="2.1"/><ellipse cx="2.6" cy="0" rx="2.5" ry="2.1"/></g>
<path d="M20.6,867 L20.6,1107 Q20.6,1115 28.6,1115 L100.4,1115 Q108.4,1115 108.4,1107 L108.4,1090" fill="none" stroke="#f4f4fa" stroke-width="2.2"/>
<path d="M108.4,867 L108.4,1107 Q108.4,1115 116.4,1115 L188.2,1115 Q196.2,1115 196.2,1107 L196.2,1090" fill="none" stroke="#f4f4fa" stroke-width="2.2"/>
<path d="M196.2,867 L196.2,1107 Q196.2,1115 204.2,1115 L276.0,1115 Q284.0,1115 284.0,1107 L284.0,1090" fill="none" stroke="#f4f4fa" stroke-width="2.2"/>
<path d="M284.0,867 L284.0,1107 Q284.0,1115 292.0,1115 L363.8,1115 Q371.8,1115 371.8,1107 L371.8,1090" fill="none" stroke="#f4f4fa" stroke-width="2.2"/>
<path d="M371.8,867 L371.8,1107 Q371.8,1115 379.8,1115 L451.6,1115 Q459.6,1115 459.6,1107 L459.6,1090" fill="none" stroke="#f4f4fa" stroke-width="2.2"/>
<path d="M459.6,867 L459.6,1107 Q459.6,1115 467.6,1115 L539.4,1115 Q547.4,1115 547.4,1107 L547.4,1090" fill="none" stroke="#f4f4fa" stroke-width="2.2"/>
<path d="M547.4,867 L547.4,1107 Q547.4,1115 555.4,1115 L627.2,1115 Q635.2,1115 635.2,1107 L635.2,1090" fill="none" stroke="#f4f4fa" stroke-width="2.2"/>
<path d="M635.2,867 L635.2,1107 Q635.2,1115 643.2,1115 L715.0,1115 Q723.0,1115 723.0,1107 L723.0,1090" fill="none" stroke="#f4f4fa" stroke-width="2.2"/>
<path d="M723.0,867 L723.0,1107 Q723.0,1115 731.0,1115 L802.8,1115 Q810.8,1115 810.8,1107 L810.8,1090" fill="none" stroke="#f4f4fa" stroke-width="2.2"/>
<path d="M810.8,867 L810.8,1107 Q810.8,1115 818.8,1115 L890.6,1115 Q898.6,1115 898.6,1107 L898.6,1090" fill="none" stroke="#f4f4fa" stroke-width="2.2"/>
<path d="M898.6,867 L898.6,1107 Q898.6,1115 906.6,1115 L978.4,1115 Q986.4,1115 986.4,1107 L986.4,1090" fill="none" stroke="#f4f4fa" stroke-width="2.2"/>
<path d="M986.4,867 L986.4,1107 Q986.4,1115 994.4,1115 L1066.2,1115 Q1074.2,1115 1074.2,1107 L1074.2,1090" fill="none" stroke="#f4f4fa" stroke-width="2.2"/>
<path d="M1074.2,867 L1074.2,1107 Q1074.2,1115 1082.2,1115 L1154.0,1115 Q1162.0,1115 1162.0,1107 L1162.0,1090" fill="none" stroke="#f4f4fa" stroke-width="2.2"/>
<path d="M1162.0,867 L1162.0,1107 Q1162.0,1115 1170.0,1115 L1241.8,1115 Q1249.8,1115 1249.8,1107 L1249.8,1090" fill="none" stroke="#f4f4fa" stroke-width="2.2"/>
<path d="M1249.1,867 L1249.1,1107 Q1249.1,1115 1257.1,1115 L1417,1115 Q1425,1115 1425,1107 L1425,867" fill="none" stroke="#f4f4fa" stroke-width="2.2"/>
<rect x="27.3" y="1083.7" width="74.8" height="25" rx="5" fill="url(#gLabel)"/>
<text x="99.1" y="1101.5" font-size="12.5" fill="#1e1e5c" text-anchor="end" >1</text>
<rect x="115.1" y="1083.7" width="74.8" height="25" rx="5" fill="url(#gLabel)"/>
<text x="186.9" y="1101.5" font-size="12.5" fill="#1e1e5c" text-anchor="end" >2</text>
<rect x="202.9" y="1083.7" width="74.8" height="25" rx="5" fill="url(#gLabel)"/>
<text x="274.7" y="1101.5" font-size="12.5" fill="#1e1e5c" text-anchor="end" >3</text>
<rect x="290.7" y="1083.7" width="74.8" height="25" rx="5" fill="url(#gLabel)"/>
<text x="362.5" y="1101.5" font-size="12.5" fill="#1e1e5c" text-anchor="end" >4</text>
<rect x="378.5" y="1083.7" width="74.8" height="25" rx="5" fill="url(#gLabel)"/>
<text x="450.3" y="1101.5" font-size="12.5" fill="#1e1e5c" text-anchor="end" >5</text>
<rect x="466.3" y="1083.7" width="74.8" height="25" rx="5" fill="url(#gLabel)"/>
<text x="538.1" y="1101.5" font-size="12.5" fill="#1e1e5c" text-anchor="end" >6</text>
<rect x="554.1" y="1083.7" width="74.8" height="25" rx="5" fill="url(#gLabel)"/>
<text x="625.9" y="1101.5" font-size="12.5" fill="#1e1e5c" text-anchor="end" >7</text>
<rect x="641.9" y="1083.7" width="74.8" height="25" rx="5" fill="url(#gLabel)"/>
<text x="713.7" y="1101.5" font-size="12.5" fill="#1e1e5c" text-anchor="end" >8</text>
<rect x="729.7" y="1083.7" width="74.8" height="25" rx="5" fill="url(#gLabel)"/>
<text x="801.5" y="1101.5" font-size="12.5" fill="#1e1e5c" text-anchor="end" >9</text>
<rect x="817.5" y="1083.7" width="74.8" height="25" rx="5" fill="url(#gLabel)"/>
<text x="889.3" y="1101.5" font-size="12.5" fill="#1e1e5c" text-anchor="end" >10</text>
<rect x="905.3" y="1083.7" width="74.8" height="25" rx="5" fill="url(#gLabel)"/>
<text x="977.1" y="1101.5" font-size="12.5" fill="#1e1e5c" text-anchor="end" >11</text>
<rect x="993.1" y="1083.7" width="74.8" height="25" rx="5" fill="url(#gLabel)"/>
<text x="1064.9" y="1101.5" font-size="12.5" fill="#1e1e5c" text-anchor="end" >12</text>
<rect x="1080.9" y="1083.7" width="74.8" height="25" rx="5" fill="url(#gLabel)"/>
<text x="1118.2" y="1101.3" font-size="11.8" fill="#1e1e5c" text-anchor="middle" letter-spacing="-0.3">13 stereo 14</text>
<rect x="1168.7" y="1083.7" width="74.8" height="25" rx="5" fill="url(#gLabel)"/>
<text x="1206.0" y="1101.3" font-size="11.8" fill="#1e1e5c" text-anchor="middle" letter-spacing="-0.3">15 stereo 16</text>
<rect x="1255.6" y="1083.7" width="162.7" height="25" rx="5" fill="url(#gLabel)"/>
<text x="1260.0" y="1101.3" font-size="12" fill="#1e1e5c" text-anchor="start" >l</text>
<text x="1336.0" y="1101.3" font-size="12" fill="#1e1e5c" text-anchor="middle" >mix</text>
<text x="1414.0" y="1101.3" font-size="12" fill="#1e1e5c" text-anchor="end" >r</text>
<rect x="60.1" y="855" width="9.2" height="221.5" rx="4.6" fill="#0a0a0a"/>
<rect x="147.8" y="855" width="9.2" height="221.5" rx="4.6" fill="#0a0a0a"/>
<rect x="235.6" y="855" width="9.2" height="221.5" rx="4.6" fill="#0a0a0a"/>
<rect x="323.3" y="855" width="9.2" height="221.5" rx="4.6" fill="#0a0a0a"/>
<rect x="411.1" y="855" width="9.2" height="221.5" rx="4.6" fill="#0a0a0a"/>
<rect x="498.8" y="855" width="9.2" height="221.5" rx="4.6" fill="#0a0a0a"/>
<rect x="586.6" y="855" width="9.2" height="221.5" rx="4.6" fill="#0a0a0a"/>
<rect x="674.4" y="855" width="9.2" height="221.5" rx="4.6" fill="#0a0a0a"/>
<rect x="762.1" y="855" width="9.2" height="221.5" rx="4.6" fill="#0a0a0a"/>
<rect x="849.9" y="855" width="9.2" height="221.5" rx="4.6" fill="#0a0a0a"/>
<rect x="937.6" y="855" width="9.2" height="221.5" rx="4.6" fill="#0a0a0a"/>
<rect x="1025.4" y="855" width="9.2" height="221.5" rx="4.6" fill="#0a0a0a"/>
<rect x="1113.1" y="855" width="9.2" height="221.5" rx="4.6" fill="#0a0a0a"/>
<rect x="1200.9" y="855" width="9.2" height="221.5" rx="4.6" fill="#0a0a0a"/>
<rect x="1288.6" y="855" width="9.2" height="221.5" rx="4.6" fill="#0a0a0a"/>
<rect x="1376.4" y="855" width="9.2" height="221.5" rx="4.6" fill="#0a0a0a"/>
<ellipse cx="64.7" cy="1056.3" rx="26" ry="46" fill="url(#gShadow)"/>
<g transform="translate(64.7,1026.3)">
<path d="M-13,0 Q-17.7,0 -17.7,7 Q-13.2,39 -17.7,71 Q-17.7,78 -13,78 L13,78 Q17.7,78 17.7,71 Q13.2,39 17.7,7 Q17.7,0 13,0 Z" fill="url(#gCapCream)"/>
<path d="M-16.8,22 Q0,6 16.8,22 L16.8,35 Q0,19 -16.8,35 Z" fill="#000" opacity="0.09"/>
<path d="M-16.5,22.5 Q0,6.5 16.5,22.5" stroke="#efefe2" stroke-width="1.5" fill="none"/>
<path d="M-15,34.5 Q0,19 15,34.5" stroke="#9a9a8a" stroke-width="0.7" fill="none" opacity="0.5"/>
<path d="M-16.8,56 Q0,72 16.8,56 L16.8,44 Q0,60 -16.8,44 Z" fill="#000" opacity="0.09"/>
<path d="M-15,44.5 Q0,60 15,44.5" stroke="#9a9a8a" stroke-width="0.7" fill="none" opacity="0.5"/>
<path d="M-16.5,56 Q0,72 16.5,56" stroke="#efefe2" stroke-width="1.1" fill="none" opacity="0.8"/>
<rect x="-17.3" y="36" width="34.6" height="6.5" rx="1" fill="#ecece0"/><rect x="-17.3" y="37.8" width="34.6" height="2.8" fill="#3a3a38"/>
</g>
<ellipse cx="152.4" cy="978.3" rx="26" ry="46" fill="url(#gShadow)"/>
<g transform="translate(152.4,948.3)">
<path d="M-13,0 Q-17.7,0 -17.7,7 Q-13.2,39 -17.7,71 Q-17.7,78 -13,78 L13,78 Q17.7,78 17.7,71 Q13.2,39 17.7,7 Q17.7,0 13,0 Z" fill="url(#gCapCream)"/>
<path d="M-16.8,22 Q0,6 16.8,22 L16.8,35 Q0,19 -16.8,35 Z" fill="#000" opacity="0.09"/>
<path d="M-16.5,22.5 Q0,6.5 16.5,22.5" stroke="#efefe2" stroke-width="1.5" fill="none"/>
<path d="M-15,34.5 Q0,19 15,34.5" stroke="#9a9a8a" stroke-width="0.7" fill="none" opacity="0.5"/>
<path d="M-16.8,56 Q0,72 16.8,56 L16.8,44 Q0,60 -16.8,44 Z" fill="#000" opacity="0.09"/>
<path d="M-15,44.5 Q0,60 15,44.5" stroke="#9a9a8a" stroke-width="0.7" fill="none" opacity="0.5"/>
<path d="M-16.5,56 Q0,72 16.5,56" stroke="#efefe2" stroke-width="1.1" fill="none" opacity="0.8"/>
<rect x="-17.3" y="36" width="34.6" height="6.5" rx="1" fill="#ecece0"/><rect x="-17.3" y="37.8" width="34.6" height="2.8" fill="#3a3a38"/>
</g>
<ellipse cx="240.2" cy="911.8" rx="26" ry="46" fill="url(#gShadow)"/>
<g transform="translate(240.2,881.8)">
<path d="M-13,0 Q-17.7,0 -17.7,7 Q-13.2,39 -17.7,71 Q-17.7,78 -13,78 L13,78 Q17.7,78 17.7,71 Q13.2,39 17.7,7 Q17.7,0 13,0 Z" fill="url(#gCapCream)"/>
<path d="M-16.8,22 Q0,6 16.8,22 L16.8,35 Q0,19 -16.8,35 Z" fill="#000" opacity="0.09"/>
<path d="M-16.5,22.5 Q0,6.5 16.5,22.5" stroke="#efefe2" stroke-width="1.5" fill="none"/>
<path d="M-15,34.5 Q0,19 15,34.5" stroke="#9a9a8a" stroke-width="0.7" fill="none" opacity="0.5"/>
<path d="M-16.8,56 Q0,72 16.8,56 L16.8,44 Q0,60 -16.8,44 Z" fill="#000" opacity="0.09"/>
<path d="M-15,44.5 Q0,60 15,44.5" stroke="#9a9a8a" stroke-width="0.7" fill="none" opacity="0.5"/>
<path d="M-16.5,56 Q0,72 16.5,56" stroke="#efefe2" stroke-width="1.1" fill="none" opacity="0.8"/>
<rect x="-17.3" y="36" width="34.6" height="6.5" rx="1" fill="#ecece0"/><rect x="-17.3" y="37.8" width="34.6" height="2.8" fill="#3a3a38"/>
</g>
<ellipse cx="327.9" cy="865.4" rx="26" ry="46" fill="url(#gShadow)"/>
<g transform="translate(327.9,835.4)">
<path d="M-13,0 Q-17.7,0 -17.7,7 Q-13.2,39 -17.7,71 Q-17.7,78 -13,78 L13,78 Q17.7,78 17.7,71 Q13.2,39 17.7,7 Q17.7,0 13,0 Z" fill="url(#gCapCream)"/>
<path d="M-16.8,22 Q0,6 16.8,22 L16.8,35 Q0,19 -16.8,35 Z" fill="#000" opacity="0.09"/>
<path d="M-16.5,22.5 Q0,6.5 16.5,22.5" stroke="#efefe2" stroke-width="1.5" fill="none"/>
<path d="M-15,34.5 Q0,19 15,34.5" stroke="#9a9a8a" stroke-width="0.7" fill="none" opacity="0.5"/>
<path d="M-16.8,56 Q0,72 16.8,56 L16.8,44 Q0,60 -16.8,44 Z" fill="#000" opacity="0.09"/>
<path d="M-15,44.5 Q0,60 15,44.5" stroke="#9a9a8a" stroke-width="0.7" fill="none" opacity="0.5"/>
<path d="M-16.5,56 Q0,72 16.5,56" stroke="#efefe2" stroke-width="1.1" fill="none" opacity="0.8"/>
<rect x="-17.3" y="36" width="34.6" height="6.5" rx="1" fill="#ecece0"/><rect x="-17.3" y="37.8" width="34.6" height="2.8" fill="#3a3a38"/>
</g>
<ellipse cx="415.7" cy="865.4" rx="26" ry="46" fill="url(#gShadow)"/>
<g transform="translate(415.7,835.4)">
<path d="M-13,0 Q-17.7,0 -17.7,7 Q-13.2,39 -17.7,71 Q-17.7,78 -13,78 L13,78 Q17.7,78 17.7,71 Q13.2,39 17.7,7 Q17.7,0 13,0 Z" fill="url(#gCapCream)"/>
<path d="M-16.8,22 Q0,6 16.8,22 L16.8,35 Q0,19 -16.8,35 Z" fill="#000" opacity="0.09"/>
<path d="M-16.5,22.5 Q0,6.5 16.5,22.5" stroke="#efefe2" stroke-width="1.5" fill="none"/>
<path d="M-15,34.5 Q0,19 15,34.5" stroke="#9a9a8a" stroke-width="0.7" fill="none" opacity="0.5"/>
<path d="M-16.8,56 Q0,72 16.8,56 L16.8,44 Q0,60 -16.8,44 Z" fill="#000" opacity="0.09"/>
<path d="M-15,44.5 Q0,60 15,44.5" stroke="#9a9a8a" stroke-width="0.7" fill="none" opacity="0.5"/>
<path d="M-16.5,56 Q0,72 16.5,56" stroke="#efefe2" stroke-width="1.1" fill="none" opacity="0.8"/>
<rect x="-17.3" y="36" width="34.6" height="6.5" rx="1" fill="#ecece0"/><rect x="-17.3" y="37.8" width="34.6" height="2.8" fill="#3a3a38"/>
</g>
<ellipse cx="503.4" cy="912.3" rx="26" ry="46" fill="url(#gShadow)"/>
<g transform="translate(503.4,882.3)">
<path d="M-13,0 Q-17.7,0 -17.7,7 Q-13.2,39 -17.7,71 Q-17.7,78 -13,78 L13,78 Q17.7,78 17.7,71 Q13.2,39 17.7,7 Q17.7,0 13,0 Z" fill="url(#gCapCream)"/>
<path d="M-16.8,22 Q0,6 16.8,22 L16.8,35 Q0,19 -16.8,35 Z" fill="#000" opacity="0.09"/>
<path d="M-16.5,22.5 Q0,6.5 16.5,22.5" stroke="#efefe2" stroke-width="1.5" fill="none"/>
<path d="M-15,34.5 Q0,19 15,34.5" stroke="#9a9a8a" stroke-width="0.7" fill="none" opacity="0.5"/>
<path d="M-16.8,56 Q0,72 16.8,56 L16.8,44 Q0,60 -16.8,44 Z" fill="#000" opacity="0.09"/>
<path d="M-15,44.5 Q0,60 15,44.5" stroke="#9a9a8a" stroke-width="0.7" fill="none" opacity="0.5"/>
<path d="M-16.5,56 Q0,72 16.5,56" stroke="#efefe2" stroke-width="1.1" fill="none" opacity="0.8"/>
<rect x="-17.3" y="36" width="34.6" height="6.5" rx="1" fill="#ecece0"/><rect x="-17.3" y="37.8" width="34.6" height="2.8" fill="#3a3a38"/>
</g>
<ellipse cx="591.2" cy="994.5" rx="26" ry="46" fill="url(#gShadow)"/>
<g transform="translate(591.2,964.5)">
<path d="M-13,0 Q-17.7,0 -17.7,7 Q-13.2,39 -17.7,71 Q-17.7,78 -13,78 L13,78 Q17.7,78 17.7,71 Q13.2,39 17.7,7 Q17.7,0 13,0 Z" fill="url(#gCapCream)"/>
<path d="M-16.8,22 Q0,6 16.8,22 L16.8,35 Q0,19 -16.8,35 Z" fill="#000" opacity="0.09"/>
<path d="M-16.5,22.5 Q0,6.5 16.5,22.5" stroke="#efefe2" stroke-width="1.5" fill="none"/>
<path d="M-15,34.5 Q0,19 15,34.5" stroke="#9a9a8a" stroke-width="0.7" fill="none" opacity="0.5"/>
<path d="M-16.8,56 Q0,72 16.8,56 L16.8,44 Q0,60 -16.8,44 Z" fill="#000" opacity="0.09"/>
<path d="M-15,44.5 Q0,60 15,44.5" stroke="#9a9a8a" stroke-width="0.7" fill="none" opacity="0.5"/>
<path d="M-16.5,56 Q0,72 16.5,56" stroke="#efefe2" stroke-width="1.1" fill="none" opacity="0.8"/>
<rect x="-17.3" y="36" width="34.6" height="6.5" rx="1" fill="#ecece0"/><rect x="-17.3" y="37.8" width="34.6" height="2.8" fill="#3a3a38"/>
</g>
<ellipse cx="679.0" cy="1046.8" rx="26" ry="46" fill="url(#gShadow)"/>
<g transform="translate(679.0,1016.8)">
<path d="M-13,0 Q-17.7,0 -17.7,7 Q-13.2,39 -17.7,71 Q-17.7,78 -13,78 L13,78 Q17.7,78 17.7,71 Q13.2,39 17.7,7 Q17.7,0 13,0 Z" fill="url(#gCapCream)"/>
<path d="M-16.8,22 Q0,6 16.8,22 L16.8,35 Q0,19 -16.8,35 Z" fill="#000" opacity="0.09"/>
<path d="M-16.5,22.5 Q0,6.5 16.5,22.5" stroke="#efefe2" stroke-width="1.5" fill="none"/>
<path d="M-15,34.5 Q0,19 15,34.5" stroke="#9a9a8a" stroke-width="0.7" fill="none" opacity="0.5"/>
<path d="M-16.8,56 Q0,72 16.8,56 L16.8,44 Q0,60 -16.8,44 Z" fill="#000" opacity="0.09"/>
<path d="M-15,44.5 Q0,60 15,44.5" stroke="#9a9a8a" stroke-width="0.7" fill="none" opacity="0.5"/>
<path d="M-16.5,56 Q0,72 16.5,56" stroke="#efefe2" stroke-width="1.1" fill="none" opacity="0.8"/>
<rect x="-17.3" y="36" width="34.6" height="6.5" rx="1" fill="#ecece0"/><rect x="-17.3" y="37.8" width="34.6" height="2.8" fill="#3a3a38"/>
</g>
<ellipse cx="766.7" cy="1046.8" rx="26" ry="46" fill="url(#gShadow)"/>
<g transform="translate(766.7,1016.8)">
<path d="M-13,0 Q-17.7,0 -17.7,7 Q-13.2,39 -17.7,71 Q-17.7,78 -13,78 L13,78 Q17.7,78 17.7,71 Q13.2,39 17.7,7 Q17.7,0 13,0 Z" fill="url(#gCapCream)"/>
<path d="M-16.8,22 Q0,6 16.8,22 L16.8,35 Q0,19 -16.8,35 Z" fill="#000" opacity="0.09"/>
<path d="M-16.5,22.5 Q0,6.5 16.5,22.5" stroke="#efefe2" stroke-width="1.5" fill="none"/>
<path d="M-15,34.5 Q0,19 15,34.5" stroke="#9a9a8a" stroke-width="0.7" fill="none" opacity="0.5"/>
<path d="M-16.8,56 Q0,72 16.8,56 L16.8,44 Q0,60 -16.8,44 Z" fill="#000" opacity="0.09"/>
<path d="M-15,44.5 Q0,60 15,44.5" stroke="#9a9a8a" stroke-width="0.7" fill="none" opacity="0.5"/>
<path d="M-16.5,56 Q0,72 16.5,56" stroke="#efefe2" stroke-width="1.1" fill="none" opacity="0.8"/>
<rect x="-17.3" y="36" width="34.6" height="6.5" rx="1" fill="#ecece0"/><rect x="-17.3" y="37.8" width="34.6" height="2.8" fill="#3a3a38"/>
</g>
<ellipse cx="854.5" cy="994.5" rx="26" ry="46" fill="url(#gShadow)"/>
<g transform="translate(854.5,964.5)">
<path d="M-13,0 Q-17.7,0 -17.7,7 Q-13.2,39 -17.7,71 Q-17.7,78 -13,78 L13,78 Q17.7,78 17.7,71 Q13.2,39 17.7,7 Q17.7,0 13,0 Z" fill="url(#gCapCream)"/>
<path d="M-16.8,22 Q0,6 16.8,22 L16.8,35 Q0,19 -16.8,35 Z" fill="#000" opacity="0.09"/>
<path d="M-16.5,22.5 Q0,6.5 16.5,22.5" stroke="#efefe2" stroke-width="1.5" fill="none"/>
<path d="M-15,34.5 Q0,19 15,34.5" stroke="#9a9a8a" stroke-width="0.7" fill="none" opacity="0.5"/>
<path d="M-16.8,56 Q0,72 16.8,56 L16.8,44 Q0,60 -16.8,44 Z" fill="#000" opacity="0.09"/>
<path d="M-15,44.5 Q0,60 15,44.5" stroke="#9a9a8a" stroke-width="0.7" fill="none" opacity="0.5"/>
<path d="M-16.5,56 Q0,72 16.5,56" stroke="#efefe2" stroke-width="1.1" fill="none" opacity="0.8"/>
<rect x="-17.3" y="36" width="34.6" height="6.5" rx="1" fill="#ecece0"/><rect x="-17.3" y="37.8" width="34.6" height="2.8" fill="#3a3a38"/>
</g>
<ellipse cx="942.2" cy="912.3" rx="26" ry="46" fill="url(#gShadow)"/>
<g transform="translate(942.2,882.3)">
<path d="M-13,0 Q-17.7,0 -17.7,7 Q-13.2,39 -17.7,71 Q-17.7,78 -13,78 L13,78 Q17.7,78 17.7,71 Q13.2,39 17.7,7 Q17.7,0 13,0 Z" fill="url(#gCapCream)"/>
<path d="M-16.8,22 Q0,6 16.8,22 L16.8,35 Q0,19 -16.8,35 Z" fill="#000" opacity="0.09"/>
<path d="M-16.5,22.5 Q0,6.5 16.5,22.5" stroke="#efefe2" stroke-width="1.5" fill="none"/>
<path d="M-15,34.5 Q0,19 15,34.5" stroke="#9a9a8a" stroke-width="0.7" fill="none" opacity="0.5"/>
<path d="M-16.8,56 Q0,72 16.8,56 L16.8,44 Q0,60 -16.8,44 Z" fill="#000" opacity="0.09"/>
<path d="M-15,44.5 Q0,60 15,44.5" stroke="#9a9a8a" stroke-width="0.7" fill="none" opacity="0.5"/>
<path d="M-16.5,56 Q0,72 16.5,56" stroke="#efefe2" stroke-width="1.1" fill="none" opacity="0.8"/>
<rect x="-17.3" y="36" width="34.6" height="6.5" rx="1" fill="#ecece0"/><rect x="-17.3" y="37.8" width="34.6" height="2.8" fill="#3a3a38"/>
</g>
<ellipse cx="1030.0" cy="865.4" rx="26" ry="46" fill="url(#gShadow)"/>
<g transform="translate(1030.0,835.4)">
<path d="M-13,0 Q-17.7,0 -17.7,7 Q-13.2,39 -17.7,71 Q-17.7,78 -13,78 L13,78 Q17.7,78 17.7,71 Q13.2,39 17.7,7 Q17.7,0 13,0 Z" fill="url(#gCapCream)"/>
<path d="M-16.8,22 Q0,6 16.8,22 L16.8,35 Q0,19 -16.8,35 Z" fill="#000" opacity="0.09"/>
<path d="M-16.5,22.5 Q0,6.5 16.5,22.5" stroke="#efefe2" stroke-width="1.5" fill="none"/>
<path d="M-15,34.5 Q0,19 15,34.5" stroke="#9a9a8a" stroke-width="0.7" fill="none" opacity="0.5"/>
<path d="M-16.8,56 Q0,72 16.8,56 L16.8,44 Q0,60 -16.8,44 Z" fill="#000" opacity="0.09"/>
<path d="M-15,44.5 Q0,60 15,44.5" stroke="#9a9a8a" stroke-width="0.7" fill="none" opacity="0.5"/>
<path d="M-16.5,56 Q0,72 16.5,56" stroke="#efefe2" stroke-width="1.1" fill="none" opacity="0.8"/>
<rect x="-17.3" y="36" width="34.6" height="6.5" rx="1" fill="#ecece0"/><rect x="-17.3" y="37.8" width="34.6" height="2.8" fill="#3a3a38"/>
</g>
<ellipse cx="1117.7" cy="864.4" rx="26" ry="46" fill="url(#gShadow)"/>
<g transform="translate(1117.7,834.4)">
<path d="M-13,0 Q-17.7,0 -17.7,7 Q-13.2,39 -17.7,71 Q-17.7,78 -13,78 L13,78 Q17.7,78 17.7,71 Q13.2,39 17.7,7 Q17.7,0 13,0 Z" fill="url(#gCapGreen)"/>
<path d="M-16.8,22 Q0,6 16.8,22 L16.8,35 Q0,19 -16.8,35 Z" fill="#000" opacity="0.09"/>
<path d="M-16.5,22.5 Q0,6.5 16.5,22.5" stroke="#3aa070" stroke-width="1.5" fill="none"/>
<path d="M-15,34.5 Q0,19 15,34.5" stroke="#0c4a2c" stroke-width="0.7" fill="none" opacity="0.5"/>
<path d="M-16.8,56 Q0,72 16.8,56 L16.8,44 Q0,60 -16.8,44 Z" fill="#000" opacity="0.09"/>
<path d="M-15,44.5 Q0,60 15,44.5" stroke="#0c4a2c" stroke-width="0.7" fill="none" opacity="0.5"/>
<path d="M-16.5,56 Q0,72 16.5,56" stroke="#3aa070" stroke-width="1.1" fill="none" opacity="0.8"/>
<rect x="-17.5" y="37" width="35" height="4.5" fill="#e4e2d2"/>
</g>
<ellipse cx="1205.5" cy="911.0" rx="26" ry="46" fill="url(#gShadow)"/>
<g transform="translate(1205.5,881.0)">
<path d="M-13,0 Q-17.7,0 -17.7,7 Q-13.2,39 -17.7,71 Q-17.7,78 -13,78 L13,78 Q17.7,78 17.7,71 Q13.2,39 17.7,7 Q17.7,0 13,0 Z" fill="url(#gCapGreen)"/>
<path d="M-16.8,22 Q0,6 16.8,22 L16.8,35 Q0,19 -16.8,35 Z" fill="#000" opacity="0.09"/>
<path d="M-16.5,22.5 Q0,6.5 16.5,22.5" stroke="#3aa070" stroke-width="1.5" fill="none"/>
<path d="M-15,34.5 Q0,19 15,34.5" stroke="#0c4a2c" stroke-width="0.7" fill="none" opacity="0.5"/>
<path d="M-16.8,56 Q0,72 16.8,56 L16.8,44 Q0,60 -16.8,44 Z" fill="#000" opacity="0.09"/>
<path d="M-15,44.5 Q0,60 15,44.5" stroke="#0c4a2c" stroke-width="0.7" fill="none" opacity="0.5"/>
<path d="M-16.5,56 Q0,72 16.5,56" stroke="#3aa070" stroke-width="1.1" fill="none" opacity="0.8"/>
<rect x="-17.5" y="37" width="35" height="4.5" fill="#e4e2d2"/>
</g>
<ellipse cx="1293.2" cy="978.3" rx="26" ry="46" fill="url(#gShadow)"/>
<g transform="translate(1293.2,948.3)">
<path d="M-13,0 Q-17.7,0 -17.7,7 Q-13.2,39 -17.7,71 Q-17.7,78 -13,78 L13,78 Q17.7,78 17.7,71 Q13.2,39 17.7,7 Q17.7,0 13,0 Z" fill="url(#gCapRed)"/>
<path d="M-16.8,22 Q0,6 16.8,22 L16.8,35 Q0,19 -16.8,35 Z" fill="#000" opacity="0.09"/>
<path d="M-16.5,22.5 Q0,6.5 16.5,22.5" stroke="#f06050" stroke-width="1.5" fill="none"/>
<path d="M-15,34.5 Q0,19 15,34.5" stroke="#7a140c" stroke-width="0.7" fill="none" opacity="0.5"/>
<path d="M-16.8,56 Q0,72 16.8,56 L16.8,44 Q0,60 -16.8,44 Z" fill="#000" opacity="0.09"/>
<path d="M-15,44.5 Q0,60 15,44.5" stroke="#7a140c" stroke-width="0.7" fill="none" opacity="0.5"/>
<path d="M-16.5,56 Q0,72 16.5,56" stroke="#f06050" stroke-width="1.1" fill="none" opacity="0.8"/>
<rect x="-17.5" y="37" width="35" height="4.5" fill="#e4e2d2"/>
</g>
<ellipse cx="1381.0" cy="1056.8" rx="26" ry="46" fill="url(#gShadow)"/>
<g transform="translate(1381.0,1026.8)">
<path d="M-13,0 Q-17.7,0 -17.7,7 Q-13.2,39 -17.7,71 Q-17.7,78 -13,78 L13,78 Q17.7,78 17.7,71 Q13.2,39 17.7,7 Q17.7,0 13,0 Z" fill="url(#gCapRed)"/>
<path d="M-16.8,22 Q0,6 16.8,22 L16.8,35 Q0,19 -16.8,35 Z" fill="#000" opacity="0.09"/>
<path d="M-16.5,22.5 Q0,6.5 16.5,22.5" stroke="#f06050" stroke-width="1.5" fill="none"/>
<path d="M-15,34.5 Q0,19 15,34.5" stroke="#7a140c" stroke-width="0.7" fill="none" opacity="0.5"/>
<path d="M-16.8,56 Q0,72 16.8,56 L16.8,44 Q0,60 -16.8,44 Z" fill="#000" opacity="0.09"/>
<path d="M-15,44.5 Q0,60 15,44.5" stroke="#7a140c" stroke-width="0.7" fill="none" opacity="0.5"/>
<path d="M-16.5,56 Q0,72 16.5,56" stroke="#f06050" stroke-width="1.1" fill="none" opacity="0.8"/>
<rect x="-17.5" y="37" width="35" height="4.5" fill="#e4e2d2"/>
</g>
<rect x="1076.9" y="18.7" width="169.6" height="83.8" rx="4" fill="none" stroke="#f4f4fa" stroke-width="2"/>
<path d="M1075.9,47.0 L1075.9,21.7 Q1075.9,17.7 1079.9,17.7 L1243.5,17.7 Q1247.5,17.7 1247.5,21.7 L1247.5,47.0 Z" fill="#fff"/>
<text x="1161.7" y="37.4" font-size="13" fill="#1e1e5c" text-anchor="middle" >monitor out</text>
<text x="1088.0" y="57.0" font-size="11" fill="#fff" text-anchor="middle" >l</text>
<text x="1175.6" y="57.0" font-size="11" fill="#fff" text-anchor="middle" >r</text>
<use href="#jack" x="1117.4" y="74.0"/>
<use href="#jack" x="1205.3" y="74.0"/>
<rect x="1076.9" y="109.3" width="169.6" height="70.0" rx="4" fill="none" stroke="#f4f4fa" stroke-width="2"/>
<text x="1161.7" y="121.0" font-size="13" fill="#fff" text-anchor="middle" >aux out</text>
<text x="1088.5" y="132.5" font-size="10.5" fill="#fff" text-anchor="middle" >aux</text>
<text x="1088.5" y="142.5" font-size="10.5" fill="#fff" text-anchor="middle" >1</text>
<text x="1176.0" y="132.5" font-size="10.5" fill="#fff" text-anchor="middle" >aux</text>
<text x="1176.0" y="142.5" font-size="10.5" fill="#fff" text-anchor="middle" >2</text>
<use href="#jack" x="1117.4" y="149.1"/>
<use href="#jack" x="1205.3" y="149.1"/>
<rect x="1076.9" y="186.0" width="81.5" height="146.6" rx="4" fill="none" stroke="#f4f4fa" stroke-width="2"/>
<path d="M1075.9,214.6 L1075.9,189.0 Q1075.9,185.0 1079.9,185.0 L1155.4,185.0 Q1159.4,185.0 1159.4,189.0 L1159.4,214.6 Z" fill="#fff"/>
<text x="1155.9" y="197.6" font-size="12" fill="#1e1e5c" text-anchor="end" >13–14</text>
<text x="1087.9" y="222.5" font-size="10" fill="#fff" text-anchor="middle" >l</text>
<text x="1087.9" y="288.6" font-size="10" fill="#fff" text-anchor="middle" >r</text>
<text x="1155.9" y="275.0" font-size="8.5" fill="#fff" text-anchor="end" >(mono)</text>
<use href="#jack" x="1117.4" y="241.5"/>
<use href="#jack" x="1117.4" y="306.6"/>
<rect x="1164.8" y="186.0" width="81.5" height="146.6" rx="4" fill="none" stroke="#f4f4fa" stroke-width="2"/>
<path d="M1163.8,214.6 L1163.8,189.0 Q1163.8,185.0 1167.8,185.0 L1243.3,185.0 Q1247.3,185.0 1247.3,189.0 L1247.3,214.6 Z" fill="#fff"/>
<text x="1243.8" y="197.6" font-size="12" fill="#1e1e5c" text-anchor="end" >15–16</text>
<text x="1175.8" y="222.5" font-size="10" fill="#fff" text-anchor="middle" >l</text>
<text x="1175.8" y="288.6" font-size="10" fill="#fff" text-anchor="middle" >r</text>
<text x="1243.8" y="275.0" font-size="8.5" fill="#fff" text-anchor="end" >(mono)</text>
<use href="#jack" x="1205.3" y="241.5"/>
<use href="#jack" x="1205.3" y="306.6"/>
<rect x="1252.6" y="18.7" width="169.3" height="186.3" rx="4" fill="none" stroke="#f4f4fa" stroke-width="2"/>
<path d="M1251.6,47.0 L1251.6,21.7 Q1251.6,17.7 1255.6,17.7 L1418.9,17.7 Q1422.9,17.7 1422.9,21.7 L1422.9,47.0 Z" fill="#fff"/>
<text x="1337.0" y="37.4" font-size="13" fill="#1e1e5c" text-anchor="middle" >main out</text>
<text x="1293.0" y="57.0" font-size="11.5" fill="#fff" text-anchor="middle" >master left</text>
<text x="1381.0" y="57.0" font-size="11.5" fill="#fff" text-anchor="middle" >master right</text>
<use href="#xlrM" x="1293.4" y="101.0"/>
<use href="#xlrM" x="1381.3" y="101.0"/>
<use href="#screwS" x="1260.4" y="68.3"/>
<use href="#screwS" x="1326.4" y="133.8"/>
<use href="#screwS" x="1348.3" y="68.3"/>
<use href="#screwS" x="1414.3" y="133.8"/>
<text x="1255.0" y="150.0" font-size="11.5" fill="#fff" text-anchor="start" >insert</text>
<text x="1343.0" y="150.0" font-size="11.5" fill="#fff" text-anchor="start" >insert</text>
<use href="#jack" x="1293.4" y="176.4"/>
<use href="#jack" x="1381.3" y="176.4"/>
<rect x="1252.6" y="212.7" width="169.3" height="118.3" rx="4" fill="none" stroke="#f4f4fa" stroke-width="2"/>
<rect x="1349.9" y="211.7" width="2" height="120" fill="#f4f4fa"/>
<path d="M1350.9,240.7 L1350.9,211.7 L1418.9,211.7 Q1422.9,211.7 1422.9,215.7 L1422.9,240.7 Z" fill="#fff"/>
<rect x="1252.6" y="272.8" width="98" height="2" fill="#c8c8e0"/>
<text x="1301.0" y="229.0" font-size="12" fill="#fff" text-anchor="middle" >2 track</text>
<text x="1301.0" y="327.0" font-size="12" fill="#fff" text-anchor="middle" >record out</text>
<text x="1386.9" y="231.0" font-size="12.5" fill="#1e1e5c" text-anchor="middle" >phones</text>
<rect x="1290" y="249.4" width="24" height="2" fill="#d0d0e8"/>
<circle cx="1278.2" cy="250.4" r="17.3" fill="#050505"/><circle cx="1278.2" cy="250.4" r="13.5" fill="#555"/><circle cx="1278.2" cy="250.4" r="12" fill="#222"/><circle cx="1278.2" cy="250.4" r="10.3" fill="#ffffff"/><circle cx="1278.2" cy="250.4" r="5.5" fill="#000"/>
<circle cx="1324.6" cy="250.4" r="17.3" fill="#050505"/><circle cx="1324.6" cy="250.4" r="13.5" fill="#555"/><circle cx="1324.6" cy="250.4" r="12" fill="#222"/><circle cx="1324.6" cy="250.4" r="10.3" fill="#e01818"/><circle cx="1324.6" cy="250.4" r="5.5" fill="#000"/>
<text x="1256.0" y="254.4" font-size="10" fill="#fff" text-anchor="middle" >l</text>
<text x="1347.0" y="254.4" font-size="10" fill="#fff" text-anchor="middle" >r</text>
<rect x="1290" y="295.7" width="24" height="2" fill="#d0d0e8"/>
<circle cx="1278.2" cy="296.7" r="17.3" fill="#050505"/><circle cx="1278.2" cy="296.7" r="13.5" fill="#555"/><circle cx="1278.2" cy="296.7" r="12" fill="#222"/><circle cx="1278.2" cy="296.7" r="10.3" fill="#ffffff"/><circle cx="1278.2" cy="296.7" r="5.5" fill="#000"/>
<circle cx="1324.6" cy="296.7" r="17.3" fill="#050505"/><circle cx="1324.6" cy="296.7" r="13.5" fill="#555"/><circle cx="1324.6" cy="296.7" r="12" fill="#222"/><circle cx="1324.6" cy="296.7" r="10.3" fill="#e01818"/><circle cx="1324.6" cy="296.7" r="5.5" fill="#000"/>
<text x="1256.0" y="300.7" font-size="10" fill="#fff" text-anchor="middle" >l</text>
<text x="1347.0" y="300.7" font-size="10" fill="#fff" text-anchor="middle" >r</text>
<g transform="translate(1386.9,259)" fill="none" stroke="#fff" stroke-width="1.8"><path d="M-9,4 Q-9,-9 0,-9 Q9,-9 9,4"/><rect x="-10.5" y="2" width="4" height="8" rx="1.5" fill="#fff"/><rect x="6.5" y="2" width="4" height="8" rx="1.5" fill="#fff"/></g>
<use href="#jack" x="1387.6" y="306.4"/>
<text x="1161.5" y="370.8" font-size="23" fill="#fff" text-anchor="middle" transform="translate(1161.5,0) scale(1.3,1) translate(-1161.5,0)" letter-spacing="1">DM16</text>
<g transform="translate(1266.7,362.5)"><circle r="11.5" fill="none" stroke="#fff" stroke-width="2.6"/><circle r="7" fill="#fff"/><rect x="-1.6" y="-9" width="3.2" height="18" fill="#252468"/><rect x="-9" y="-1.6" width="18" height="3.2" fill="#252468"/><circle r="2.4" fill="#fff"/></g>
<g fill="#fff"><path d="M1284,375 L1284,350 L1312,350 Q1320,350 1320,358 L1320,375 L1313,375 L1313,357 L1305,357 L1305,375 L1298,375 L1298,357 L1291,357 L1291,375 Z"/><rect x="1324" y="350" width="7" height="25"/><path d="M1335,350 L1355,350 Q1365,350 1365,360 L1365,365 Q1365,375 1355,375 L1335,375 Z M1342,357 L1342,368 L1354,368 Q1358,368 1358,364 L1358,361 Q1358,357 1354,357 Z" fill-rule="evenodd"/><path d="M1369,375 L1369,360 Q1369,350 1379,350 L1391,350 Q1400,350 1400,360 L1400,375 L1393,375 L1393,367 L1376,367 L1376,375 Z M1376,361 L1393,361 L1393,359 Q1393,357 1390,357 L1379,357 Q1376,357 1376,360 Z" fill-rule="evenodd"/><path d="M1419,350 L1412,350 Q1403,350 1403,358 Q1403,366 1412,366 L1412,366 Q1412,368 1410,368 L1403,368 L1403,375 L1411,375 Q1420,375 1420,367 Q1420,359 1411,359 Q1410,359 1410,358 Q1410,357 1412,357 L1419,357 Z"/></g>
<rect x="1282" y="353.6" width="140" height="1.2" fill="#2a2970"/>
<rect x="1282" y="357.6" width="140" height="1.2" fill="#2a2970"/>
<rect x="1282" y="361.6" width="140" height="1.2" fill="#2a2970"/>
<rect x="1282" y="365.6" width="140" height="1.2" fill="#2a2970"/>
<rect x="1282" y="369.6" width="140" height="1.2" fill="#2a2970"/>
<rect x="1282" y="373.6" width="140" height="1.2" fill="#2a2970"/>
<rect x="1252.6" y="391.8" width="169.3" height="68.9" rx="4" fill="none" stroke="#f4f4fa" stroke-width="2"/>
<path d="M1251.6,420.4 L1251.6,394.8 Q1251.6,390.8 1255.6,390.8 L1418.9,390.8 Q1422.9,390.8 1422.9,394.8 L1422.9,420.4 Z" fill="#fff"/>
<text x="1337.0" y="410.5" font-size="13" fill="#1e1e5c" text-anchor="middle" >phantom power</text>
<use href="#led" x="1292.7" y="439.8"/>
<text x="1292.7" y="458.0" font-size="9" fill="#fff" text-anchor="middle" >+48V</text>
<rect x="1323.6" y="429.1" width="27" height="22" rx="2" fill="#0a0a14"/><rect x="1324.6" y="430.1" width="25" height="19.8" rx="1.5" fill="#e0352a"/>
<path d="M1380.6,429.8 L1391,451.3 L1370.2,451.3 Z" fill="#fff"/><rect x="1379.6" y="436" width="2" height="8" fill="#252468"/><rect x="1379.6" y="446" width="2" height="2.2" fill="#252468"/>
<rect x="1252.6" y="467.5" width="169.3" height="101.4" rx="4" fill="none" stroke="#f4f4fa" stroke-width="2"/>
<path d="M1251.6,495.6 L1251.6,470.5 Q1251.6,466.5 1255.6,466.5 L1418.9,466.5 Q1422.9,466.5 1422.9,470.5 L1422.9,495.6 Z" fill="#fff"/>
<text x="1337.0" y="485.5" font-size="13" fill="#1e1e5c" text-anchor="middle" >local monitor</text>
<text x="1292.7" y="509.4" font-size="11.5" fill="#fff" text-anchor="middle" >local</text>
<text x="1380.6" y="509.4" font-size="11.5" fill="#fff" text-anchor="middle" >phones</text>
<ellipse cx="1294.1" cy="549.1" rx="24" ry="26" fill="url(#gShadow)"/>
<g transform="translate(1294.1,540.1)"><use href="#kRedL"/><line x1="0" y1="0" x2="0" y2="-17" stroke="#f4f2e8" stroke-width="3.4" stroke-linecap="round" transform="rotate(0)"/></g>
<ellipse cx="1381.3" cy="549.1" rx="24" ry="26" fill="url(#gShadow)"/>
<g transform="translate(1381.3,540.1)"><use href="#kGreyL"/><line x1="0" y1="0" x2="0" y2="-17" stroke="#f4f2e8" stroke-width="3.4" stroke-linecap="round" transform="rotate(95)"/></g>
<text x="1280.0" y="565.7" font-size="8.5" fill="#fff" text-anchor="middle" >0</text>
<text x="1309.0" y="565.7" font-size="8.5" fill="#fff" text-anchor="middle" >10</text>
<text x="1367.5" y="565.7" font-size="8.5" fill="#fff" text-anchor="middle" >0</text>
<text x="1396.0" y="565.7" font-size="8.5" fill="#fff" text-anchor="middle" >10</text>
<rect x="1252.6" y="576.4" width="81.4" height="242.8" rx="4" fill="none" stroke="#f4f4fa" stroke-width="2"/>
<rect x="1252.6" y="702.7" width="82" height="2" fill="#f4f4fa"/>
<text x="1292.7" y="590.0" font-size="12" fill="#fff" text-anchor="middle" >aux masters</text>
<rect x="1279.7" y="596.3" width="27" height="22" rx="2" fill="#0a0a14"/><rect x="1280.7" y="597.3" width="25" height="20" rx="1.5" fill="#eceadb"/>
<text x="1272.7" y="630.8" font-size="11" fill="#fff" text-anchor="start" >aux 1 pre</text>
<text x="1272.7" y="640.8" font-size="11" fill="#fff" text-anchor="start" >aux 1 post</text>
<rect x="1259" y="625.3" width="9" height="3" fill="#fff"/><rect x="1260.5" y="623.3" width="6" height="2" fill="#fff"/><rect x="1259" y="637.8" width="9" height="2" fill="#fff"/><rect x="1261" y="636.3" width="5" height="1.5" fill="#fff"/>
<rect x="1279.7" y="650.8" width="27" height="22" rx="2" fill="#0a0a14"/><rect x="1280.7" y="651.8" width="25" height="20" rx="1.5" fill="#eceadb"/>
<text x="1272.7" y="685.3" font-size="11" fill="#fff" text-anchor="start" >aux 2 pre</text>
<text x="1272.7" y="695.3" font-size="11" fill="#fff" text-anchor="start" >aux 2 post</text>
<rect x="1259" y="679.8" width="9" height="3" fill="#fff"/><rect x="1260.5" y="677.8" width="6" height="2" fill="#fff"/><rect x="1259" y="692.3" width="9" height="2" fill="#fff"/><rect x="1261" y="690.8" width="5" height="1.5" fill="#fff"/>
<text x="1292.7" y="719.6" font-size="12" fill="#fff" text-anchor="middle" >2 track</text>
<rect x="1279.7" y="726.2" width="27" height="22" rx="2" fill="#0a0a14"/><rect x="1280.7" y="727.2" width="25" height="19.5" rx="1.5" fill="#eceadb"/>
<text x="1292.7" y="760.4" font-size="11" fill="#fff" text-anchor="middle" >monitor</text>
<rect x="1279.7" y="779.8" width="27" height="22" rx="2" fill="#0a0a14"/><rect x="1280.7" y="780.8" width="25" height="20.4" rx="1.5" fill="#eceadb"/>
<text x="1292.7" y="814.7" font-size="11" fill="#fff" text-anchor="middle" >mix</text>
<rect x="1340.0" y="576.4" width="81.9" height="242.4" rx="4" fill="none" stroke="#f4f4fa" stroke-width="2"/>
<path d="M1339.0,604.5 L1339.0,579.4 Q1339.0,575.4 1343.0,575.4 L1418.9,575.4 Q1422.9,575.4 1422.9,579.4 L1422.9,604.5 Z" fill="#fff"/>
<text x="1380.6" y="595.0" font-size="11.5" fill="#1e1e5c" text-anchor="middle" letter-spacing="-0.2">master meters</text>
<text x="1363.3" y="615.6" font-size="10.5" fill="#fff" text-anchor="middle" >pow</text>
<text x="1397.2" y="615.6" font-size="10.5" fill="#fff" text-anchor="middle" >pfl</text>
<circle cx="1363.5" cy="623.9" r="5.5" fill="#f0a010"/><circle cx="1363.5" cy="623.9" r="3" fill="#ffe060"/>
<use href="#led" x="1397.2" y="623.9"/>
<text x="1380.6" y="640.5" font-size="10.5" fill="#fff" text-anchor="middle" >mix/solo</text>
<use href="#led" x="1363.8" y="649.0"/>
<use href="#led" x="1397.2" y="649.0"/>
<text x="1380.6" y="652.6" font-size="9.5" fill="#fff" text-anchor="middle" >+16</text>
<use href="#led" x="1363.8" y="665.7"/>
<use href="#led" x="1397.2" y="665.7"/>
<text x="1380.6" y="669.3" font-size="9.5" fill="#fff" text-anchor="middle" >+10</text>
<circle cx="1363.8" cy="682.4" r="5.6" fill="#e8e000"/><circle cx="1363.8" cy="681.4" r="2.5" fill="#ffff90"/>
<circle cx="1397.2" cy="682.4" r="5.6" fill="#e8e000"/><circle cx="1397.2" cy="681.4" r="2.5" fill="#ffff90"/>
<text x="1380.6" y="686.0" font-size="9.5" fill="#fff" text-anchor="middle" >6</text>
<circle cx="1363.8" cy="699.1" r="5.6" fill="#e8e000"/><circle cx="1363.8" cy="698.1" r="2.5" fill="#ffff90"/>
<circle cx="1397.2" cy="699.1" r="5.6" fill="#e8e000"/><circle cx="1397.2" cy="698.1" r="2.5" fill="#ffff90"/>
<text x="1380.6" y="702.7" font-size="9.5" fill="#fff" text-anchor="middle" >3</text>
<circle cx="1363.8" cy="715.8" r="5.6" fill="#e8e000"/><circle cx="1363.8" cy="714.8" r="2.5" fill="#ffff90"/>
<circle cx="1397.2" cy="715.8" r="5.6" fill="#e8e000"/><circle cx="1397.2" cy="714.8" r="2.5" fill="#ffff90"/>
<text x="1380.6" y="719.4" font-size="9.5" fill="#fff" text-anchor="middle" >0</text>
<circle cx="1363.8" cy="732.5" r="5.6" fill="#40d010"/><circle cx="1363.8" cy="731.5" r="2.5" fill="#a0ff60"/>
<circle cx="1397.2" cy="732.5" r="5.6" fill="#40d010"/><circle cx="1397.2" cy="731.5" r="2.5" fill="#a0ff60"/>
<text x="1380.6" y="736.1" font-size="9.5" fill="#fff" text-anchor="middle" >–3</text>
<circle cx="1363.8" cy="749.2" r="5.6" fill="#40d010"/><circle cx="1363.8" cy="748.2" r="2.5" fill="#a0ff60"/>
<circle cx="1397.2" cy="749.2" r="5.6" fill="#40d010"/><circle cx="1397.2" cy="748.2" r="2.5" fill="#a0ff60"/>
<text x="1380.6" y="752.8" font-size="9.5" fill="#fff" text-anchor="middle" >–6</text>
<circle cx="1363.8" cy="765.9" r="5.6" fill="#40d010"/><circle cx="1363.8" cy="764.9" r="2.5" fill="#a0ff60"/>
<circle cx="1397.2" cy="765.9" r="5.6" fill="#40d010"/><circle cx="1397.2" cy="764.9" r="2.5" fill="#a0ff60"/>
<text x="1380.6" y="769.5" font-size="9.5" fill="#fff" text-anchor="middle" >–12</text>
<circle cx="1363.8" cy="782.6" r="5.6" fill="#40d010"/><circle cx="1363.8" cy="781.6" r="2.5" fill="#a0ff60"/>
<circle cx="1397.2" cy="782.6" r="5.6" fill="#40d010"/><circle cx="1397.2" cy="781.6" r="2.5" fill="#a0ff60"/>
<text x="1380.6" y="786.2" font-size="9.5" fill="#fff" text-anchor="middle" >–16</text>
<circle cx="1363.8" cy="799.3" r="5.6" fill="#40d010"/><circle cx="1363.8" cy="798.3" r="2.5" fill="#a0ff60"/>
<circle cx="1397.2" cy="799.3" r="5.6" fill="#40d010"/><circle cx="1397.2" cy="798.3" r="2.5" fill="#a0ff60"/>
<text x="1380.6" y="802.9" font-size="9.5" fill="#fff" text-anchor="middle" >–22</text>
<text x="1363.8" y="816.7" font-size="10.5" fill="#fff" text-anchor="middle" >l</text>
<text x="1397.2" y="816.7" font-size="10.5" fill="#fff" text-anchor="middle" >r</text>
<use href="#screwB" x="116.5" y="305.7"/>
<use href="#screwB" x="642.7" y="305.7"/>
<use href="#screwB" x="993.0" y="305.7"/>
<use href="#screwB" x="1170.0" y="424.0"/>
<use href="#screwB" x="116.5" y="599.0"/>
<use href="#screwB" x="642.7" y="599.0"/>
<use href="#screwB" x="108.4" y="829.0"/>
<use href="#screwB" x="371.2" y="828.0"/>
<use href="#screwB" x="634.5" y="828.0"/>
<use href="#screwB" x="898.0" y="828.0"/>
<use href="#screwB" x="1161.0" y="828.0"/>
<use href="#screwB" x="108.4" y="1078.0"/>
<use href="#screwB" x="285.0" y="1078.0"/>
<use href="#screwB" x="459.6" y="1078.0"/>
<use href="#screwB" x="634.5" y="1078.0"/>
<use href="#screwB" x="810.0" y="1078.0"/>
<use href="#screwB" x="986.0" y="1078.0"/>
<use href="#screwB" x="1161.0" y="1078.0"/>
<use href="#screwB" x="1337.0" y="1078.0"/>
<use href="#screwB" x="1301.5" y="273.8"/>
<use href="#screwB" x="1403.9" y="403.5"/>
<use href="#screwB" x="1337.0" y="703.7"/></svg>
</body></html>
